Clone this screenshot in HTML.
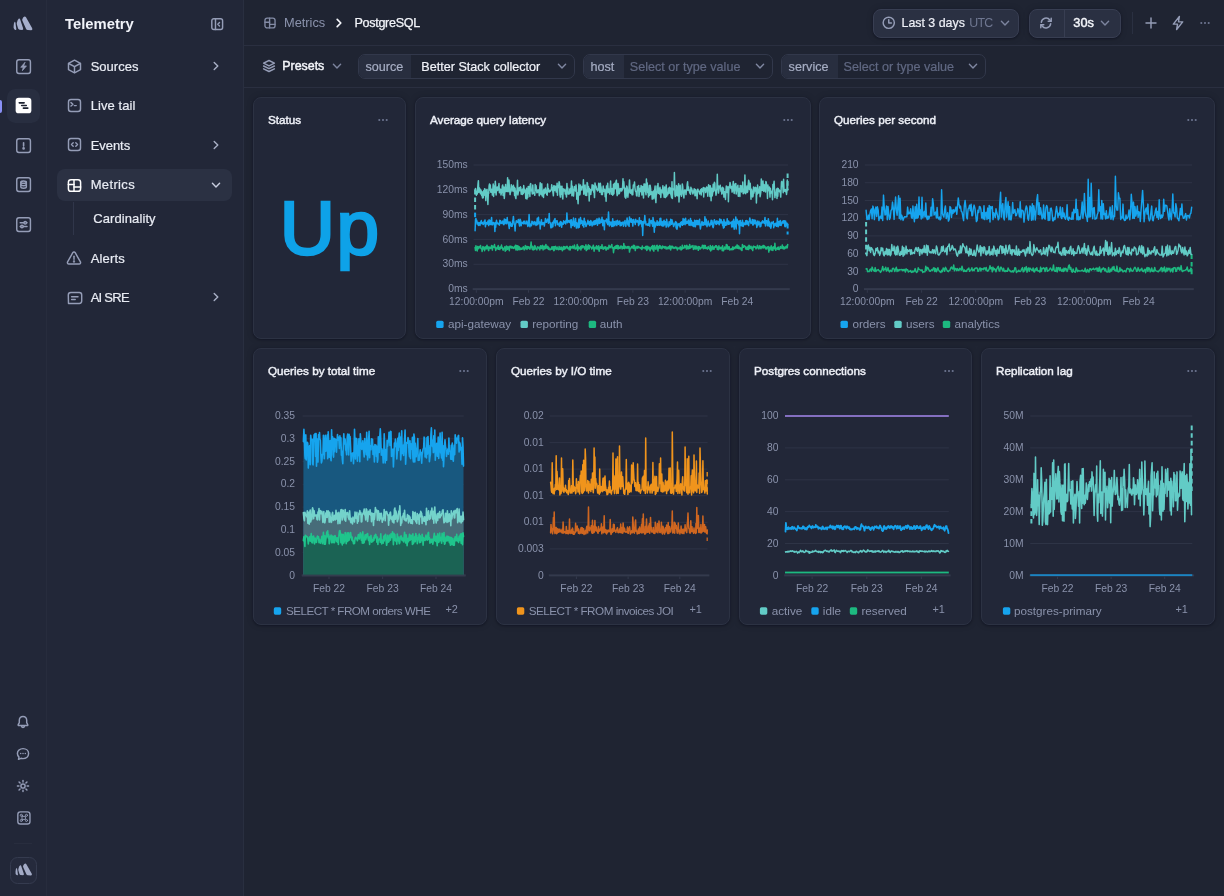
<!DOCTYPE html>
<html><head><meta charset="utf-8"><title>PostgreSQL - Metrics</title>
<style>
*{box-sizing:border-box;margin:0;padding:0}
html,body{width:1224px;height:896px;overflow:hidden;background:#1f2432;}
body{font-family:"Liberation Sans",sans-serif;color:#e6e9f2;position:relative;-webkit-font-smoothing:antialiased}
#app{position:absolute;left:0;top:0;width:1224px;height:896px;will-change:transform;overflow:hidden}
.abs{position:absolute}
.t{position:absolute;white-space:pre;height:20px;line-height:20px}
#rail{position:absolute;left:0;top:0;width:47px;height:896px;background:#222738;border-right:1px solid #272c3d}
#side{position:absolute;left:47px;top:0;width:197px;height:896px;background:#222738;border-right:1px solid #292f40}
#topline{position:absolute;left:244px;top:45px;width:980px;height:1px;background:#2a2f40}
#filtline{position:absolute;left:244px;top:87px;width:980px;height:1px;background:#2a2f40}
.card{position:absolute;background:#222738;border:1px solid #2c3243;border-radius:8px;box-shadow:0 1px 2px rgba(10,14,26,0.45),0 0 6px rgba(12,16,30,0.22)}
.ct{font-size:11.7px;font-weight:400;-webkit-text-stroke:0.45px #eef0f7;color:#eef0f7}
.nav{font-size:13px;color:#e9ecf4;-webkit-text-stroke:0.2px #e9ecf4;margin-top:0.5px}
.pill{position:absolute;top:54px;height:25px;border:1px solid #32384b;border-radius:7px;background:#1f2432;overflow:hidden}
.pill .lab{position:absolute;left:0;top:0;height:23px;background:#282e3f;}
.btn{position:absolute;background:#2a3042;border:1px solid #383e52;border-radius:8px;box-shadow:0 1px 2px rgba(10,14,26,0.45),0 0 6px rgba(12,16,30,0.22)}
svg{position:absolute;overflow:visible}
</style></head>
<body>
<div id="app">
<div id="rail"></div>
<div id="side"></div>
<svg style="left:13.40px;top:15.70px" width="20" height="15.00" viewBox="0 0 20 15"><g fill="#a6afcd" stroke="none"><path d="M0.6 10.0 Q0.8 7.0 1.5 6.0 Q2.1 5.5 2.4 6.6 L3.3 12.8 Q3.5 14.4 2.5 14.0 L1.5 13.4 Q0.7 12.8 0.6 11.6 Z"/><path d="M3.9 6.6 Q4.6 3.5 5.9 2.6 Q6.7 2.2 7.1 3.3 L10.1 12.2 Q10.6 13.9 9.2 13.9 L6.6 13.8 Q5.5 13.7 5.1 12.6 L3.9 8.6 Q3.6 7.6 3.9 6.6 Z"/><path d="M9.3 3.2 Q10.2 0.9 11.6 0.5 Q12.5 0.4 13.0 1.3 L19.2 12.3 Q19.9 14.1 18.2 14.2 L14.8 14.1 Q13.5 14.0 13.0 12.8 L9.4 4.8 Q9.0 4.0 9.3 3.2 Z"/></g></svg>
<svg style="left:15.80px;top:58.70px" width="15.2" height="15.2" viewBox="0 0 16 16" fill="none" stroke="#959db7" stroke-width="1.526" stroke-linecap="round" stroke-linejoin="round" ><rect x="0.8" y="0.8" width="14.4" height="14.4" rx="2.3"/><path d="M9.3 3.7 L5.0 8.7 H7.7 L6.7 12.3 L11.0 7.3 H8.3 Z" fill="#959db7" stroke-width="0.8"/></svg>
<div class="abs" style="left:6.5px;top:89px;width:33.5px;height:33.5px;border-radius:8.5px;background:#282e40"></div>
<div class="abs" style="left:0;top:99.5px;width:2px;height:13px;border-radius:0 2px 2px 0;background:#8a90f6"></div>
<svg style="left:15.00px;top:97.10px" width="17" height="17" viewBox="0 0 16 16" fill="none" stroke="#959db7" stroke-width="1.365" stroke-linecap="round" stroke-linejoin="round" ><rect x="0.6" y="0.6" width="14.8" height="14.8" rx="3" fill="#ffffff" stroke="none"/><g stroke="#1d2231" stroke-width="1.5"><path d="M4.0 5.5 H8.6"/><path d="M6.3 8 H10.6"/><path d="M7.9 10.5 H12.0"/></g></svg>
<svg style="left:15.80px;top:137.50px" width="15.2" height="15.2" viewBox="0 0 16 16" fill="none" stroke="#959db7" stroke-width="1.526" stroke-linecap="round" stroke-linejoin="round" ><rect x="0.8" y="0.8" width="14.4" height="14.4" rx="2.3"/><path d="M8 5.0 V8.5" stroke-width="1.7"/><circle cx="8" cy="11.0" r="0.65" fill="#959db7"/></svg>
<svg style="left:15.80px;top:177.00px" width="15.2" height="15.2" viewBox="0 0 16 16" fill="none" stroke="#959db7" stroke-width="1.526" stroke-linecap="round" stroke-linejoin="round" ><rect x="0.8" y="0.8" width="14.4" height="14.4" rx="2.3"/><ellipse cx="8" cy="5.4" rx="2.9" ry="1.25"/><path d="M5.1 5.4 V10.6 C5.1 11.3 6.4 11.85 8 11.85 C9.6 11.85 10.9 11.3 10.9 10.6 V5.4"/><path d="M5.1 8 C5.1 8.7 6.4 9.25 8 9.25 C9.6 9.25 10.9 8.7 10.9 8"/></svg>
<svg style="left:15.80px;top:216.50px" width="15.2" height="15.2" viewBox="0 0 16 16" fill="none" stroke="#959db7" stroke-width="1.526" stroke-linecap="round" stroke-linejoin="round" ><rect x="0.8" y="0.8" width="14.4" height="14.4" rx="2.3"/><path d="M4.4 6 H8.2"/><circle cx="9.7" cy="6" r="1.3"/><path d="M11.6 10 H7.8"/><circle cx="6.3" cy="10" r="1.3"/><path d="M11 6 H11.6"/><path d="M4.4 10 H5"/></svg>
<svg style="left:16.40px;top:714.70px" width="14" height="14" viewBox="0 0 14 14" fill="none" stroke="#959db7" stroke-width="1.450" stroke-linecap="round" stroke-linejoin="round" ><path d="M7 1.4 C4.7 1.4 3.3 3.1 3.3 5.3 V7.6 L2.2 9.7 C2.0 10.1 2.3 10.5 2.7 10.5 H11.3 C11.7 10.5 12.0 10.1 11.8 9.7 L10.7 7.6 V5.3 C10.7 3.1 9.3 1.4 7 1.4 Z"/><path d="M5.5 11 C5.7 11.9 6.3 12.4 7 12.4 C7.7 12.4 8.3 11.9 8.5 11"/></svg>
<svg style="left:16.40px;top:746.70px" width="14" height="14" viewBox="0 0 14 14" fill="none" stroke="#959db7" stroke-width="1.450" stroke-linecap="round" stroke-linejoin="round" ><path d="M7 1.6 C3.8 1.6 1.4 3.8 1.4 6.6 C1.4 8.0 2.0 9.2 3.0 10.1 L2.5 12.3 L5.0 11.3 C5.6 11.5 6.3 11.6 7 11.6 C10.2 11.6 12.6 9.4 12.6 6.6 C12.6 3.8 10.2 1.6 7 1.6 Z"/><g fill="#959db7" stroke="none"><circle cx="4.7" cy="6.6" r="0.75"/><circle cx="7" cy="6.6" r="0.75"/><circle cx="9.3" cy="6.6" r="0.75"/></g></svg>
<svg style="left:16.40px;top:778.90px" width="14" height="14" viewBox="0 0 14 14" fill="none" stroke="#959db7" stroke-width="1.450" stroke-linecap="round" stroke-linejoin="round" ><circle cx="7" cy="7" r="2.1"/><path d="M11.10 7.00 L12.60 7.00"/><path d="M9.90 9.90 L10.96 10.96"/><path d="M7.00 11.10 L7.00 12.60"/><path d="M4.10 9.90 L3.04 10.96"/><path d="M2.90 7.00 L1.40 7.00"/><path d="M4.10 4.10 L3.04 3.04"/><path d="M7.00 2.90 L7.00 1.40"/><path d="M9.90 4.10 L10.96 3.04"/></svg>
<svg style="left:16.50px;top:811.20px" width="13.8" height="13.8" viewBox="0 0 15 15" fill="none" stroke="#959db7" stroke-width="1.576" stroke-linecap="round" stroke-linejoin="round" ><rect x="0.9" y="0.9" width="13.2" height="13.2" rx="2.8" stroke-width="1.5"/><g stroke-width="1.0"><path d="M5.85 5.85 H9.15 V9.15 H5.85 Z"/><circle cx="4.7" cy="4.7" r="1.15"/><circle cx="10.3" cy="4.7" r="1.15"/><circle cx="4.7" cy="10.3" r="1.15"/><circle cx="10.3" cy="10.3" r="1.15"/></g></svg>
<div class="abs" style="left:14px;top:843px;width:18px;height:1px;background:#282d3e"></div>
<div class="abs" style="left:10px;top:856.5px;width:27px;height:27px;border-radius:7.5px;background:#252a3c;border:1px solid #353b4f"></div>
<svg style="left:14.65px;top:863.44px" width="17.5" height="13.12" viewBox="0 0 20 15"><g fill="#a3abc6" stroke="none"><path d="M0.6 10.0 Q0.8 7.0 1.5 6.0 Q2.1 5.5 2.4 6.6 L3.3 12.8 Q3.5 14.4 2.5 14.0 L1.5 13.4 Q0.7 12.8 0.6 11.6 Z"/><path d="M3.9 6.6 Q4.6 3.5 5.9 2.6 Q6.7 2.2 7.1 3.3 L10.1 12.2 Q10.6 13.9 9.2 13.9 L6.6 13.8 Q5.5 13.7 5.1 12.6 L3.9 8.6 Q3.6 7.6 3.9 6.6 Z"/><path d="M9.3 3.2 Q10.2 0.9 11.6 0.5 Q12.5 0.4 13.0 1.3 L19.2 12.3 Q19.9 14.1 18.2 14.2 L14.8 14.1 Q13.5 14.0 13.0 12.8 L9.4 4.8 Q9.0 4.0 9.3 3.2 Z"/></g></svg>
<div class="t " style="left:65px;top:14.399999999999999px;font-size:14.8px;font-weight:700;color:#f1f3f9">Telemetry</div>
<svg style="left:210.70px;top:18.00px" width="12.4" height="12.4" viewBox="0 0 12.4 12.4" fill="none" stroke="#959db7" stroke-width="1.450" stroke-linecap="round" stroke-linejoin="round" stroke="#6f7792"><rect x="0.8" y="0.8" width="10.8" height="10.8" rx="2"/><path d="M4.5 0.8 V11.6"/><path d="M8.5 4.5 L6.8 6.2 L8.5 7.9"/></svg>
<svg style="left:66.90px;top:58.80px" width="15" height="15" viewBox="0 0 15 15" fill="none" stroke="#959db7" stroke-width="1.450" stroke-linecap="round" stroke-linejoin="round" ><path d="M7.5 1.2 L13.5 4.4 V10.6 L7.5 13.8 L1.5 10.6 V4.4 Z"/><path d="M1.7 4.5 L7.5 7.6 L13.3 4.5"/><path d="M7.5 7.6 V13.6"/></svg>
<svg style="left:67.00px;top:97.90px" width="15" height="15" viewBox="0 0 15 15" fill="none" stroke="#959db7" stroke-width="1.450" stroke-linecap="round" stroke-linejoin="round" ><rect x="1.5" y="1.5" width="12" height="12" rx="2.5"/><path d="M4.0 4.6 L5.9 6.3 L4.0 8.0"/><path d="M7.3 7.6 H9.2"/></svg>
<svg style="left:67.00px;top:137.40px" width="15" height="15" viewBox="0 0 15 15" fill="none" stroke="#959db7" stroke-width="1.450" stroke-linecap="round" stroke-linejoin="round" ><rect x="1.5" y="1.5" width="12" height="12" rx="2.5"/><path d="M6.2 5.8 L4.5 7.5 L6.2 9.2"/><path d="M8.8 5.8 L10.5 7.5 L8.8 9.2"/></svg>
<div class="abs" style="left:57px;top:168.5px;width:175px;height:32px;border-radius:8px;background:#2b3143"></div>
<div class="abs" style="left:73.4px;top:202px;width:1px;height:33px;background:#30364a"></div>
<svg style="left:66.80000000000001px;top:177.5px" width="15" height="15" viewBox="0 0 15 15" fill="none" stroke="#ffffff" stroke-width="1.5" stroke-linecap="round" stroke-linejoin="round"><rect x="1.4" y="1.7" width="12.2" height="11.6" rx="2.6"/><path d="M7.0 1.7 V13.3"/><path d="M1.4 6.6 H7.0"/><path d="M7.0 9.0 H13.6"/></svg>
<svg style="left:66.40px;top:250.20px" width="16" height="16" viewBox="0 0 16 16" fill="none" stroke="#959db7" stroke-width="1.450" stroke-linecap="round" stroke-linejoin="round" ><path d="M8 2.0 C8.5 2.0 8.9 2.2 9.2 2.7 L14.4 11.9 C14.9 12.8 14.3 14.0 13.2 14.0 H2.8 C1.7 14.0 1.1 12.8 1.6 11.9 L6.8 2.7 C7.1 2.2 7.5 2.0 8 2.0 Z"/><path d="M8 6.3 V9.2"/><circle cx="8" cy="11.4" r="0.45" fill="#959db7"/></svg>
<svg style="left:66.60px;top:289.80px" width="16" height="16" viewBox="0 0 16 16" fill="none" stroke="#959db7" stroke-width="1.450" stroke-linecap="round" stroke-linejoin="round" ><path d="M3.9 2.5 H12.3 C13.7 2.5 14.7 3.5 14.7 4.9 V11.1 C14.7 12.5 13.7 13.5 12.3 13.5 H1.5 L1.3 4.9 C1.3 3.5 2.5 2.5 3.9 2.5 Z"/><path d="M4.6 6.7 H11.0"/><path d="M4.6 9.5 H8.2"/></svg>
<svg style="left:211.8px;top:61px" width="8" height="10" viewBox="0 0 8 10" fill="none" stroke="#a9b0c6" stroke-width="1.4" stroke-linecap="round" stroke-linejoin="round"><path d="M2.2 1.4 L5.8 5 L2.2 8.6"/></svg>
<svg style="left:211.8px;top:140px" width="8" height="10" viewBox="0 0 8 10" fill="none" stroke="#a9b0c6" stroke-width="1.4" stroke-linecap="round" stroke-linejoin="round"><path d="M2.2 1.4 L5.8 5 L2.2 8.6"/></svg>
<svg style="left:211.8px;top:292px" width="8" height="10" viewBox="0 0 8 10" fill="none" stroke="#a9b0c6" stroke-width="1.4" stroke-linecap="round" stroke-linejoin="round"><path d="M2.2 1.4 L5.8 5 L2.2 8.6"/></svg>
<svg style="left:210.8px;top:180.8px" width="10" height="8" viewBox="0 0 10 8" fill="none" stroke="#c9cee0" stroke-width="1.4" stroke-linecap="round" stroke-linejoin="round"><path d="M1.4 2.3 L5 5.9 L8.6 2.3"/></svg>
<div class="t nav" style="left:90.7px;top:56px;letter-spacing:0px">Sources</div>
<div class="t nav" style="left:90.7px;top:95.5px;letter-spacing:0.07px">Live tail</div>
<div class="t nav" style="left:90.7px;top:135px;letter-spacing:-0.05px">Events</div>
<div class="t nav" style="left:90.7px;top:174.5px;letter-spacing:0.35px">Metrics</div>
<div class="t nav" style="left:90.7px;top:248px;letter-spacing:0.17px">Alerts</div>
<div class="t nav" style="left:90.7px;top:287px;letter-spacing:-0.75px">AI SRE</div>
<div class="t nav" style="left:93.2px;top:208.5px;letter-spacing:0.1px">Cardinality</div>
<div id="topline"></div><div id="filtline"></div>
<div class="t " style="left:284px;top:13px;font-size:12.8px;color:#8b93ad">Metrics</div>
<div class="t " style="left:354.5px;top:13px;font-size:12.6px;letter-spacing:-0.32px;-webkit-text-stroke:0.25px #f3f5fa;color:#f3f5fa">PostgreSQL</div>
<div class="btn" style="left:873px;top:9px;width:146px;height:29px"></div>
<div class="t " style="left:901.5px;top:13px;font-size:12.4px;-webkit-text-stroke:0.2px #eef0f7;color:#eef0f7">Last 3 days</div>
<div class="t " style="left:969.3px;top:13px;font-size:12.4px;letter-spacing:-0.8px;color:#6f7791">UTC</div>
<div class="btn" style="left:1029px;top:9px;width:92px;height:29px"></div>
<div class="abs" style="left:1064px;top:10px;width:1px;height:27px;background:#383e52"></div>
<div class="t " style="left:1073.3px;top:13px;font-size:12.8px;font-weight:400;-webkit-text-stroke:0.45px #f3f5fa;color:#f3f5fa">30s</div>
<div class="abs" style="left:1132px;top:12px;width:1px;height:22px;background:#2a3041"></div>
<svg style="left:263.8px;top:17.4px" width="12" height="12" viewBox="0 0 15 15" fill="none" stroke="#838ba5" stroke-width="1.7" stroke-linecap="round" stroke-linejoin="round"><rect x="1.2" y="1.4" width="12.6" height="12.2" rx="2.8"/><path d="M7.0 1.4 V13.6"/><path d="M1.2 6.6 H7.0"/><path d="M7.0 9.2 H13.8"/></svg>
<svg style="left:334.5px;top:18.3px" width="8" height="10" viewBox="0 0 8 10" fill="none" stroke="#f3f5fa" stroke-width="1.7" stroke-linecap="round" stroke-linejoin="round"><path d="M2.2 1.4 L5.8 5 L2.2 8.6"/></svg>
<svg style="left:882.35px;top:16.25px" width="13.5" height="13.5" viewBox="0 0 13.5 13.5" fill="none" stroke="#959db7" stroke-width="1.450" stroke-linecap="round" stroke-linejoin="round" stroke="#c3c8da"><circle cx="6.75" cy="6.75" r="5.6"/><path d="M6.75 3.6 V6.9 H9.4"/></svg>
<svg style="left:999.8px;top:19.3px" width="10" height="8" viewBox="0 0 10 8" fill="none" stroke="#7d859f" stroke-width="1.4" stroke-linecap="round" stroke-linejoin="round"><path d="M1.4 2.3 L5 5.9 L8.6 2.3"/></svg>
<svg style="left:1039.40px;top:16.00px" width="14" height="14" viewBox="0 0 14 14" fill="none" stroke="#959db7" stroke-width="1.450" stroke-linecap="round" stroke-linejoin="round" stroke="#c3c8da"><path d="M2.3 6.3 A4.8 4.8 0 0 1 10.9 4.0 L12.0 5.2"/><path d="M12.2 2.3 V5.3 H9.2"/><path d="M11.7 7.7 A4.8 4.8 0 0 1 3.1 10.0 L2.0 8.8"/><path d="M1.8 11.7 V8.7 H4.8"/></svg>
<svg style="left:1100.2px;top:19.3px" width="10" height="8" viewBox="0 0 10 8" fill="none" stroke="#7d859f" stroke-width="1.4" stroke-linecap="round" stroke-linejoin="round"><path d="M1.4 2.3 L5 5.9 L8.6 2.3"/></svg>
<svg style="left:1145.40px;top:17.00px" width="12" height="12" viewBox="0 0 12 12" fill="none" stroke="#959db7" stroke-width="1.450" stroke-linecap="round" stroke-linejoin="round" stroke="#c3c8da"><path d="M6 1 V11 M1 6 H11"/></svg>
<svg style="left:1170.00px;top:15.20px" width="16" height="16" viewBox="0 0 14 14" fill="none" stroke="#959db7" stroke-width="1.269" stroke-linecap="round" stroke-linejoin="round" stroke="#9ea6be"><path d="M8.2 1.3 L2.9 8.0 H6.6 L5.8 12.7 L11.1 6.0 H7.4 Z"/></svg>
<svg style="left:1199px;top:20px" width="12" height="6" viewBox="0 0 12 6"><g fill="#6d7590"><circle cx="2.3" cy="3" r="1.05"/><circle cx="6" cy="3" r="1.05"/><circle cx="9.7" cy="3" r="1.05"/></g></svg>
<div class="t " style="left:282.3px;top:56.400000000000006px;font-size:12.4px;font-weight:400;-webkit-text-stroke:0.45px #f3f5fa;color:#f3f5fa">Presets</div>
<div class="pill" style="left:357.5px;width:217.5px"><div class="lab" style="width:52.5px"></div></div><div class="t " style="left:365.5px;top:56.8px;font-size:12.6px;color:#a6adc3;-webkit-text-stroke:0.2px #a6adc3">source</div><div class="t " style="left:421.3px;top:56.8px;font-size:12.6px;color:#f1f3f9;-webkit-text-stroke:0.2px #f1f3f9">Better Stack collector</div>
<div class="pill" style="left:582.5px;width:190.5px"><div class="lab" style="width:40.5px"></div></div><div class="t " style="left:590.5px;top:56.8px;font-size:12.6px;color:#a6adc3;-webkit-text-stroke:0.2px #a6adc3">host</div><div class="t " style="left:629.8px;top:56.8px;font-size:12.6px;color:#606882;-webkit-text-stroke:0.2px #606882">Select or type value</div>
<div class="pill" style="left:780.5px;width:205.5px"><div class="lab" style="width:56.5px"></div></div><div class="t " style="left:788.6px;top:56.8px;font-size:12.6px;color:#a6adc3;-webkit-text-stroke:0.2px #a6adc3">service</div><div class="t " style="left:843.5px;top:56.8px;font-size:12.6px;color:#606882;-webkit-text-stroke:0.2px #606882">Select or type value</div>
<svg style="left:262.00px;top:59.00px" width="14" height="14" viewBox="0 0 14 14" fill="none" stroke="#959db7" stroke-width="1.450" stroke-linecap="round" stroke-linejoin="round" stroke="#b9c0d5"><path d="M7 1.5 L12.4 4.2 L7 6.9 L1.6 4.2 Z"/><path d="M1.6 7.0 L7 9.7 L12.4 7.0"/><path d="M1.6 9.8 L7 12.5 L12.4 9.8"/></svg>
<svg style="left:331.8px;top:62.3px" width="10" height="8" viewBox="0 0 10 8" fill="none" stroke="#7d859f" stroke-width="1.4" stroke-linecap="round" stroke-linejoin="round"><path d="M1.4 2.3 L5 5.9 L8.6 2.3"/></svg>
<svg style="left:557px;top:62.3px" width="10" height="8" viewBox="0 0 10 8" fill="none" stroke="#8088a2" stroke-width="1.4" stroke-linecap="round" stroke-linejoin="round"><path d="M1.4 2.3 L5 5.9 L8.6 2.3"/></svg>
<svg style="left:754.7px;top:62.3px" width="10" height="8" viewBox="0 0 10 8" fill="none" stroke="#8088a2" stroke-width="1.4" stroke-linecap="round" stroke-linejoin="round"><path d="M1.4 2.3 L5 5.9 L8.6 2.3"/></svg>
<svg style="left:968px;top:62.3px" width="10" height="8" viewBox="0 0 10 8" fill="none" stroke="#8088a2" stroke-width="1.4" stroke-linecap="round" stroke-linejoin="round"><path d="M1.4 2.3 L5 5.9 L8.6 2.3"/></svg>
<div class="card" style="left:253px;top:97px;width:153px;height:242px"></div>
<div class="t ct" style="left:268px;top:110px;">Status</div>
<svg style="left:376.7px;top:117px" width="12" height="6" viewBox="0 0 12 6"><g fill="#6d7590"><circle cx="2.3" cy="3" r="1.05"/><circle cx="6" cy="3" r="1.05"/><circle cx="9.7" cy="3" r="1.05"/></g></svg>
<div class="card" style="left:415px;top:97px;width:396px;height:242px"></div>
<div class="t ct" style="left:430px;top:110px;">Average query latency</div>
<svg style="left:781.7px;top:117px" width="12" height="6" viewBox="0 0 12 6"><g fill="#6d7590"><circle cx="2.3" cy="3" r="1.05"/><circle cx="6" cy="3" r="1.05"/><circle cx="9.7" cy="3" r="1.05"/></g></svg>
<div class="card" style="left:819px;top:97px;width:396px;height:242px"></div>
<div class="t ct" style="left:834px;top:110px;">Queries per second</div>
<svg style="left:1185.7px;top:117px" width="12" height="6" viewBox="0 0 12 6"><g fill="#6d7590"><circle cx="2.3" cy="3" r="1.05"/><circle cx="6" cy="3" r="1.05"/><circle cx="9.7" cy="3" r="1.05"/></g></svg>
<div class="card" style="left:253px;top:348px;width:234px;height:277px"></div>
<div class="t ct" style="left:268px;top:361px;">Queries by total time</div>
<svg style="left:457.7px;top:368px" width="12" height="6" viewBox="0 0 12 6"><g fill="#6d7590"><circle cx="2.3" cy="3" r="1.05"/><circle cx="6" cy="3" r="1.05"/><circle cx="9.7" cy="3" r="1.05"/></g></svg>
<div class="card" style="left:496px;top:348px;width:234px;height:277px"></div>
<div class="t ct" style="left:511px;top:361px;">Queries by I/O time</div>
<svg style="left:700.7px;top:368px" width="12" height="6" viewBox="0 0 12 6"><g fill="#6d7590"><circle cx="2.3" cy="3" r="1.05"/><circle cx="6" cy="3" r="1.05"/><circle cx="9.7" cy="3" r="1.05"/></g></svg>
<div class="card" style="left:739px;top:348px;width:233px;height:277px"></div>
<div class="t ct" style="left:754px;top:361px;">Postgres connections</div>
<svg style="left:942.7px;top:368px" width="12" height="6" viewBox="0 0 12 6"><g fill="#6d7590"><circle cx="2.3" cy="3" r="1.05"/><circle cx="6" cy="3" r="1.05"/><circle cx="9.7" cy="3" r="1.05"/></g></svg>
<div class="card" style="left:981px;top:348px;width:234px;height:277px"></div>
<div class="t ct" style="left:996px;top:361px;">Replication lag</div>
<svg style="left:1185.7px;top:368px" width="12" height="6" viewBox="0 0 12 6"><g fill="#6d7590"><circle cx="2.3" cy="3" r="1.05"/><circle cx="6" cy="3" r="1.05"/><circle cx="9.7" cy="3" r="1.05"/></g></svg>
<div class="abs" style="left:253.6px;top:173.3px;width:153px;height:110px;line-height:110px;text-align:center;font-size:76.5px;font-weight:400;-webkit-text-stroke:2.7px #0ea2e8;paint-order:stroke fill;color:#0ea2e8;letter-spacing:1.5px">Up</div>
<svg style="left:0;top:0" width="1224" height="896" viewBox="0 0 1224 896" font-family="Liberation Sans, sans-serif">
<rect x="473.5" y="164.5" width="314.5" height="1" fill="#2e3446"/><text x="467.7" y="168.1" text-anchor="end" font-size="10.3" fill="#8a92ab" >150ms</text><rect x="473.5" y="189.3" width="314.5" height="1" fill="#2e3446"/><text x="467.7" y="192.9" text-anchor="end" font-size="10.3" fill="#8a92ab" >120ms</text><rect x="473.5" y="214.1" width="314.5" height="1" fill="#2e3446"/><text x="467.7" y="217.7" text-anchor="end" font-size="10.3" fill="#8a92ab" >90ms</text><rect x="473.5" y="238.9" width="314.5" height="1" fill="#2e3446"/><text x="467.7" y="242.5" text-anchor="end" font-size="10.3" fill="#8a92ab" >60ms</text><rect x="473.5" y="263.8" width="314.5" height="1" fill="#2e3446"/><text x="467.7" y="267.4" text-anchor="end" font-size="10.3" fill="#8a92ab" >30ms</text><rect x="472.7" y="288.1" width="317.1" height="2" fill="#343a4d"/><text x="467.7" y="292.2" text-anchor="end" font-size="10.3" fill="#8a92ab" >0ms</text>
<path d="M475.1 189.8 L475.1 212.0" fill="none" stroke="#62cbc6" stroke-width="2.0" stroke-dasharray="4.6 3"/>
<path d="M475.1 212.6 L475.1 218.0" fill="none" stroke="#16a4ee" stroke-width="2.0" stroke-dasharray="4.6 3"/>
<path d="M787.6 173.5 L787.6 190.1" fill="none" stroke="#62cbc6" stroke-width="2.0" stroke-dasharray="4.6 3"/>
<path d="M787.6 224.0 L787.6 234.5" fill="none" stroke="#16a4ee" stroke-width="2.0" stroke-dasharray="4.6 3"/>
<path d="M475.1 189.8 L475.5 188.5 L475.9 191.0 L476.3 195.3 L476.7 191.8 L477.2 194.1 L477.6 189.6 L478.0 184.1 L478.4 180.7 L478.8 192.5 L479.2 187.7 L479.6 188.3 L480.0 189.4 L480.5 193.8 L480.9 189.9 L481.3 191.4 L481.7 195.6 L482.1 191.8 L482.5 198.0 L482.9 195.4 L483.3 197.7 L483.7 190.8 L484.2 195.3 L484.6 188.7 L485.0 189.1 L485.4 191.2 L485.8 200.6 L486.2 192.1 L486.6 190.0 L487.0 189.3 L487.5 196.4 L487.9 204.4 L488.3 194.0 L488.7 193.3 L489.1 186.0 L489.5 184.0 L489.9 190.0 L490.3 184.9 L490.8 192.3 L491.2 190.3 L491.6 189.3 L492.0 189.5 L492.4 195.1 L492.8 189.5 L493.2 184.0 L493.6 196.5 L494.0 186.1 L494.5 189.3 L494.9 192.6 L495.3 181.2 L495.7 186.5 L496.1 195.0 L496.5 189.5 L496.9 187.3 L497.3 190.6 L497.8 186.9 L498.2 190.1 L498.6 186.9 L499.0 183.6 L499.4 192.7 L499.8 188.9 L500.2 191.8 L500.6 189.3 L501.0 194.9 L501.5 192.3 L501.9 190.7 L502.3 186.0 L502.7 184.9 L503.1 195.5 L503.5 193.2 L503.9 187.0 L504.3 198.4 L504.8 191.8 L505.2 190.2 L505.6 184.4 L506.0 191.4 L506.4 191.2 L506.8 191.4 L507.2 190.9 L507.6 177.8 L508.0 191.7 L508.5 191.1 L508.9 180.0 L509.3 185.9 L509.7 190.7 L510.1 194.6 L510.5 189.9 L510.9 191.7 L511.3 184.8 L511.8 187.0 L512.2 189.9 L512.6 186.9 L513.0 191.3 L513.4 185.3 L513.8 189.8 L514.2 187.3 L514.6 195.4 L515.1 188.3 L515.5 197.1 L515.9 198.6 L516.3 191.1 L516.7 193.7 L517.1 189.1 L517.5 180.2 L517.9 194.9 L518.3 192.5 L518.8 188.9 L519.2 187.7 L519.6 190.6 L520.0 190.7 L520.4 186.8 L520.8 187.6 L521.2 194.3 L521.6 190.2 L522.1 189.7 L522.5 194.4 L522.9 188.7 L523.3 193.5 L523.7 185.6 L524.1 189.0 L524.5 189.4 L524.9 192.4 L525.3 190.3 L525.8 198.4 L526.2 194.7 L526.6 188.3 L527.0 199.0 L527.4 190.5 L527.8 197.3 L528.2 186.6 L528.6 193.5 L529.1 186.5 L529.5 189.3 L529.9 196.4 L530.3 184.4 L530.7 183.6 L531.1 190.1 L531.5 191.0 L531.9 190.5 L532.3 194.0 L532.8 185.1 L533.2 192.2 L533.6 193.5 L534.0 193.2 L534.4 192.5 L534.8 195.3 L535.2 184.4 L535.6 190.5 L536.1 185.7 L536.5 189.8 L536.9 192.8 L537.3 191.2 L537.7 192.2 L538.1 189.8 L538.5 191.4 L538.9 191.1 L539.3 195.8 L539.8 187.5 L540.2 182.7 L540.6 192.7 L541.0 194.4 L541.4 189.9 L541.8 183.8 L542.2 196.1 L542.6 190.7 L543.1 192.5 L543.5 197.4 L543.9 189.2 L544.3 193.7 L544.7 189.5 L545.1 193.1 L545.5 187.9 L545.9 192.1 L546.4 190.4 L546.8 194.6 L547.2 195.1 L547.6 184.1 L548.0 192.0 L548.4 188.6 L548.8 190.0 L549.2 191.7 L549.6 192.0 L550.1 190.5 L550.5 191.1 L550.9 190.5 L551.3 189.7 L551.7 184.8 L552.1 186.9 L552.5 188.2 L552.9 192.2 L553.4 195.8 L553.8 185.7 L554.2 185.7 L554.6 190.4 L555.0 187.5 L555.4 186.5 L555.8 186.2 L556.2 191.9 L556.6 191.8 L557.1 183.3 L557.5 195.2 L557.9 186.1 L558.3 187.7 L558.7 186.1 L559.1 181.7 L559.5 183.4 L559.9 194.7 L560.4 197.1 L560.8 186.3 L561.2 194.2 L561.6 189.9 L562.0 186.2 L562.4 196.9 L562.8 198.9 L563.2 188.7 L563.6 189.6 L564.1 190.9 L564.5 189.7 L564.9 189.2 L565.3 194.0 L565.7 190.5 L566.1 194.0 L566.5 196.9 L566.9 183.4 L567.4 190.1 L567.8 188.1 L568.2 194.1 L568.6 192.7 L569.0 194.1 L569.4 193.6 L569.8 189.0 L570.2 193.2 L570.7 188.3 L571.1 188.4 L571.5 181.1 L571.9 195.8 L572.3 186.0 L572.7 190.2 L573.1 189.9 L573.5 196.1 L573.9 191.8 L574.4 186.6 L574.8 190.2 L575.2 189.5 L575.6 191.1 L576.0 184.9 L576.4 189.9 L576.8 199.3 L577.2 192.8 L577.7 198.3 L578.1 203.8 L578.5 192.1 L578.9 184.1 L579.3 189.6 L579.7 194.9 L580.1 193.9 L580.5 185.0 L580.9 189.1 L581.4 189.6 L581.8 190.0 L582.2 186.4 L582.6 186.4 L583.0 187.4 L583.4 179.8 L583.8 194.3 L584.2 187.6 L584.7 192.8 L585.1 185.1 L585.5 195.3 L585.9 190.4 L586.3 189.9 L586.7 195.5 L587.1 182.4 L587.5 183.5 L587.9 191.8 L588.4 186.5 L588.8 188.2 L589.2 201.1 L589.6 188.7 L590.0 190.1 L590.4 189.5 L590.8 194.5 L591.2 191.0 L591.7 190.6 L592.1 184.7 L592.5 188.4 L592.9 189.8 L593.3 185.3 L593.7 192.2 L594.1 191.5 L594.5 197.6 L595.0 183.1 L595.4 185.7 L595.8 185.9 L596.2 186.9 L596.6 189.3 L597.0 188.9 L597.4 190.9 L597.8 190.7 L598.2 189.6 L598.7 183.3 L599.1 187.4 L599.5 190.1 L599.9 192.3 L600.3 183.2 L600.7 185.9 L601.1 187.6 L601.5 194.4 L602.0 191.3 L602.4 194.6 L602.8 190.1 L603.2 186.1 L603.6 191.5 L604.0 190.8 L604.4 190.8 L604.8 189.3 L605.2 196.7 L605.7 190.8 L606.1 201.3 L606.5 186.0 L606.9 193.1 L607.3 187.3 L607.7 183.3 L608.1 190.0 L608.5 192.4 L609.0 189.0 L609.4 189.8 L609.8 194.1 L610.2 187.8 L610.6 181.1 L611.0 190.9 L611.4 190.7 L611.8 194.3 L612.2 188.4 L612.7 195.2 L613.1 194.6 L613.5 184.3 L613.9 193.7 L614.3 185.2 L614.7 183.3 L615.1 188.7 L615.5 187.4 L616.0 181.4 L616.4 180.3 L616.8 192.4 L617.2 195.6 L617.6 189.6 L618.0 183.5 L618.4 185.7 L618.8 193.9 L619.3 193.5 L619.7 192.0 L620.1 188.6 L620.5 190.7 L620.9 188.9 L621.3 188.5 L621.7 191.1 L622.1 190.0 L622.5 188.9 L623.0 178.7 L623.4 187.7 L623.8 181.8 L624.2 187.3 L624.6 189.6 L625.0 197.1 L625.4 188.2 L625.8 198.2 L626.3 195.9 L626.7 186.1 L627.1 186.8 L627.5 190.5 L627.9 197.2 L628.3 191.4 L628.7 192.7 L629.1 187.1 L629.5 180.1 L630.0 188.9 L630.4 193.2 L630.8 192.9 L631.2 190.1 L631.6 190.6 L632.0 194.8 L632.4 189.3 L632.8 194.8 L633.3 185.0 L633.7 185.2 L634.1 185.2 L634.5 182.1 L634.9 187.6 L635.3 190.4 L635.7 191.5 L636.1 191.3 L636.5 195.4 L637.0 196.0 L637.4 186.4 L637.8 190.6 L638.2 188.9 L638.6 185.5 L639.0 196.5 L639.4 193.2 L639.8 189.1 L640.3 188.1 L640.7 191.4 L641.1 185.4 L641.5 188.9 L641.9 195.0 L642.3 193.8 L642.7 186.4 L643.1 187.8 L643.5 198.0 L644.0 184.0 L644.4 187.2 L644.8 184.0 L645.2 191.5 L645.6 191.7 L646.0 194.7 L646.4 178.9 L646.8 190.6 L647.3 183.0 L647.7 192.6 L648.1 189.1 L648.5 197.0 L648.9 191.5 L649.3 185.6 L649.7 195.2 L650.1 185.2 L650.6 188.4 L651.0 194.3 L651.4 192.0 L651.8 191.8 L652.2 199.3 L652.6 192.1 L653.0 193.4 L653.4 191.1 L653.8 198.8 L654.3 195.4 L654.7 190.0 L655.1 186.0 L655.5 196.4 L655.9 202.6 L656.3 192.6 L656.7 194.0 L657.1 186.1 L657.6 192.0 L658.0 183.4 L658.4 193.2 L658.8 188.2 L659.2 190.8 L659.6 194.1 L660.0 187.3 L660.4 190.5 L660.8 197.5 L661.3 190.0 L661.7 192.6 L662.1 190.3 L662.5 189.6 L662.9 185.7 L663.3 193.7 L663.7 190.0 L664.1 197.2 L664.6 187.0 L665.0 194.5 L665.4 197.6 L665.8 190.1 L666.2 185.1 L666.6 196.4 L667.0 194.5 L667.4 193.0 L667.8 194.7 L668.3 188.2 L668.7 193.3 L669.1 192.9 L669.5 187.3 L669.9 193.1 L670.3 188.0 L670.7 194.0 L671.1 195.0 L671.6 197.7 L672.0 181.8 L672.4 198.5 L672.8 188.8 L673.2 190.0 L673.6 189.1 L674.0 189.6 L674.4 172.5 L674.9 194.3 L675.3 196.5 L675.7 194.2 L676.1 195.6 L676.5 185.6 L676.9 186.3 L677.3 194.0 L677.7 195.8 L678.1 191.3 L678.6 183.8 L679.0 202.0 L679.4 193.3 L679.8 194.4 L680.2 185.3 L680.6 194.5 L681.0 191.0 L681.4 196.3 L681.9 194.0 L682.3 183.9 L682.7 186.3 L683.1 191.5 L683.5 193.6 L683.9 198.0 L684.3 191.5 L684.7 190.0 L685.1 190.2 L685.6 190.2 L686.0 194.6 L686.4 190.1 L686.8 190.0 L687.2 184.3 L687.6 181.8 L688.0 190.4 L688.4 186.7 L688.9 190.1 L689.3 190.5 L689.7 193.0 L690.1 190.1 L690.5 194.3 L690.9 187.2 L691.3 190.3 L691.7 188.7 L692.1 190.6 L692.6 192.9 L693.0 193.9 L693.4 190.8 L693.8 192.2 L694.2 188.8 L694.6 189.8 L695.0 195.7 L695.4 189.5 L695.9 195.6 L696.3 192.5 L696.7 191.1 L697.1 198.7 L697.5 189.4 L697.9 189.2 L698.3 190.5 L698.7 191.6 L699.2 191.4 L699.6 194.0 L700.0 191.0 L700.4 192.2 L700.8 189.4 L701.2 195.0 L701.6 188.8 L702.0 189.2 L702.4 190.4 L702.9 191.7 L703.3 187.4 L703.7 197.0 L704.1 187.8 L704.5 188.8 L704.9 188.6 L705.3 188.2 L705.7 192.6 L706.2 190.9 L706.6 187.1 L707.0 188.0 L707.4 188.9 L707.8 196.3 L708.2 187.5 L708.6 184.8 L709.0 185.5 L709.4 188.8 L709.9 196.5 L710.3 185.8 L710.7 190.5 L711.1 200.7 L711.5 188.2 L711.9 196.2 L712.3 195.4 L712.7 192.6 L713.2 184.3 L713.6 191.4 L714.0 188.7 L714.4 182.3 L714.8 183.0 L715.2 190.3 L715.6 190.9 L716.0 195.2 L716.4 192.8 L716.9 188.0 L717.3 174.2 L717.7 189.3 L718.1 185.5 L718.5 193.1 L718.9 190.1 L719.3 186.7 L719.7 187.3 L720.2 185.2 L720.6 188.1 L721.0 191.2 L721.4 188.3 L721.8 194.1 L722.2 193.4 L722.6 187.3 L723.0 190.1 L723.5 188.3 L723.9 197.1 L724.3 191.4 L724.7 192.4 L725.1 193.5 L725.5 199.5 L725.9 191.3 L726.3 186.0 L726.7 188.2 L727.2 192.4 L727.6 189.9 L728.0 186.6 L728.4 201.7 L728.8 190.4 L729.2 187.5 L729.6 186.9 L730.0 182.5 L730.5 184.9 L730.9 188.5 L731.3 188.5 L731.7 186.4 L732.1 192.1 L732.5 190.0 L732.9 185.9 L733.3 181.4 L733.7 190.5 L734.2 193.5 L734.6 189.0 L735.0 184.0 L735.4 190.0 L735.8 183.5 L736.2 194.0 L736.6 190.6 L737.0 190.7 L737.5 186.4 L737.9 185.3 L738.3 196.3 L738.7 193.8 L739.1 188.4 L739.5 192.7 L739.9 196.4 L740.3 185.4 L740.7 187.7 L741.2 187.7 L741.6 191.9 L742.0 185.4 L742.4 190.9 L742.8 182.0 L743.2 193.7 L743.6 193.5 L744.0 188.9 L744.5 192.8 L744.9 175.0 L745.3 188.7 L745.7 193.8 L746.1 189.5 L746.5 191.3 L746.9 185.9 L747.3 192.5 L747.7 191.7 L748.2 184.6 L748.6 180.2 L749.0 181.2 L749.4 189.5 L749.8 187.1 L750.2 183.2 L750.6 190.4 L751.0 199.2 L751.5 189.3 L751.9 191.5 L752.3 193.4 L752.7 196.9 L753.1 196.0 L753.5 187.0 L753.9 193.1 L754.3 190.4 L754.8 188.9 L755.2 187.2 L755.6 191.3 L756.0 187.7 L756.4 203.0 L756.8 191.4 L757.2 194.2 L757.6 185.0 L758.0 189.9 L758.5 193.0 L758.9 190.7 L759.3 190.8 L759.7 186.8 L760.1 196.7 L760.5 194.3 L760.9 191.4 L761.3 178.9 L761.8 185.7 L762.2 190.3 L762.6 186.8 L763.0 181.0 L763.4 190.8 L763.8 191.4 L764.2 184.6 L764.6 186.0 L765.0 186.9 L765.5 192.0 L765.9 181.5 L766.3 182.5 L766.7 187.4 L767.1 186.9 L767.5 198.5 L767.9 184.9 L768.3 190.7 L768.8 188.0 L769.2 186.9 L769.6 191.3 L770.0 197.1 L770.4 188.2 L770.8 193.0 L771.2 191.2 L771.6 192.4 L772.0 191.3 L772.5 199.8 L772.9 184.6 L773.3 188.7 L773.7 185.0 L774.1 181.3 L774.5 189.7 L774.9 197.6 L775.3 193.7 L775.8 195.0 L776.2 192.0 L776.6 188.9 L777.0 198.4 L777.4 188.3 L777.8 196.3 L778.2 188.5 L778.6 190.3 L779.1 191.2 L779.5 190.1 L779.9 192.1 L780.3 192.5 L780.7 197.1 L781.1 189.9 L781.5 181.9 L781.9 181.3 L782.3 184.1 L782.8 186.8 L783.2 192.7 L783.6 179.3 L784.0 190.1 L784.4 190.1 L784.8 191.1 L785.2 189.4 L785.6 191.7 L786.1 190.2 L786.5 194.5 L786.9 191.4 L787.3 180.0 L787.7 190.1" fill="none" stroke="#62cbc6" stroke-width="1.5" stroke-linejoin="round" stroke-linecap="round" />
<path d="M475.1 230.8 L475.5 219.5 L475.9 218.4 L476.3 221.4 L476.7 220.2 L477.2 224.1 L477.6 223.1 L478.0 222.3 L478.4 225.4 L478.8 225.2 L479.2 222.7 L479.6 223.7 L480.0 225.4 L480.5 222.0 L480.9 223.5 L481.3 220.5 L481.7 222.9 L482.1 223.6 L482.5 222.6 L482.9 223.3 L483.3 224.5 L483.7 223.8 L484.2 221.2 L484.6 221.4 L485.0 219.9 L485.4 226.8 L485.8 223.8 L486.2 223.9 L486.6 222.5 L487.0 224.0 L487.5 224.1 L487.9 221.1 L488.3 222.5 L488.7 225.6 L489.1 219.8 L489.5 220.6 L489.9 224.2 L490.3 221.0 L490.8 224.6 L491.2 220.3 L491.6 217.6 L492.0 224.8 L492.4 223.8 L492.8 224.7 L493.2 222.5 L493.6 222.5 L494.0 222.8 L494.5 224.2 L494.9 231.4 L495.3 222.7 L495.7 227.3 L496.1 222.3 L496.5 220.3 L496.9 222.3 L497.3 223.8 L497.8 223.3 L498.2 223.2 L498.6 224.2 L499.0 224.3 L499.4 225.1 L499.8 220.2 L500.2 222.9 L500.6 220.7 L501.0 223.5 L501.5 222.7 L501.9 223.3 L502.3 221.8 L502.7 221.0 L503.1 222.4 L503.5 224.5 L503.9 224.7 L504.3 219.1 L504.8 223.6 L505.2 223.6 L505.6 219.5 L506.0 220.4 L506.4 221.7 L506.8 223.8 L507.2 217.5 L507.6 222.0 L508.0 221.6 L508.5 223.3 L508.9 226.2 L509.3 228.5 L509.7 222.0 L510.1 222.0 L510.5 223.5 L510.9 225.6 L511.3 226.3 L511.8 223.7 L512.2 226.3 L512.6 220.8 L513.0 220.2 L513.4 216.4 L513.8 220.9 L514.2 224.3 L514.6 224.9 L515.1 230.9 L515.5 224.3 L515.9 223.3 L516.3 220.7 L516.7 221.5 L517.1 221.6 L517.5 222.4 L517.9 221.4 L518.3 219.6 L518.8 222.9 L519.2 224.0 L519.6 226.1 L520.0 219.2 L520.4 219.9 L520.8 221.2 L521.2 225.7 L521.6 222.5 L522.1 223.5 L522.5 222.7 L522.9 223.3 L523.3 221.7 L523.7 223.8 L524.1 220.9 L524.5 222.4 L524.9 223.6 L525.3 223.2 L525.8 223.9 L526.2 221.0 L526.6 223.5 L527.0 222.2 L527.4 223.8 L527.8 226.4 L528.2 220.8 L528.6 225.4 L529.1 214.6 L529.5 221.9 L529.9 226.7 L530.3 225.1 L530.7 224.1 L531.1 224.8 L531.5 225.7 L531.9 221.2 L532.3 223.5 L532.8 222.0 L533.2 223.9 L533.6 222.2 L534.0 224.7 L534.4 223.0 L534.8 221.6 L535.2 222.8 L535.6 224.0 L536.1 225.4 L536.5 222.5 L536.9 222.1 L537.3 218.2 L537.7 224.7 L538.1 221.7 L538.5 217.2 L538.9 223.6 L539.3 222.1 L539.8 222.0 L540.2 228.9 L540.6 222.6 L541.0 224.6 L541.4 219.7 L541.8 223.5 L542.2 224.7 L542.6 223.4 L543.1 222.5 L543.5 224.2 L543.9 223.0 L544.3 226.1 L544.7 223.4 L545.1 221.1 L545.5 218.4 L545.9 221.3 L546.4 222.3 L546.8 220.2 L547.2 220.6 L547.6 219.1 L548.0 220.4 L548.4 223.2 L548.8 222.3 L549.2 213.4 L549.6 222.2 L550.1 222.4 L550.5 224.7 L550.9 227.8 L551.3 224.5 L551.7 227.6 L552.1 222.8 L552.5 222.9 L552.9 226.8 L553.4 221.3 L553.8 220.9 L554.2 222.7 L554.6 219.1 L555.0 218.6 L555.4 225.7 L555.8 220.5 L556.2 221.9 L556.6 221.9 L557.1 220.7 L557.5 224.6 L557.9 224.3 L558.3 224.8 L558.7 224.7 L559.1 223.1 L559.5 226.3 L559.9 225.3 L560.4 221.6 L560.8 223.1 L561.2 222.0 L561.6 227.3 L562.0 224.7 L562.4 224.2 L562.8 222.8 L563.2 224.3 L563.6 220.8 L564.1 223.0 L564.5 222.9 L564.9 222.9 L565.3 221.3 L565.7 224.0 L566.1 220.3 L566.5 221.8 L566.9 212.9 L567.4 222.8 L567.8 221.7 L568.2 220.6 L568.6 220.7 L569.0 222.0 L569.4 220.9 L569.8 222.6 L570.2 220.0 L570.7 223.0 L571.1 227.7 L571.5 219.8 L571.9 222.7 L572.3 225.6 L572.7 223.4 L573.1 225.0 L573.5 218.0 L573.9 221.8 L574.4 226.5 L574.8 221.6 L575.2 223.8 L575.6 218.5 L576.0 225.4 L576.4 228.1 L576.8 222.8 L577.2 223.7 L577.7 223.9 L578.1 227.9 L578.5 221.9 L578.9 219.0 L579.3 227.3 L579.7 220.2 L580.1 224.2 L580.5 217.5 L580.9 221.9 L581.4 223.3 L581.8 220.4 L582.2 221.7 L582.6 225.5 L583.0 221.3 L583.4 224.1 L583.8 227.1 L584.2 218.2 L584.7 221.7 L585.1 224.3 L585.5 222.1 L585.9 226.5 L586.3 226.0 L586.7 224.1 L587.1 224.1 L587.5 222.7 L587.9 220.3 L588.4 224.0 L588.8 221.8 L589.2 221.5 L589.6 225.4 L590.0 222.4 L590.4 225.1 L590.8 220.4 L591.2 221.9 L591.7 222.9 L592.1 226.0 L592.5 222.6 L592.9 224.7 L593.3 221.3 L593.7 223.2 L594.1 224.8 L594.5 220.8 L595.0 221.2 L595.4 224.3 L595.8 220.2 L596.2 223.6 L596.6 223.6 L597.0 218.7 L597.4 225.3 L597.8 223.9 L598.2 223.3 L598.7 219.4 L599.1 218.1 L599.5 223.5 L599.9 219.2 L600.3 223.0 L600.7 222.0 L601.1 220.9 L601.5 222.2 L602.0 217.3 L602.4 222.3 L602.8 225.7 L603.2 219.9 L603.6 223.9 L604.0 223.6 L604.4 229.8 L604.8 220.6 L605.2 221.0 L605.7 221.1 L606.1 220.6 L606.5 219.0 L606.9 223.0 L607.3 220.7 L607.7 224.6 L608.1 219.4 L608.5 212.1 L609.0 222.0 L609.4 226.0 L609.8 222.1 L610.2 223.3 L610.6 224.8 L611.0 221.9 L611.4 223.9 L611.8 226.6 L612.2 225.5 L612.7 218.8 L613.1 226.4 L613.5 222.4 L613.9 221.5 L614.3 221.4 L614.7 225.8 L615.1 223.7 L615.5 222.6 L616.0 221.1 L616.4 224.4 L616.8 225.6 L617.2 220.6 L617.6 220.4 L618.0 222.1 L618.4 224.3 L618.8 222.0 L619.3 222.7 L619.7 221.0 L620.1 225.8 L620.5 222.6 L620.9 223.3 L621.3 225.5 L621.7 222.4 L622.1 222.8 L622.5 223.9 L623.0 222.0 L623.4 226.2 L623.8 223.0 L624.2 221.9 L624.6 222.3 L625.0 220.4 L625.4 225.7 L625.8 226.4 L626.3 222.4 L626.7 221.9 L627.1 218.0 L627.5 221.5 L627.9 224.9 L628.3 221.0 L628.7 224.9 L629.1 226.4 L629.5 216.9 L630.0 222.2 L630.4 221.3 L630.8 221.6 L631.2 218.7 L631.6 222.3 L632.0 220.1 L632.4 220.5 L632.8 226.1 L633.3 219.6 L633.7 219.5 L634.1 221.7 L634.5 222.4 L634.9 222.5 L635.3 224.5 L635.7 219.3 L636.1 221.4 L636.5 221.7 L637.0 222.0 L637.4 220.5 L637.8 221.7 L638.2 221.2 L638.6 225.6 L639.0 221.7 L639.4 217.8 L639.8 224.1 L640.3 223.2 L640.7 220.8 L641.1 220.7 L641.5 221.5 L641.9 226.7 L642.3 221.8 L642.7 235.4 L643.1 224.8 L643.5 221.6 L644.0 223.6 L644.4 221.0 L644.8 215.6 L645.2 221.1 L645.6 221.2 L646.0 225.0 L646.4 224.4 L646.8 224.3 L647.3 224.1 L647.7 225.4 L648.1 224.4 L648.5 223.4 L648.9 225.2 L649.3 218.9 L649.7 226.1 L650.1 221.9 L650.6 222.8 L651.0 220.5 L651.4 220.5 L651.8 223.7 L652.2 221.4 L652.6 226.3 L653.0 217.6 L653.4 220.1 L653.8 223.4 L654.3 232.2 L654.7 222.0 L655.1 227.2 L655.5 224.7 L655.9 225.6 L656.3 222.7 L656.7 224.1 L657.1 220.7 L657.6 225.3 L658.0 222.3 L658.4 224.1 L658.8 224.9 L659.2 221.8 L659.6 225.2 L660.0 218.5 L660.4 224.3 L660.8 218.3 L661.3 225.4 L661.7 221.5 L662.1 225.7 L662.5 226.0 L662.9 222.5 L663.3 221.3 L663.7 225.9 L664.1 220.2 L664.6 224.8 L665.0 222.6 L665.4 222.0 L665.8 221.5 L666.2 227.1 L666.6 219.2 L667.0 221.6 L667.4 223.9 L667.8 225.3 L668.3 226.8 L668.7 226.1 L669.1 221.7 L669.5 223.7 L669.9 225.5 L670.3 224.1 L670.7 219.3 L671.1 223.7 L671.6 224.3 L672.0 219.8 L672.4 221.8 L672.8 222.8 L673.2 224.3 L673.6 226.5 L674.0 225.6 L674.4 224.0 L674.9 223.4 L675.3 222.1 L675.7 221.6 L676.1 227.9 L676.5 222.4 L676.9 229.2 L677.3 227.9 L677.7 224.1 L678.1 225.1 L678.6 224.4 L679.0 223.5 L679.4 225.8 L679.8 225.5 L680.2 227.0 L680.6 222.6 L681.0 224.4 L681.4 221.8 L681.9 223.4 L682.3 225.3 L682.7 222.8 L683.1 218.6 L683.5 224.5 L683.9 220.2 L684.3 219.7 L684.7 219.4 L685.1 224.8 L685.6 218.2 L686.0 222.6 L686.4 223.5 L686.8 223.4 L687.2 221.5 L687.6 222.8 L688.0 223.3 L688.4 219.9 L688.9 224.6 L689.3 225.3 L689.7 221.1 L690.1 221.3 L690.5 218.6 L690.9 225.4 L691.3 220.4 L691.7 221.8 L692.1 223.4 L692.6 225.8 L693.0 222.4 L693.4 223.6 L693.8 226.6 L694.2 224.6 L694.6 220.3 L695.0 224.0 L695.4 226.8 L695.9 220.9 L696.3 220.6 L696.7 220.6 L697.1 224.7 L697.5 223.0 L697.9 220.5 L698.3 224.4 L698.7 224.6 L699.2 222.4 L699.6 219.3 L700.0 225.6 L700.4 228.9 L700.8 226.3 L701.2 225.3 L701.6 223.2 L702.0 221.5 L702.4 223.3 L702.9 225.2 L703.3 222.6 L703.7 225.1 L704.1 223.0 L704.5 224.4 L704.9 216.7 L705.3 221.0 L705.7 224.8 L706.2 219.3 L706.6 223.9 L707.0 226.7 L707.4 224.6 L707.8 224.6 L708.2 220.9 L708.6 223.9 L709.0 224.7 L709.4 226.0 L709.9 225.6 L710.3 223.1 L710.7 223.4 L711.1 220.3 L711.5 224.4 L711.9 220.5 L712.3 222.3 L712.7 226.4 L713.2 227.6 L713.6 225.9 L714.0 221.2 L714.4 219.7 L714.8 222.4 L715.2 221.1 L715.6 223.9 L716.0 223.8 L716.4 224.4 L716.9 220.7 L717.3 222.1 L717.7 223.5 L718.1 223.7 L718.5 221.6 L718.9 222.2 L719.3 224.8 L719.7 218.9 L720.2 222.3 L720.6 222.9 L721.0 219.5 L721.4 220.5 L721.8 223.1 L722.2 221.7 L722.6 225.4 L723.0 224.4 L723.5 228.1 L723.9 219.5 L724.3 227.3 L724.7 221.3 L725.1 224.8 L725.5 225.2 L725.9 223.4 L726.3 222.3 L726.7 225.0 L727.2 218.8 L727.6 222.1 L728.0 220.9 L728.4 224.3 L728.8 221.3 L729.2 222.6 L729.6 224.0 L730.0 223.1 L730.5 223.1 L730.9 222.5 L731.3 222.0 L731.7 226.9 L732.1 224.6 L732.5 221.2 L732.9 226.8 L733.3 224.3 L733.7 219.3 L734.2 229.2 L734.6 224.5 L735.0 221.3 L735.4 226.7 L735.8 216.9 L736.2 228.9 L736.6 219.6 L737.0 219.3 L737.5 220.8 L737.9 223.4 L738.3 222.1 L738.7 225.0 L739.1 221.0 L739.5 233.7 L739.9 223.5 L740.3 220.6 L740.7 225.5 L741.2 223.8 L741.6 222.5 L742.0 226.0 L742.4 220.2 L742.8 222.1 L743.2 226.4 L743.6 223.0 L744.0 224.7 L744.5 224.4 L744.9 222.7 L745.3 224.6 L745.7 220.7 L746.1 224.5 L746.5 220.6 L746.9 223.0 L747.3 220.9 L747.7 224.2 L748.2 224.1 L748.6 225.6 L749.0 221.6 L749.4 220.7 L749.8 218.0 L750.2 219.9 L750.6 222.3 L751.0 223.4 L751.5 222.0 L751.9 223.0 L752.3 219.5 L752.7 225.0 L753.1 224.9 L753.5 224.5 L753.9 219.7 L754.3 222.2 L754.8 223.5 L755.2 220.2 L755.6 223.8 L756.0 223.6 L756.4 222.9 L756.8 227.5 L757.2 220.9 L757.6 225.7 L758.0 224.2 L758.5 224.6 L758.9 221.2 L759.3 223.1 L759.7 222.9 L760.1 226.8 L760.5 223.1 L760.9 226.3 L761.3 222.2 L761.8 222.1 L762.2 223.0 L762.6 220.7 L763.0 221.7 L763.4 221.5 L763.8 222.6 L764.2 223.4 L764.6 220.7 L765.0 217.6 L765.5 225.9 L765.9 220.5 L766.3 221.7 L766.7 220.7 L767.1 221.8 L767.5 225.8 L767.9 225.6 L768.3 218.7 L768.8 222.3 L769.2 226.2 L769.6 222.1 L770.0 223.8 L770.4 227.2 L770.8 228.2 L771.2 226.6 L771.6 222.3 L772.0 223.0 L772.5 223.5 L772.9 222.3 L773.3 221.5 L773.7 227.8 L774.1 223.6 L774.5 224.8 L774.9 225.8 L775.3 224.2 L775.8 223.2 L776.2 223.5 L776.6 226.3 L777.0 224.0 L777.4 218.2 L777.8 225.4 L778.2 226.8 L778.6 222.3 L779.1 221.5 L779.5 221.8 L779.9 225.5 L780.3 220.6 L780.7 224.7 L781.1 225.5 L781.5 224.3 L781.9 223.2 L782.3 221.3 L782.8 221.5 L783.2 223.0 L783.6 220.8 L784.0 222.7 L784.4 220.8 L784.8 226.2 L785.2 226.6 L785.6 221.1 L786.1 226.1 L786.5 223.6 L786.9 223.1 L787.3 224.0 L787.7 224.0" fill="none" stroke="#16a4ee" stroke-width="1.5" stroke-linejoin="round" stroke-linecap="round" />
<path d="M475.1 247.6 L475.5 250.4 L475.9 245.7 L476.3 248.3 L476.7 248.0 L477.2 250.9 L477.6 246.5 L478.0 246.4 L478.4 248.7 L478.8 247.7 L479.2 247.3 L479.6 246.5 L480.0 247.7 L480.5 245.4 L480.9 248.2 L481.3 248.7 L481.7 248.5 L482.1 251.4 L482.5 248.9 L482.9 246.4 L483.3 247.4 L483.7 249.0 L484.2 247.3 L484.6 250.7 L485.0 248.2 L485.4 247.1 L485.8 246.8 L486.2 248.9 L486.6 246.5 L487.0 245.2 L487.5 248.4 L487.9 246.8 L488.3 250.0 L488.7 250.6 L489.1 246.9 L489.5 247.7 L489.9 247.5 L490.3 248.6 L490.8 248.2 L491.2 246.7 L491.6 245.4 L492.0 248.1 L492.4 250.1 L492.8 246.0 L493.2 247.0 L493.6 246.8 L494.0 247.5 L494.5 244.5 L494.9 247.7 L495.3 247.1 L495.7 250.4 L496.1 248.6 L496.5 248.8 L496.9 247.8 L497.3 247.3 L497.8 248.9 L498.2 245.4 L498.6 249.3 L499.0 248.4 L499.4 247.5 L499.8 249.6 L500.2 247.0 L500.6 246.9 L501.0 248.2 L501.5 245.1 L501.9 247.7 L502.3 247.4 L502.7 249.2 L503.1 250.2 L503.5 248.7 L503.9 248.3 L504.3 248.4 L504.8 246.7 L505.2 251.2 L505.6 249.4 L506.0 250.4 L506.4 245.9 L506.8 248.6 L507.2 248.5 L507.6 249.4 L508.0 246.5 L508.5 248.4 L508.9 247.5 L509.3 250.7 L509.7 246.2 L510.1 247.2 L510.5 247.0 L510.9 246.1 L511.3 248.1 L511.8 248.0 L512.2 246.8 L512.6 247.2 L513.0 248.1 L513.4 247.7 L513.8 248.5 L514.2 246.8 L514.6 246.5 L515.1 247.8 L515.5 245.2 L515.9 250.0 L516.3 248.1 L516.7 245.4 L517.1 248.4 L517.5 250.1 L517.9 245.8 L518.3 247.0 L518.8 249.5 L519.2 246.7 L519.6 249.2 L520.0 249.7 L520.4 248.0 L520.8 248.5 L521.2 249.3 L521.6 248.3 L522.1 249.2 L522.5 247.7 L522.9 247.8 L523.3 246.7 L523.7 248.4 L524.1 249.7 L524.5 249.7 L524.9 248.1 L525.3 245.6 L525.8 246.6 L526.2 248.7 L526.6 246.5 L527.0 249.4 L527.4 246.4 L527.8 248.3 L528.2 246.7 L528.6 246.9 L529.1 248.2 L529.5 247.3 L529.9 249.3 L530.3 247.9 L530.7 246.3 L531.1 242.0 L531.5 246.8 L531.9 247.7 L532.3 249.2 L532.8 246.3 L533.2 250.1 L533.6 248.9 L534.0 247.3 L534.4 249.5 L534.8 245.6 L535.2 246.3 L535.6 248.6 L536.1 248.6 L536.5 249.7 L536.9 249.8 L537.3 247.2 L537.7 246.9 L538.1 247.3 L538.5 247.4 L538.9 248.6 L539.3 247.3 L539.8 249.9 L540.2 247.8 L540.6 245.7 L541.0 245.9 L541.4 248.5 L541.8 248.3 L542.2 245.9 L542.6 245.3 L543.1 249.9 L543.5 248.4 L543.9 247.5 L544.3 246.1 L544.7 249.0 L545.1 246.9 L545.5 248.2 L545.9 244.4 L546.4 247.2 L546.8 248.0 L547.2 248.3 L547.6 246.3 L548.0 246.8 L548.4 249.3 L548.8 247.5 L549.2 249.7 L549.6 248.9 L550.1 249.6 L550.5 249.7 L550.9 248.8 L551.3 249.2 L551.7 247.1 L552.1 246.7 L552.5 248.1 L552.9 249.4 L553.4 246.7 L553.8 250.7 L554.2 250.5 L554.6 246.8 L555.0 246.9 L555.4 246.4 L555.8 248.1 L556.2 249.6 L556.6 248.5 L557.1 247.0 L557.5 248.9 L557.9 248.8 L558.3 249.8 L558.7 249.4 L559.1 246.6 L559.5 247.2 L559.9 249.4 L560.4 249.3 L560.8 248.6 L561.2 247.0 L561.6 249.4 L562.0 248.0 L562.4 250.8 L562.8 249.6 L563.2 247.2 L563.6 246.5 L564.1 249.4 L564.5 248.9 L564.9 246.7 L565.3 248.3 L565.7 248.6 L566.1 247.1 L566.5 247.5 L566.9 246.2 L567.4 246.7 L567.8 248.6 L568.2 248.0 L568.6 247.9 L569.0 249.7 L569.4 249.2 L569.8 246.4 L570.2 250.0 L570.7 246.4 L571.1 247.4 L571.5 248.0 L571.9 247.0 L572.3 247.1 L572.7 246.1 L573.1 248.4 L573.5 248.1 L573.9 248.1 L574.4 245.1 L574.8 246.5 L575.2 249.1 L575.6 248.3 L576.0 248.8 L576.4 247.8 L576.8 247.5 L577.2 244.6 L577.7 250.4 L578.1 246.3 L578.5 247.2 L578.9 248.8 L579.3 248.0 L579.7 248.5 L580.1 247.7 L580.5 246.4 L580.9 249.9 L581.4 245.9 L581.8 248.3 L582.2 245.7 L582.6 247.2 L583.0 246.0 L583.4 247.0 L583.8 246.3 L584.2 247.7 L584.7 249.0 L585.1 246.8 L585.5 246.8 L585.9 244.8 L586.3 250.6 L586.7 248.1 L587.1 246.3 L587.5 249.5 L587.9 248.1 L588.4 244.8 L588.8 245.8 L589.2 249.0 L589.6 245.8 L590.0 246.1 L590.4 246.7 L590.8 247.2 L591.2 247.4 L591.7 249.0 L592.1 248.5 L592.5 246.7 L592.9 247.6 L593.3 245.2 L593.7 248.2 L594.1 251.2 L594.5 248.2 L595.0 247.4 L595.4 247.2 L595.8 247.7 L596.2 248.9 L596.6 245.7 L597.0 248.7 L597.4 246.8 L597.8 248.2 L598.2 249.5 L598.7 245.8 L599.1 251.3 L599.5 249.0 L599.9 247.2 L600.3 248.3 L600.7 246.7 L601.1 247.9 L601.5 248.4 L602.0 244.7 L602.4 248.1 L602.8 248.0 L603.2 249.3 L603.6 248.8 L604.0 246.9 L604.4 247.0 L604.8 247.8 L605.2 248.7 L605.7 246.8 L606.1 250.2 L606.5 248.2 L606.9 248.1 L607.3 249.0 L607.7 247.5 L608.1 248.7 L608.5 248.9 L609.0 245.2 L609.4 246.7 L609.8 246.1 L610.2 247.7 L610.6 246.4 L611.0 246.7 L611.4 246.0 L611.8 244.4 L612.2 248.1 L612.7 247.4 L613.1 247.8 L613.5 252.7 L613.9 249.7 L614.3 247.7 L614.7 246.9 L615.1 248.6 L615.5 246.1 L616.0 245.9 L616.4 248.3 L616.8 245.7 L617.2 245.3 L617.6 247.1 L618.0 249.1 L618.4 245.7 L618.8 248.0 L619.3 248.3 L619.7 247.6 L620.1 248.5 L620.5 246.2 L620.9 246.6 L621.3 246.0 L621.7 246.9 L622.1 248.9 L622.5 248.0 L623.0 246.5 L623.4 248.3 L623.8 243.6 L624.2 248.1 L624.6 248.6 L625.0 246.1 L625.4 246.7 L625.8 247.8 L626.3 248.1 L626.7 247.1 L627.1 246.6 L627.5 246.7 L627.9 248.2 L628.3 247.1 L628.7 246.5 L629.1 246.7 L629.5 252.1 L630.0 249.0 L630.4 248.8 L630.8 248.1 L631.2 247.5 L631.6 246.4 L632.0 246.9 L632.4 247.9 L632.8 247.7 L633.3 245.3 L633.7 248.6 L634.1 247.3 L634.5 245.5 L634.9 247.2 L635.3 250.6 L635.7 247.2 L636.1 248.3 L636.5 247.9 L637.0 246.3 L637.4 247.1 L637.8 248.1 L638.2 246.5 L638.6 247.1 L639.0 247.6 L639.4 247.3 L639.8 247.4 L640.3 248.2 L640.7 248.4 L641.1 247.7 L641.5 249.1 L641.9 249.5 L642.3 245.9 L642.7 248.1 L643.1 247.8 L643.5 247.9 L644.0 247.7 L644.4 247.7 L644.8 247.6 L645.2 248.9 L645.6 246.4 L646.0 248.7 L646.4 246.3 L646.8 250.4 L647.3 249.2 L647.7 246.3 L648.1 247.9 L648.5 248.7 L648.9 247.2 L649.3 249.2 L649.7 247.6 L650.1 250.8 L650.6 248.4 L651.0 248.6 L651.4 247.0 L651.8 246.5 L652.2 248.9 L652.6 245.5 L653.0 248.6 L653.4 250.6 L653.8 251.1 L654.3 245.6 L654.7 247.9 L655.1 248.6 L655.5 248.8 L655.9 249.3 L656.3 245.8 L656.7 247.9 L657.1 245.2 L657.6 248.0 L658.0 251.0 L658.4 246.5 L658.8 248.3 L659.2 248.1 L659.6 245.5 L660.0 248.1 L660.4 246.1 L660.8 247.7 L661.3 248.8 L661.7 247.0 L662.1 248.6 L662.5 246.0 L662.9 246.4 L663.3 247.6 L663.7 246.9 L664.1 246.9 L664.6 248.1 L665.0 246.5 L665.4 248.1 L665.8 246.9 L666.2 249.1 L666.6 247.6 L667.0 247.1 L667.4 248.8 L667.8 248.3 L668.3 248.5 L668.7 246.7 L669.1 248.7 L669.5 247.1 L669.9 245.6 L670.3 247.2 L670.7 250.0 L671.1 247.5 L671.6 246.3 L672.0 248.1 L672.4 246.2 L672.8 246.9 L673.2 247.1 L673.6 248.1 L674.0 248.4 L674.4 248.1 L674.9 247.6 L675.3 247.0 L675.7 247.1 L676.1 248.1 L676.5 247.6 L676.9 247.2 L677.3 250.0 L677.7 248.8 L678.1 248.8 L678.6 248.0 L679.0 248.1 L679.4 248.1 L679.8 248.9 L680.2 246.8 L680.6 247.3 L681.0 250.0 L681.4 247.7 L681.9 249.3 L682.3 245.3 L682.7 248.4 L683.1 248.3 L683.5 247.6 L683.9 248.0 L684.3 247.8 L684.7 245.5 L685.1 247.4 L685.6 246.5 L686.0 246.1 L686.4 249.1 L686.8 245.3 L687.2 246.7 L687.6 246.4 L688.0 248.9 L688.4 246.6 L688.9 247.1 L689.3 248.5 L689.7 244.5 L690.1 246.9 L690.5 248.0 L690.9 247.4 L691.3 246.4 L691.7 246.1 L692.1 246.9 L692.6 246.0 L693.0 245.6 L693.4 249.4 L693.8 248.4 L694.2 249.0 L694.6 247.6 L695.0 245.7 L695.4 246.8 L695.9 249.2 L696.3 248.1 L696.7 246.3 L697.1 248.5 L697.5 247.8 L697.9 247.3 L698.3 250.3 L698.7 246.6 L699.2 247.2 L699.6 246.9 L700.0 249.1 L700.4 248.8 L700.8 248.5 L701.2 247.4 L701.6 247.6 L702.0 247.5 L702.4 245.2 L702.9 245.9 L703.3 248.7 L703.7 248.6 L704.1 245.3 L704.5 248.2 L704.9 245.8 L705.3 245.5 L705.7 248.5 L706.2 248.1 L706.6 247.6 L707.0 248.9 L707.4 249.1 L707.8 248.3 L708.2 246.5 L708.6 248.3 L709.0 248.0 L709.4 248.4 L709.9 249.6 L710.3 245.6 L710.7 251.0 L711.1 248.6 L711.5 246.9 L711.9 249.7 L712.3 246.9 L712.7 245.9 L713.2 248.9 L713.6 247.4 L714.0 249.3 L714.4 247.0 L714.8 247.6 L715.2 247.4 L715.6 245.8 L716.0 247.0 L716.4 245.8 L716.9 246.8 L717.3 249.4 L717.7 247.3 L718.1 247.0 L718.5 249.7 L718.9 245.8 L719.3 247.6 L719.7 247.2 L720.2 249.0 L720.6 247.6 L721.0 247.3 L721.4 248.2 L721.8 247.6 L722.2 250.7 L722.6 245.8 L723.0 249.3 L723.5 250.8 L723.9 249.1 L724.3 248.9 L724.7 246.9 L725.1 249.0 L725.5 247.3 L725.9 249.1 L726.3 244.6 L726.7 246.9 L727.2 245.0 L727.6 249.1 L728.0 246.8 L728.4 249.1 L728.8 246.9 L729.2 246.8 L729.6 250.0 L730.0 249.3 L730.5 249.3 L730.9 249.8 L731.3 248.7 L731.7 249.1 L732.1 249.7 L732.5 247.6 L732.9 246.9 L733.3 249.6 L733.7 248.5 L734.2 247.7 L734.6 248.0 L735.0 248.7 L735.4 246.6 L735.8 246.5 L736.2 246.8 L736.6 248.0 L737.0 244.9 L737.5 245.3 L737.9 248.3 L738.3 247.9 L738.7 246.0 L739.1 248.8 L739.5 247.2 L739.9 247.7 L740.3 248.7 L740.7 248.0 L741.2 249.9 L741.6 248.5 L742.0 250.5 L742.4 244.5 L742.8 245.6 L743.2 246.0 L743.6 247.3 L744.0 246.3 L744.5 245.9 L744.9 246.3 L745.3 246.4 L745.7 249.0 L746.1 247.1 L746.5 248.5 L746.9 249.4 L747.3 249.3 L747.7 247.1 L748.2 246.2 L748.6 249.6 L749.0 245.3 L749.4 245.7 L749.8 248.3 L750.2 248.4 L750.6 247.8 L751.0 246.3 L751.5 248.3 L751.9 249.3 L752.3 247.2 L752.7 250.6 L753.1 247.5 L753.5 246.1 L753.9 247.3 L754.3 246.6 L754.8 247.0 L755.2 246.7 L755.6 247.5 L756.0 248.9 L756.4 248.0 L756.8 247.8 L757.2 246.0 L757.6 245.4 L758.0 247.1 L758.5 248.8 L758.9 248.8 L759.3 248.0 L759.7 245.8 L760.1 247.3 L760.5 247.8 L760.9 248.8 L761.3 246.5 L761.8 247.3 L762.2 247.8 L762.6 247.6 L763.0 245.4 L763.4 248.0 L763.8 245.4 L764.2 246.0 L764.6 247.7 L765.0 246.5 L765.5 247.9 L765.9 248.9 L766.3 248.1 L766.7 249.0 L767.1 247.0 L767.5 247.7 L767.9 246.9 L768.3 246.6 L768.8 252.1 L769.2 247.3 L769.6 250.3 L770.0 247.5 L770.4 249.0 L770.8 247.6 L771.2 245.8 L771.6 250.1 L772.0 247.5 L772.5 247.8 L772.9 250.4 L773.3 246.8 L773.7 247.7 L774.1 248.4 L774.5 248.7 L774.9 243.2 L775.3 248.3 L775.8 250.3 L776.2 249.0 L776.6 248.2 L777.0 248.3 L777.4 247.8 L777.8 249.2 L778.2 247.0 L778.6 248.4 L779.1 249.6 L779.5 248.9 L779.9 248.3 L780.3 246.5 L780.7 247.1 L781.1 248.2 L781.5 247.7 L781.9 247.4 L782.3 244.9 L782.8 248.6 L783.2 247.1 L783.6 246.7 L784.0 249.1 L784.4 247.5 L784.8 247.5 L785.2 248.4 L785.6 246.9 L786.1 246.3 L786.5 246.1 L786.9 248.0 L787.3 247.5 L787.7 244.4" fill="none" stroke="#1db980" stroke-width="1.5" stroke-linejoin="round" stroke-linecap="round" />
<text x="476.3" y="304.7" text-anchor="middle" font-size="10.3" fill="#8a92ab" >12:00:00pm</text><rect x="475.8" y="290.1" width="1" height="2.6" fill="#343a4d"/><text x="528.5" y="304.7" text-anchor="middle" font-size="10.3" fill="#8a92ab" >Feb 22</text><rect x="528.0" y="290.1" width="1" height="2.6" fill="#343a4d"/><text x="580.7" y="304.7" text-anchor="middle" font-size="10.3" fill="#8a92ab" >12:00:00pm</text><rect x="580.2" y="290.1" width="1" height="2.6" fill="#343a4d"/><text x="632.9" y="304.7" text-anchor="middle" font-size="10.3" fill="#8a92ab" >Feb 23</text><rect x="632.4" y="290.1" width="1" height="2.6" fill="#343a4d"/><text x="685.1" y="304.7" text-anchor="middle" font-size="10.3" fill="#8a92ab" >12:00:00pm</text><rect x="684.6" y="290.1" width="1" height="2.6" fill="#343a4d"/><text x="737.3" y="304.7" text-anchor="middle" font-size="10.3" fill="#8a92ab" >Feb 24</text><rect x="736.8" y="290.1" width="1" height="2.6" fill="#343a4d"/>
<rect x="436.2" y="320.7" width="7.4" height="7.4" rx="1.6" fill="#16a4ee"/><text x="448.0" y="328.0" text-anchor="start" font-size="11.7" fill="#8a92ab" >api-gateway</text><rect x="520.5" y="320.7" width="7.4" height="7.4" rx="1.6" fill="#62cbc6"/><text x="532.2" y="328.0" text-anchor="start" font-size="11.7" fill="#8a92ab" >reporting</text><rect x="588.7" y="320.7" width="7.4" height="7.4" rx="1.6" fill="#1db980"/><text x="599.8" y="328.0" text-anchor="start" font-size="11.7" fill="#8a92ab" >auth</text>
<rect x="864.8" y="164.5" width="327.2" height="1" fill="#2e3446"/><text x="858.6" y="168.1" text-anchor="end" font-size="10.3" fill="#8a92ab" >210</text><rect x="864.8" y="182.2" width="327.2" height="1" fill="#2e3446"/><text x="858.6" y="185.8" text-anchor="end" font-size="10.3" fill="#8a92ab" >180</text><rect x="864.8" y="200.0" width="327.2" height="1" fill="#2e3446"/><text x="858.6" y="203.5" text-anchor="end" font-size="10.3" fill="#8a92ab" >150</text><rect x="864.8" y="217.7" width="327.2" height="1" fill="#2e3446"/><text x="858.6" y="221.3" text-anchor="end" font-size="10.3" fill="#8a92ab" >120</text><rect x="864.8" y="235.4" width="327.2" height="1" fill="#2e3446"/><text x="858.6" y="239.0" text-anchor="end" font-size="10.3" fill="#8a92ab" >90</text><rect x="864.8" y="253.2" width="327.2" height="1" fill="#2e3446"/><text x="858.6" y="256.7" text-anchor="end" font-size="10.3" fill="#8a92ab" >60</text><rect x="864.8" y="270.9" width="327.2" height="1" fill="#2e3446"/><text x="858.6" y="274.5" text-anchor="end" font-size="10.3" fill="#8a92ab" >30</text><rect x="864.0" y="288.1" width="329.8" height="2" fill="#343a4d"/><text x="858.6" y="292.2" text-anchor="end" font-size="10.3" fill="#8a92ab" >0</text>
<path d="M866.1 222.0 L866.1 254.0" fill="none" stroke="#62cbc6" stroke-width="2.0" stroke-dasharray="4.6 3"/>
<path d="M1191.6 254.4 L1191.6 275.0" fill="none" stroke="#1db980" stroke-width="2.0" stroke-dasharray="4.6 3"/>
<path d="M866.1 210.2 L866.9 219.5 L867.6 219.3 L868.4 215.1 L869.1 219.5 L869.9 214.1 L870.6 210.7 L871.4 209.0 L872.1 218.8 L872.9 206.1 L873.7 209.1 L874.4 219.6 L875.2 210.4 L875.9 207.1 L876.7 216.5 L877.4 206.8 L878.2 210.1 L878.9 220.5 L879.7 217.6 L880.5 216.2 L881.2 218.5 L882.0 207.1 L882.7 220.5 L883.5 195.1 L884.2 206.4 L885.0 215.0 L885.7 214.0 L886.5 206.0 L887.3 219.8 L888.0 206.5 L888.8 213.8 L889.5 219.4 L890.3 217.4 L891.0 210.5 L891.8 209.5 L892.5 202.1 L893.3 208.1 L894.1 219.4 L894.8 207.5 L895.6 197.0 L896.3 209.4 L897.1 215.2 L897.8 206.4 L898.6 195.7 L899.3 218.5 L900.1 198.2 L900.9 219.7 L901.6 215.1 L902.4 217.5 L903.1 220.4 L903.9 217.8 L904.6 216.7 L905.4 217.0 L906.1 216.5 L906.9 216.8 L907.6 207.1 L908.4 213.9 L909.2 212.4 L909.9 213.7 L910.7 208.7 L911.4 217.1 L912.2 218.3 L912.9 206.0 L913.7 215.8 L914.4 221.7 L915.2 206.7 L916.0 218.5 L916.7 204.3 L917.5 218.1 L918.2 217.3 L919.0 196.9 L919.7 214.8 L920.5 210.0 L921.2 219.0 L922.0 197.2 L922.8 217.9 L923.5 214.1 L924.3 211.4 L925.0 216.9 L925.8 203.0 L926.5 217.3 L927.3 219.5 L928.0 216.0 L928.8 219.0 L929.6 216.3 L930.3 216.0 L931.1 207.3 L931.8 215.9 L932.6 198.7 L933.3 203.7 L934.1 215.1 L934.8 213.1 L935.6 212.1 L936.4 217.9 L937.1 207.5 L937.9 217.7 L938.6 219.0 L939.4 217.0 L940.1 219.9 L940.9 218.7 L941.6 189.8 L942.4 213.6 L943.2 215.7 L943.9 217.1 L944.7 209.5 L945.4 205.9 L946.2 218.5 L946.9 215.6 L947.7 212.6 L948.4 221.1 L949.2 219.4 L950.0 206.6 L950.7 207.6 L951.5 217.4 L952.2 210.0 L953.0 213.4 L953.7 209.7 L954.5 211.9 L955.2 210.5 L956.0 207.0 L956.8 214.3 L957.5 206.3 L958.3 197.9 L959.0 203.9 L959.8 208.0 L960.5 206.1 L961.3 211.5 L962.0 211.8 L962.8 216.5 L963.6 220.6 L964.3 205.8 L965.1 200.5 L965.8 206.9 L966.6 217.2 L967.3 218.9 L968.1 209.1 L968.8 208.3 L969.6 205.3 L970.4 210.8 L971.1 204.3 L971.9 215.8 L972.6 215.5 L973.4 208.0 L974.1 205.1 L974.9 208.2 L975.6 213.9 L976.4 221.6 L977.2 220.2 L977.9 210.3 L978.7 212.5 L979.4 206.4 L980.2 206.8 L980.9 209.5 L981.7 217.9 L982.4 212.8 L983.2 218.9 L984.0 205.8 L984.7 219.6 L985.5 213.1 L986.2 212.2 L987.0 219.5 L987.7 208.1 L988.5 218.5 L989.2 205.4 L990.0 222.0 L990.7 206.6 L991.5 208.6 L992.3 206.6 L993.0 219.6 L993.8 212.8 L994.5 214.2 L995.3 217.5 L996.0 208.8 L996.8 212.8 L997.5 215.2 L998.3 219.8 L999.1 218.3 L999.8 202.7 L1000.6 192.2 L1001.3 217.1 L1002.1 206.6 L1002.8 203.6 L1003.6 217.7 L1004.3 219.9 L1005.1 204.8 L1005.9 197.4 L1006.6 217.1 L1007.4 209.7 L1008.1 201.7 L1008.9 219.8 L1009.6 206.6 L1010.4 219.5 L1011.1 219.9 L1011.9 213.8 L1012.7 202.5 L1013.4 213.2 L1014.2 211.2 L1014.9 209.5 L1015.7 215.7 L1016.4 215.6 L1017.2 212.4 L1017.9 208.6 L1018.7 212.0 L1019.5 216.8 L1020.2 201.7 L1021.0 217.6 L1021.7 210.3 L1022.5 210.5 L1023.2 211.3 L1024.0 222.1 L1024.7 215.0 L1025.5 209.5 L1026.3 205.9 L1027.0 207.9 L1027.8 218.4 L1028.5 220.2 L1029.3 213.9 L1030.0 205.9 L1030.8 207.6 L1031.5 220.3 L1032.3 203.8 L1033.1 219.9 L1033.8 205.8 L1034.6 211.7 L1035.3 220.0 L1036.1 210.2 L1036.8 200.2 L1037.6 194.6 L1038.3 214.4 L1039.1 202.8 L1039.9 215.0 L1040.6 207.8 L1041.4 213.2 L1042.1 219.0 L1042.9 217.4 L1043.6 205.0 L1044.4 218.2 L1045.1 219.2 L1045.9 207.8 L1046.7 205.5 L1047.4 207.2 L1048.2 220.5 L1048.9 212.5 L1049.7 220.2 L1050.4 208.6 L1051.2 208.1 L1051.9 211.3 L1052.7 220.8 L1053.5 220.7 L1054.2 217.5 L1055.0 219.5 L1055.7 212.2 L1056.5 206.5 L1057.2 211.4 L1058.0 217.5 L1058.7 213.2 L1059.5 215.0 L1060.3 206.9 L1061.0 217.2 L1061.8 218.6 L1062.5 207.8 L1063.3 216.7 L1064.0 212.9 L1064.8 217.9 L1065.5 219.3 L1066.3 216.1 L1067.1 204.7 L1067.8 219.3 L1068.6 220.2 L1069.3 217.2 L1070.1 218.5 L1070.8 219.0 L1071.6 219.3 L1072.3 212.2 L1073.1 219.3 L1073.8 209.2 L1074.6 212.8 L1075.4 212.4 L1076.1 199.3 L1076.9 219.8 L1077.6 209.6 L1078.4 219.8 L1079.1 216.8 L1079.9 219.6 L1080.6 217.6 L1081.4 211.6 L1082.2 201.9 L1082.9 218.2 L1083.7 210.1 L1084.4 193.4 L1085.2 211.5 L1085.9 215.9 L1086.7 217.4 L1087.4 221.4 L1088.2 179.2 L1089.0 217.3 L1089.7 197.4 L1090.5 216.7 L1091.2 183.3 L1092.0 207.8 L1092.7 218.7 L1093.5 208.3 L1094.2 207.6 L1095.0 219.2 L1095.8 218.3 L1096.5 218.5 L1097.3 214.5 L1098.0 212.8 L1098.8 189.8 L1099.5 211.1 L1100.3 206.6 L1101.0 219.0 L1101.8 200.4 L1102.6 219.1 L1103.3 203.7 L1104.1 214.5 L1104.8 213.5 L1105.6 218.9 L1106.3 210.7 L1107.1 218.4 L1107.8 216.5 L1108.6 217.8 L1109.4 212.6 L1110.1 207.1 L1110.9 219.3 L1111.6 216.5 L1112.4 205.8 L1113.1 219.8 L1113.9 216.0 L1114.6 216.6 L1115.4 176.2 L1116.2 206.2 L1116.9 210.0 L1117.7 210.1 L1118.4 192.8 L1119.2 198.4 L1119.9 198.2 L1120.7 219.5 L1121.4 217.1 L1122.2 218.0 L1123.0 204.1 L1123.7 218.7 L1124.5 220.5 L1125.2 220.3 L1126.0 215.0 L1126.7 218.8 L1127.5 217.9 L1128.2 216.3 L1129.0 210.0 L1129.8 219.8 L1130.5 212.3 L1131.3 194.2 L1132.0 203.3 L1132.8 218.4 L1133.5 202.1 L1134.3 218.4 L1135.0 206.6 L1135.8 216.1 L1136.6 212.5 L1137.3 206.0 L1138.1 217.4 L1138.8 211.8 L1139.6 212.4 L1140.3 221.5 L1141.1 209.8 L1141.8 201.1 L1142.6 190.4 L1143.4 204.9 L1144.1 221.8 L1144.9 213.0 L1145.6 209.3 L1146.4 207.9 L1147.1 214.1 L1147.9 204.1 L1148.6 218.1 L1149.4 220.8 L1150.2 218.7 L1150.9 212.4 L1151.7 206.1 L1152.4 219.7 L1153.2 220.7 L1153.9 216.3 L1154.7 215.3 L1155.4 210.7 L1156.2 208.0 L1156.9 217.4 L1157.7 211.4 L1158.5 219.2 L1159.2 199.8 L1160.0 215.6 L1160.7 218.5 L1161.5 214.9 L1162.2 217.4 L1163.0 215.4 L1163.7 199.2 L1164.5 211.3 L1165.3 205.2 L1166.0 205.3 L1166.8 205.9 L1167.5 210.3 L1168.3 216.9 L1169.0 220.0 L1169.8 208.8 L1170.5 215.3 L1171.3 219.7 L1172.1 209.6 L1172.8 194.0 L1173.6 213.0 L1174.3 212.7 L1175.1 216.9 L1175.8 203.7 L1176.6 208.1 L1177.3 217.9 L1178.1 219.0 L1178.9 220.8 L1179.6 215.0 L1180.4 208.4 L1181.1 214.9 L1181.9 203.9 L1182.6 215.1 L1183.4 218.3 L1184.1 218.3 L1184.9 216.0 L1185.7 213.6 L1186.4 220.0 L1187.2 215.8 L1187.9 215.4 L1188.7 215.8 L1189.4 217.9 L1190.2 213.9 L1190.9 213.2 L1191.7 207.2" fill="none" stroke="#16a4ee" stroke-width="1.45" stroke-linejoin="round" stroke-linecap="round" />
<path d="M866.1 254.0 L866.9 255.7 L867.6 246.0 L868.4 245.1 L869.1 250.7 L869.9 247.3 L870.6 252.4 L871.4 247.7 L872.1 249.0 L872.9 250.2 L873.7 254.5 L874.4 255.6 L875.2 253.3 L875.9 248.5 L876.7 250.6 L877.4 247.7 L878.2 252.8 L878.9 251.1 L879.7 255.4 L880.5 252.9 L881.2 247.6 L882.0 250.5 L882.7 248.1 L883.5 254.7 L884.2 255.8 L885.0 251.4 L885.7 254.1 L886.5 248.5 L887.3 255.0 L888.0 249.3 L888.8 254.7 L889.5 249.5 L890.3 255.7 L891.0 254.5 L891.8 244.5 L892.5 250.6 L893.3 250.6 L894.1 246.1 L894.8 253.6 L895.6 255.0 L896.3 247.1 L897.1 254.8 L897.8 246.1 L898.6 250.7 L899.3 255.0 L900.1 255.4 L900.9 251.4 L901.6 254.2 L902.4 246.2 L903.1 256.3 L903.9 247.6 L904.6 254.9 L905.4 252.4 L906.1 246.1 L906.9 253.8 L907.6 249.6 L908.4 251.4 L909.2 250.8 L909.9 249.6 L910.7 254.5 L911.4 249.8 L912.2 253.9 L912.9 253.0 L913.7 252.4 L914.4 253.5 L915.2 249.2 L916.0 247.5 L916.7 250.1 L917.5 251.5 L918.2 247.4 L919.0 249.3 L919.7 255.4 L920.5 249.5 L921.2 249.6 L922.0 253.9 L922.8 249.1 L923.5 252.1 L924.3 245.6 L925.0 252.5 L925.8 252.5 L926.5 245.1 L927.3 255.3 L928.0 245.7 L928.8 250.5 L929.6 252.5 L930.3 251.7 L931.1 253.0 L931.8 252.3 L932.6 249.6 L933.3 253.3 L934.1 249.8 L934.8 252.0 L935.6 253.8 L936.4 246.0 L937.1 248.0 L937.9 254.2 L938.6 255.0 L939.4 254.7 L940.1 252.9 L940.9 252.2 L941.6 246.7 L942.4 251.2 L943.2 246.0 L943.9 250.6 L944.7 251.9 L945.4 251.4 L946.2 247.9 L946.9 254.7 L947.7 246.5 L948.4 246.4 L949.2 243.9 L950.0 251.0 L950.7 249.6 L951.5 248.9 L952.2 245.5 L953.0 247.4 L953.7 250.0 L954.5 249.0 L955.2 248.9 L956.0 251.5 L956.8 255.2 L957.5 256.2 L958.3 252.6 L959.0 250.9 L959.8 253.5 L960.5 245.9 L961.3 252.7 L962.0 248.8 L962.8 243.7 L963.6 246.2 L964.3 246.9 L965.1 248.3 L965.8 252.6 L966.6 246.1 L967.3 253.0 L968.1 251.5 L968.8 255.9 L969.6 248.4 L970.4 254.5 L971.1 249.3 L971.9 254.1 L972.6 255.3 L973.4 255.1 L974.1 250.3 L974.9 255.2 L975.6 255.9 L976.4 250.6 L977.2 245.0 L977.9 249.2 L978.7 252.0 L979.4 251.6 L980.2 245.8 L980.9 255.8 L981.7 247.3 L982.4 247.9 L983.2 253.1 L984.0 246.7 L984.7 247.4 L985.5 253.8 L986.2 255.0 L987.0 250.7 L987.7 253.9 L988.5 252.5 L989.2 246.4 L990.0 255.2 L990.7 252.0 L991.5 254.2 L992.3 249.1 L993.0 254.9 L993.8 246.1 L994.5 249.2 L995.3 254.1 L996.0 250.5 L996.8 256.0 L997.5 248.9 L998.3 253.0 L999.1 253.2 L999.8 246.9 L1000.6 245.8 L1001.3 246.3 L1002.1 253.4 L1002.8 246.4 L1003.6 252.5 L1004.3 249.0 L1005.1 254.7 L1005.9 245.2 L1006.6 251.1 L1007.4 253.4 L1008.1 251.0 L1008.9 245.7 L1009.6 245.1 L1010.4 253.6 L1011.1 249.8 L1011.9 255.1 L1012.7 249.6 L1013.4 251.7 L1014.2 249.8 L1014.9 254.3 L1015.7 254.6 L1016.4 245.9 L1017.2 255.3 L1017.9 254.8 L1018.7 249.1 L1019.5 255.2 L1020.2 251.4 L1021.0 252.3 L1021.7 252.2 L1022.5 250.1 L1023.2 251.5 L1024.0 249.6 L1024.7 252.9 L1025.5 256.0 L1026.3 248.9 L1027.0 252.8 L1027.8 247.3 L1028.5 248.0 L1029.3 253.2 L1030.0 241.6 L1030.8 251.9 L1031.5 254.4 L1032.3 255.5 L1033.1 254.1 L1033.8 244.6 L1034.6 249.2 L1035.3 252.1 L1036.1 249.3 L1036.8 247.7 L1037.6 250.0 L1038.3 250.5 L1039.1 252.6 L1039.9 250.5 L1040.6 249.7 L1041.4 254.7 L1042.1 253.8 L1042.9 253.8 L1043.6 247.6 L1044.4 253.3 L1045.1 254.5 L1045.9 249.7 L1046.7 247.6 L1047.4 255.7 L1048.2 249.4 L1048.9 245.2 L1049.7 246.3 L1050.4 250.4 L1051.2 251.8 L1051.9 246.9 L1052.7 248.9 L1053.5 252.3 L1054.2 252.1 L1055.0 252.7 L1055.7 248.3 L1056.5 246.8 L1057.2 247.3 L1058.0 242.3 L1058.7 251.4 L1059.5 253.6 L1060.3 251.9 L1061.0 254.6 L1061.8 255.3 L1062.5 250.8 L1063.3 248.0 L1064.0 254.9 L1064.8 247.6 L1065.5 255.2 L1066.3 250.5 L1067.1 252.6 L1067.8 253.0 L1068.6 250.4 L1069.3 253.6 L1070.1 247.6 L1070.8 246.2 L1071.6 254.2 L1072.3 253.3 L1073.1 248.8 L1073.8 255.6 L1074.6 251.6 L1075.4 253.6 L1076.1 253.1 L1076.9 253.2 L1077.6 248.8 L1078.4 245.7 L1079.1 247.7 L1079.9 253.4 L1080.6 253.0 L1081.4 250.7 L1082.2 247.9 L1082.9 253.0 L1083.7 248.7 L1084.4 243.4 L1085.2 253.8 L1085.9 248.8 L1086.7 255.2 L1087.4 251.5 L1088.2 245.6 L1089.0 250.7 L1089.7 252.3 L1090.5 254.5 L1091.2 254.5 L1092.0 251.9 L1092.7 255.0 L1093.5 248.2 L1094.2 246.3 L1095.0 253.4 L1095.8 255.0 L1096.5 251.1 L1097.3 255.4 L1098.0 254.0 L1098.8 254.9 L1099.5 255.2 L1100.3 246.5 L1101.0 253.4 L1101.8 250.9 L1102.6 249.6 L1103.3 248.0 L1104.1 255.5 L1104.8 250.0 L1105.6 240.5 L1106.3 251.3 L1107.1 241.9 L1107.8 254.4 L1108.6 254.9 L1109.4 246.9 L1110.1 254.1 L1110.9 250.7 L1111.6 242.6 L1112.4 255.7 L1113.1 253.5 L1113.9 252.8 L1114.6 255.7 L1115.4 248.3 L1116.2 254.6 L1116.9 251.8 L1117.7 250.6 L1118.4 253.3 L1119.2 247.6 L1119.9 250.8 L1120.7 256.4 L1121.4 253.4 L1122.2 250.9 L1123.0 252.8 L1123.7 246.7 L1124.5 245.4 L1125.2 248.5 L1126.0 254.0 L1126.7 254.5 L1127.5 247.5 L1128.2 255.1 L1129.0 247.5 L1129.8 253.2 L1130.5 252.6 L1131.3 254.9 L1132.0 249.1 L1132.8 249.8 L1133.5 251.0 L1134.3 246.9 L1135.0 247.8 L1135.8 248.7 L1136.6 254.8 L1137.3 254.3 L1138.1 253.8 L1138.8 248.2 L1139.6 245.9 L1140.3 251.3 L1141.1 252.7 L1141.8 245.6 L1142.6 254.0 L1143.4 246.9 L1144.1 253.0 L1144.9 256.7 L1145.6 254.4 L1146.4 254.5 L1147.1 256.2 L1147.9 248.0 L1148.6 254.8 L1149.4 250.6 L1150.2 253.4 L1150.9 254.1 L1151.7 251.0 L1152.4 250.9 L1153.2 252.3 L1153.9 249.1 L1154.7 246.8 L1155.4 255.1 L1156.2 254.0 L1156.9 249.4 L1157.7 252.9 L1158.5 253.1 L1159.2 254.5 L1160.0 255.1 L1160.7 254.9 L1161.5 255.1 L1162.2 246.1 L1163.0 257.0 L1163.7 255.7 L1164.5 253.6 L1165.3 253.1 L1166.0 246.7 L1166.8 255.9 L1167.5 245.1 L1168.3 255.0 L1169.0 254.6 L1169.8 246.0 L1170.5 253.1 L1171.3 254.5 L1172.1 250.6 L1172.8 253.3 L1173.6 253.0 L1174.3 250.0 L1175.1 246.9 L1175.8 246.5 L1176.6 254.4 L1177.3 253.0 L1178.1 250.3 L1178.9 244.1 L1179.6 246.4 L1180.4 245.9 L1181.1 251.5 L1181.9 253.0 L1182.6 247.4 L1183.4 251.5 L1184.1 254.9 L1184.9 247.0 L1185.7 254.2 L1186.4 251.0 L1187.2 255.8 L1187.9 254.7 L1188.7 250.3 L1189.4 253.2 L1190.2 247.5 L1190.9 254.5 L1191.7 254.4" fill="none" stroke="#62cbc6" stroke-width="1.45" stroke-linejoin="round" stroke-linecap="round" />
<path d="M866.1 269.0 L866.9 268.6 L867.6 271.7 L868.4 271.3 L869.1 271.7 L869.9 269.6 L870.6 269.0 L871.4 271.2 L872.1 267.1 L872.9 269.5 L873.7 270.5 L874.4 271.3 L875.2 267.6 L875.9 271.6 L876.7 270.4 L877.4 270.0 L878.2 269.5 L878.9 270.6 L879.7 270.9 L880.5 272.4 L881.2 271.3 L882.0 269.2 L882.7 266.5 L883.5 270.6 L884.2 269.0 L885.0 269.6 L885.7 267.2 L886.5 271.0 L887.3 270.2 L888.0 267.8 L888.8 270.9 L889.5 271.9 L890.3 270.2 L891.0 270.9 L891.8 271.5 L892.5 268.4 L893.3 268.3 L894.1 269.3 L894.8 271.5 L895.6 269.1 L896.3 267.3 L897.1 271.5 L897.8 269.6 L898.6 270.9 L899.3 269.6 L900.1 270.0 L900.9 269.5 L901.6 269.5 L902.4 270.7 L903.1 269.4 L903.9 270.5 L904.6 269.4 L905.4 272.1 L906.1 268.8 L906.9 270.1 L907.6 269.7 L908.4 272.0 L909.2 271.3 L909.9 271.4 L910.7 270.4 L911.4 272.4 L912.2 272.2 L912.9 270.9 L913.7 271.9 L914.4 270.8 L915.2 268.6 L916.0 271.8 L916.7 272.4 L917.5 271.6 L918.2 267.8 L919.0 269.4 L919.7 269.6 L920.5 270.2 L921.2 270.5 L922.0 269.8 L922.8 272.5 L923.5 271.8 L924.3 271.9 L925.0 271.7 L925.8 266.2 L926.5 270.2 L927.3 267.4 L928.0 267.9 L928.8 269.7 L929.6 271.1 L930.3 271.3 L931.1 270.2 L931.8 269.6 L932.6 270.6 L933.3 268.1 L934.1 267.8 L934.8 271.6 L935.6 268.5 L936.4 271.8 L937.1 270.1 L937.9 267.8 L938.6 270.1 L939.4 271.1 L940.1 271.9 L940.9 272.5 L941.6 270.3 L942.4 271.7 L943.2 267.9 L943.9 268.7 L944.7 271.2 L945.4 267.3 L946.2 268.6 L946.9 270.1 L947.7 271.4 L948.4 271.7 L949.2 270.4 L950.0 270.2 L950.7 267.9 L951.5 267.1 L952.2 268.7 L953.0 269.0 L953.7 264.9 L954.5 270.8 L955.2 268.4 L956.0 268.7 L956.8 270.7 L957.5 268.6 L958.3 270.1 L959.0 270.5 L959.8 268.3 L960.5 269.1 L961.3 270.2 L962.0 266.2 L962.8 269.5 L963.6 271.5 L964.3 269.8 L965.1 271.4 L965.8 270.9 L966.6 271.4 L967.3 269.3 L968.1 269.3 L968.8 268.0 L969.6 271.3 L970.4 270.1 L971.1 269.9 L971.9 267.8 L972.6 270.7 L973.4 269.4 L974.1 270.7 L974.9 268.3 L975.6 268.3 L976.4 267.8 L977.2 268.2 L977.9 271.4 L978.7 271.0 L979.4 268.6 L980.2 267.9 L980.9 270.9 L981.7 268.6 L982.4 269.0 L983.2 269.8 L984.0 267.9 L984.7 268.0 L985.5 270.0 L986.2 267.4 L987.0 270.8 L987.7 271.2 L988.5 270.3 L989.2 269.2 L990.0 265.7 L990.7 268.8 L991.5 267.6 L992.3 271.8 L993.0 267.1 L993.8 269.9 L994.5 268.6 L995.3 269.7 L996.0 271.8 L996.8 268.8 L997.5 267.5 L998.3 266.3 L999.1 270.8 L999.8 271.0 L1000.6 267.3 L1001.3 267.2 L1002.1 269.4 L1002.8 271.0 L1003.6 268.3 L1004.3 271.2 L1005.1 271.7 L1005.9 270.4 L1006.6 271.2 L1007.4 271.3 L1008.1 268.0 L1008.9 270.0 L1009.6 270.2 L1010.4 271.7 L1011.1 271.2 L1011.9 271.9 L1012.7 270.7 L1013.4 272.0 L1014.2 270.7 L1014.9 267.7 L1015.7 268.0 L1016.4 272.5 L1017.2 271.4 L1017.9 271.6 L1018.7 270.2 L1019.5 271.3 L1020.2 271.6 L1021.0 270.6 L1021.7 268.9 L1022.5 267.6 L1023.2 271.8 L1024.0 271.3 L1024.7 267.8 L1025.5 269.9 L1026.3 266.6 L1027.0 272.2 L1027.8 269.2 L1028.5 267.9 L1029.3 271.3 L1030.0 268.1 L1030.8 268.9 L1031.5 269.9 L1032.3 270.6 L1033.1 267.9 L1033.8 271.7 L1034.6 271.9 L1035.3 268.7 L1036.1 270.3 L1036.8 267.7 L1037.6 270.9 L1038.3 271.0 L1039.1 270.8 L1039.9 272.2 L1040.6 267.1 L1041.4 271.4 L1042.1 268.5 L1042.9 268.6 L1043.6 267.7 L1044.4 268.8 L1045.1 271.6 L1045.9 268.0 L1046.7 267.6 L1047.4 271.3 L1048.2 270.6 L1048.9 270.3 L1049.7 268.9 L1050.4 268.0 L1051.2 269.3 L1051.9 270.7 L1052.7 269.6 L1053.5 264.9 L1054.2 270.4 L1055.0 271.3 L1055.7 271.2 L1056.5 267.4 L1057.2 271.9 L1058.0 267.8 L1058.7 267.6 L1059.5 270.5 L1060.3 267.8 L1061.0 270.5 L1061.8 271.2 L1062.5 269.3 L1063.3 271.5 L1064.0 268.1 L1064.8 270.9 L1065.5 268.3 L1066.3 268.8 L1067.1 271.5 L1067.8 269.8 L1068.6 266.0 L1069.3 264.9 L1070.1 269.4 L1070.8 267.5 L1071.6 271.3 L1072.3 272.2 L1073.1 269.0 L1073.8 271.2 L1074.6 271.9 L1075.4 272.3 L1076.1 267.8 L1076.9 269.4 L1077.6 271.5 L1078.4 270.4 L1079.1 270.8 L1079.9 271.1 L1080.6 270.9 L1081.4 270.8 L1082.2 270.1 L1082.9 270.9 L1083.7 271.4 L1084.4 271.1 L1085.2 268.2 L1085.9 271.8 L1086.7 272.2 L1087.4 269.4 L1088.2 270.8 L1089.0 272.2 L1089.7 268.7 L1090.5 268.7 L1091.2 270.3 L1092.0 269.2 L1092.7 269.3 L1093.5 268.2 L1094.2 269.7 L1095.0 269.6 L1095.8 268.5 L1096.5 268.1 L1097.3 271.0 L1098.0 268.1 L1098.8 271.3 L1099.5 267.0 L1100.3 270.5 L1101.0 272.2 L1101.8 268.9 L1102.6 269.5 L1103.3 267.8 L1104.1 268.5 L1104.8 270.8 L1105.6 268.8 L1106.3 271.7 L1107.1 271.9 L1107.8 272.1 L1108.6 267.4 L1109.4 272.1 L1110.1 271.8 L1110.9 268.9 L1111.6 271.0 L1112.4 267.1 L1113.1 269.5 L1113.9 266.4 L1114.6 270.5 L1115.4 270.1 L1116.2 271.2 L1116.9 266.1 L1117.7 271.5 L1118.4 271.9 L1119.2 271.6 L1119.9 267.7 L1120.7 270.8 L1121.4 269.3 L1122.2 270.1 L1123.0 271.9 L1123.7 271.4 L1124.5 270.6 L1125.2 271.0 L1126.0 271.9 L1126.7 269.1 L1127.5 268.3 L1128.2 268.8 L1129.0 269.1 L1129.8 271.7 L1130.5 268.2 L1131.3 270.2 L1132.0 271.1 L1132.8 271.2 L1133.5 269.9 L1134.3 267.9 L1135.0 267.2 L1135.8 268.8 L1136.6 271.4 L1137.3 271.1 L1138.1 267.6 L1138.8 269.8 L1139.6 271.2 L1140.3 269.4 L1141.1 270.1 L1141.8 268.2 L1142.6 271.1 L1143.4 271.6 L1144.1 270.0 L1144.9 269.2 L1145.6 272.7 L1146.4 269.2 L1147.1 267.4 L1147.9 271.3 L1148.6 267.8 L1149.4 268.2 L1150.2 271.9 L1150.9 270.9 L1151.7 267.9 L1152.4 271.4 L1153.2 270.3 L1153.9 271.7 L1154.7 267.5 L1155.4 270.4 L1156.2 270.8 L1156.9 271.1 L1157.7 271.5 L1158.5 271.8 L1159.2 270.2 L1160.0 270.6 L1160.7 268.3 L1161.5 267.5 L1162.2 271.7 L1163.0 268.3 L1163.7 270.8 L1164.5 267.0 L1165.3 271.9 L1166.0 271.5 L1166.8 268.0 L1167.5 270.9 L1168.3 268.2 L1169.0 269.8 L1169.8 268.2 L1170.5 271.8 L1171.3 270.1 L1172.1 268.5 L1172.8 272.0 L1173.6 268.0 L1174.3 267.6 L1175.1 267.7 L1175.8 271.4 L1176.6 271.2 L1177.3 267.6 L1178.1 268.9 L1178.9 267.3 L1179.6 270.0 L1180.4 269.6 L1181.1 265.6 L1181.9 270.8 L1182.6 271.6 L1183.4 270.5 L1184.1 270.6 L1184.9 270.4 L1185.7 269.8 L1186.4 269.7 L1187.2 266.9 L1187.9 270.3 L1188.7 271.5 L1189.4 270.0 L1190.2 271.2 L1190.9 268.1 L1191.7 269.1" fill="none" stroke="#1db980" stroke-width="1.45" stroke-linejoin="round" stroke-linecap="round" />
<text x="867.3" y="304.7" text-anchor="middle" font-size="10.3" fill="#8a92ab" >12:00:00pm</text><rect x="866.8" y="290.1" width="1" height="2.6" fill="#343a4d"/><text x="921.6" y="304.7" text-anchor="middle" font-size="10.3" fill="#8a92ab" >Feb 22</text><rect x="921.1" y="290.1" width="1" height="2.6" fill="#343a4d"/><text x="975.8" y="304.7" text-anchor="middle" font-size="10.3" fill="#8a92ab" >12:00:00pm</text><rect x="975.3" y="290.1" width="1" height="2.6" fill="#343a4d"/><text x="1030.1" y="304.7" text-anchor="middle" font-size="10.3" fill="#8a92ab" >Feb 23</text><rect x="1029.6" y="290.1" width="1" height="2.6" fill="#343a4d"/><text x="1084.3" y="304.7" text-anchor="middle" font-size="10.3" fill="#8a92ab" >12:00:00pm</text><rect x="1083.8" y="290.1" width="1" height="2.6" fill="#343a4d"/><text x="1138.6" y="304.7" text-anchor="middle" font-size="10.3" fill="#8a92ab" >Feb 24</text><rect x="1138.1" y="290.1" width="1" height="2.6" fill="#343a4d"/>
<rect x="840.5" y="320.7" width="7.4" height="7.4" rx="1.6" fill="#16a4ee"/><text x="852.4" y="328.0" text-anchor="start" font-size="11.7" fill="#8a92ab" >orders</text><rect x="894.3" y="320.7" width="7.4" height="7.4" rx="1.6" fill="#62cbc6"/><text x="906.0" y="328.0" text-anchor="start" font-size="11.7" fill="#8a92ab" >users</text><rect x="942.8" y="320.7" width="7.4" height="7.4" rx="1.6" fill="#1db980"/><text x="954.4" y="328.0" text-anchor="start" font-size="11.7" fill="#8a92ab" >analytics</text>
<rect x="302.6" y="415.5" width="161.2" height="1" fill="#2e3446"/><text x="295.0" y="419.1" text-anchor="end" font-size="10.3" fill="#8a92ab" >0.35</text><rect x="302.6" y="438.3" width="161.2" height="1" fill="#2e3446"/><text x="295.0" y="441.9" text-anchor="end" font-size="10.3" fill="#8a92ab" >0.3</text><rect x="302.6" y="461.0" width="161.2" height="1" fill="#2e3446"/><text x="295.0" y="464.6" text-anchor="end" font-size="10.3" fill="#8a92ab" >0.25</text><rect x="302.6" y="483.8" width="161.2" height="1" fill="#2e3446"/><text x="295.0" y="487.4" text-anchor="end" font-size="10.3" fill="#8a92ab" >0.2</text><rect x="302.6" y="506.6" width="161.2" height="1" fill="#2e3446"/><text x="295.0" y="510.2" text-anchor="end" font-size="10.3" fill="#8a92ab" >0.15</text><rect x="302.6" y="529.4" width="161.2" height="1" fill="#2e3446"/><text x="295.0" y="532.9" text-anchor="end" font-size="10.3" fill="#8a92ab" >0.1</text><rect x="302.6" y="552.1" width="161.2" height="1" fill="#2e3446"/><text x="295.0" y="555.7" text-anchor="end" font-size="10.3" fill="#8a92ab" >0.05</text><rect x="301.8" y="574.4" width="163.8" height="2" fill="#343a4d"/><text x="295.0" y="578.5" text-anchor="end" font-size="10.3" fill="#8a92ab" >0</text>
<path d="M303.4 441.6 L303.9 429.3 L304.4 438.8 L304.9 455.7 L305.3 458.7 L305.8 434.9 L306.3 460.0 L306.8 447.1 L307.3 442.2 L307.8 443.3 L308.3 468.1 L308.8 451.4 L309.2 446.6 L309.7 445.5 L310.2 464.7 L310.7 435.2 L311.2 439.8 L311.7 440.2 L312.2 439.3 L312.6 463.9 L313.1 464.9 L313.6 442.7 L314.1 434.8 L314.6 434.7 L315.1 433.5 L315.6 456.4 L316.1 433.6 L316.5 466.2 L317.0 446.5 L317.5 439.0 L318.0 462.1 L318.5 434.7 L319.0 437.1 L319.5 432.6 L319.9 439.1 L320.4 440.4 L320.9 455.6 L321.4 462.9 L321.9 461.1 L322.4 454.3 L322.9 454.4 L323.4 435.3 L323.8 441.1 L324.3 458.7 L324.8 448.0 L325.3 435.2 L325.8 451.3 L326.3 449.3 L326.8 441.0 L327.2 435.1 L327.7 458.7 L328.2 431.9 L328.7 442.2 L329.2 457.3 L329.7 456.6 L330.2 440.5 L330.7 458.1 L331.1 460.7 L331.6 429.7 L332.1 449.5 L332.6 436.7 L333.1 454.5 L333.6 457.1 L334.1 438.3 L334.5 451.8 L335.0 438.7 L335.5 443.3 L336.0 439.8 L336.5 452.3 L337.0 441.0 L337.5 434.6 L338.0 440.3 L338.4 437.0 L338.9 439.8 L339.4 448.4 L339.9 435.9 L340.4 442.1 L340.9 437.9 L341.4 455.2 L341.8 451.0 L342.3 459.2 L342.8 463.7 L343.3 443.9 L343.8 433.8 L344.3 444.0 L344.8 438.7 L345.2 439.5 L345.7 450.1 L346.2 450.8 L346.7 454.8 L347.2 437.4 L347.7 434.1 L348.2 437.8 L348.7 455.0 L349.1 434.2 L349.6 444.0 L350.1 436.6 L350.6 447.2 L351.1 461.3 L351.6 455.1 L352.1 453.4 L352.5 455.8 L353.0 452.8 L353.5 463.6 L354.0 451.9 L354.5 429.3 L355.0 441.8 L355.5 459.0 L356.0 438.3 L356.4 438.8 L356.9 439.0 L357.4 461.3 L357.9 446.4 L358.4 455.6 L358.9 438.7 L359.4 450.3 L359.8 461.7 L360.3 433.8 L360.8 440.3 L361.3 446.7 L361.8 449.4 L362.3 448.0 L362.8 440.9 L363.3 447.8 L363.7 451.6 L364.2 456.9 L364.7 438.5 L365.2 448.5 L365.7 449.1 L366.2 454.7 L366.7 432.3 L367.1 442.8 L367.6 460.0 L368.1 453.6 L368.6 440.2 L369.1 431.3 L369.6 457.7 L370.1 445.5 L370.6 449.7 L371.0 449.6 L371.5 438.7 L372.0 441.6 L372.5 439.2 L373.0 454.5 L373.5 446.2 L374.0 451.8 L374.4 461.9 L374.9 444.5 L375.4 447.8 L375.9 445.0 L376.4 456.4 L376.9 446.4 L377.4 462.2 L377.9 458.8 L378.3 436.7 L378.8 441.7 L379.3 452.4 L379.8 436.1 L380.3 428.7 L380.8 440.2 L381.3 455.3 L381.7 448.6 L382.2 450.1 L382.7 453.0 L383.2 463.0 L383.7 456.2 L384.2 433.7 L384.7 446.0 L385.2 462.9 L385.6 452.8 L386.1 449.5 L386.6 460.3 L387.1 440.4 L387.6 446.1 L388.1 442.3 L388.6 441.3 L389.0 432.4 L389.5 433.9 L390.0 445.5 L390.5 431.3 L391.0 431.7 L391.5 456.4 L392.0 450.5 L392.5 449.7 L392.9 449.2 L393.4 467.0 L393.9 456.0 L394.4 443.1 L394.9 446.7 L395.4 439.0 L395.9 442.6 L396.3 444.9 L396.8 458.9 L397.3 452.6 L397.8 438.4 L398.3 450.5 L398.8 438.0 L399.3 433.1 L399.8 446.9 L400.2 437.1 L400.7 459.9 L401.2 452.5 L401.7 430.7 L402.2 453.5 L402.7 445.3 L403.2 445.4 L403.6 455.5 L404.1 445.4 L404.6 438.6 L405.1 430.0 L405.6 464.3 L406.1 455.1 L406.6 442.6 L407.1 443.3 L407.5 443.2 L408.0 437.5 L408.5 440.0 L409.0 451.8 L409.5 456.7 L410.0 440.7 L410.5 458.6 L410.9 443.7 L411.4 444.4 L411.9 449.3 L412.4 437.2 L412.9 458.5 L413.4 461.9 L413.9 434.0 L414.4 437.7 L414.8 462.0 L415.3 443.4 L415.8 451.2 L416.3 456.8 L416.8 448.7 L417.3 448.0 L417.8 438.6 L418.2 460.5 L418.7 459.4 L419.2 460.2 L419.7 454.7 L420.2 449.9 L420.7 453.8 L421.2 452.5 L421.7 463.2 L422.1 454.9 L422.6 452.2 L423.1 448.9 L423.6 448.6 L424.1 437.1 L424.6 438.1 L425.1 456.9 L425.5 454.5 L426.0 448.4 L426.5 458.0 L427.0 437.6 L427.5 454.1 L428.0 436.6 L428.5 447.8 L428.9 445.6 L429.4 461.7 L429.9 457.4 L430.4 454.3 L430.9 434.3 L431.4 427.9 L431.9 444.5 L432.4 446.5 L432.8 440.3 L433.3 452.6 L433.8 435.9 L434.3 452.0 L434.8 430.1 L435.3 460.3 L435.8 444.6 L436.2 447.3 L436.7 443.3 L437.2 456.3 L437.7 452.1 L438.2 437.1 L438.7 458.4 L439.2 449.0 L439.7 442.4 L440.1 433.0 L440.6 452.2 L441.1 453.7 L441.6 458.0 L442.1 432.4 L442.6 460.2 L443.1 445.9 L443.5 466.8 L444.0 457.2 L444.5 445.4 L445.0 439.8 L445.5 446.6 L446.0 448.8 L446.5 456.5 L447.0 450.7 L447.4 453.6 L447.9 448.8 L448.4 454.2 L448.9 438.1 L449.4 450.9 L449.9 451.4 L450.4 451.5 L450.8 459.2 L451.3 445.3 L451.8 459.2 L452.3 443.0 L452.8 458.5 L453.3 461.2 L453.8 451.8 L454.3 445.0 L454.7 454.6 L455.2 434.8 L455.7 438.8 L456.2 437.9 L456.7 443.1 L457.2 438.6 L457.7 439.2 L458.1 436.0 L458.6 435.4 L459.1 452.0 L459.6 442.4 L460.1 443.8 L460.6 450.0 L461.1 447.6 L461.6 451.9 L462.0 464.3 L462.5 437.7 L463.0 446.2 L463.5 466.1 L463.5 575.4 L303.4 575.4 Z" fill="#18587f" stroke="none"/>
<path d="M303.4 441.6 L303.9 429.3 L304.4 438.8 L304.9 455.7 L305.3 458.7 L305.8 434.9 L306.3 460.0 L306.8 447.1 L307.3 442.2 L307.8 443.3 L308.3 468.1 L308.8 451.4 L309.2 446.6 L309.7 445.5 L310.2 464.7 L310.7 435.2 L311.2 439.8 L311.7 440.2 L312.2 439.3 L312.6 463.9 L313.1 464.9 L313.6 442.7 L314.1 434.8 L314.6 434.7 L315.1 433.5 L315.6 456.4 L316.1 433.6 L316.5 466.2 L317.0 446.5 L317.5 439.0 L318.0 462.1 L318.5 434.7 L319.0 437.1 L319.5 432.6 L319.9 439.1 L320.4 440.4 L320.9 455.6 L321.4 462.9 L321.9 461.1 L322.4 454.3 L322.9 454.4 L323.4 435.3 L323.8 441.1 L324.3 458.7 L324.8 448.0 L325.3 435.2 L325.8 451.3 L326.3 449.3 L326.8 441.0 L327.2 435.1 L327.7 458.7 L328.2 431.9 L328.7 442.2 L329.2 457.3 L329.7 456.6 L330.2 440.5 L330.7 458.1 L331.1 460.7 L331.6 429.7 L332.1 449.5 L332.6 436.7 L333.1 454.5 L333.6 457.1 L334.1 438.3 L334.5 451.8 L335.0 438.7 L335.5 443.3 L336.0 439.8 L336.5 452.3 L337.0 441.0 L337.5 434.6 L338.0 440.3 L338.4 437.0 L338.9 439.8 L339.4 448.4 L339.9 435.9 L340.4 442.1 L340.9 437.9 L341.4 455.2 L341.8 451.0 L342.3 459.2 L342.8 463.7 L343.3 443.9 L343.8 433.8 L344.3 444.0 L344.8 438.7 L345.2 439.5 L345.7 450.1 L346.2 450.8 L346.7 454.8 L347.2 437.4 L347.7 434.1 L348.2 437.8 L348.7 455.0 L349.1 434.2 L349.6 444.0 L350.1 436.6 L350.6 447.2 L351.1 461.3 L351.6 455.1 L352.1 453.4 L352.5 455.8 L353.0 452.8 L353.5 463.6 L354.0 451.9 L354.5 429.3 L355.0 441.8 L355.5 459.0 L356.0 438.3 L356.4 438.8 L356.9 439.0 L357.4 461.3 L357.9 446.4 L358.4 455.6 L358.9 438.7 L359.4 450.3 L359.8 461.7 L360.3 433.8 L360.8 440.3 L361.3 446.7 L361.8 449.4 L362.3 448.0 L362.8 440.9 L363.3 447.8 L363.7 451.6 L364.2 456.9 L364.7 438.5 L365.2 448.5 L365.7 449.1 L366.2 454.7 L366.7 432.3 L367.1 442.8 L367.6 460.0 L368.1 453.6 L368.6 440.2 L369.1 431.3 L369.6 457.7 L370.1 445.5 L370.6 449.7 L371.0 449.6 L371.5 438.7 L372.0 441.6 L372.5 439.2 L373.0 454.5 L373.5 446.2 L374.0 451.8 L374.4 461.9 L374.9 444.5 L375.4 447.8 L375.9 445.0 L376.4 456.4 L376.9 446.4 L377.4 462.2 L377.9 458.8 L378.3 436.7 L378.8 441.7 L379.3 452.4 L379.8 436.1 L380.3 428.7 L380.8 440.2 L381.3 455.3 L381.7 448.6 L382.2 450.1 L382.7 453.0 L383.2 463.0 L383.7 456.2 L384.2 433.7 L384.7 446.0 L385.2 462.9 L385.6 452.8 L386.1 449.5 L386.6 460.3 L387.1 440.4 L387.6 446.1 L388.1 442.3 L388.6 441.3 L389.0 432.4 L389.5 433.9 L390.0 445.5 L390.5 431.3 L391.0 431.7 L391.5 456.4 L392.0 450.5 L392.5 449.7 L392.9 449.2 L393.4 467.0 L393.9 456.0 L394.4 443.1 L394.9 446.7 L395.4 439.0 L395.9 442.6 L396.3 444.9 L396.8 458.9 L397.3 452.6 L397.8 438.4 L398.3 450.5 L398.8 438.0 L399.3 433.1 L399.8 446.9 L400.2 437.1 L400.7 459.9 L401.2 452.5 L401.7 430.7 L402.2 453.5 L402.7 445.3 L403.2 445.4 L403.6 455.5 L404.1 445.4 L404.6 438.6 L405.1 430.0 L405.6 464.3 L406.1 455.1 L406.6 442.6 L407.1 443.3 L407.5 443.2 L408.0 437.5 L408.5 440.0 L409.0 451.8 L409.5 456.7 L410.0 440.7 L410.5 458.6 L410.9 443.7 L411.4 444.4 L411.9 449.3 L412.4 437.2 L412.9 458.5 L413.4 461.9 L413.9 434.0 L414.4 437.7 L414.8 462.0 L415.3 443.4 L415.8 451.2 L416.3 456.8 L416.8 448.7 L417.3 448.0 L417.8 438.6 L418.2 460.5 L418.7 459.4 L419.2 460.2 L419.7 454.7 L420.2 449.9 L420.7 453.8 L421.2 452.5 L421.7 463.2 L422.1 454.9 L422.6 452.2 L423.1 448.9 L423.6 448.6 L424.1 437.1 L424.6 438.1 L425.1 456.9 L425.5 454.5 L426.0 448.4 L426.5 458.0 L427.0 437.6 L427.5 454.1 L428.0 436.6 L428.5 447.8 L428.9 445.6 L429.4 461.7 L429.9 457.4 L430.4 454.3 L430.9 434.3 L431.4 427.9 L431.9 444.5 L432.4 446.5 L432.8 440.3 L433.3 452.6 L433.8 435.9 L434.3 452.0 L434.8 430.1 L435.3 460.3 L435.8 444.6 L436.2 447.3 L436.7 443.3 L437.2 456.3 L437.7 452.1 L438.2 437.1 L438.7 458.4 L439.2 449.0 L439.7 442.4 L440.1 433.0 L440.6 452.2 L441.1 453.7 L441.6 458.0 L442.1 432.4 L442.6 460.2 L443.1 445.9 L443.5 466.8 L444.0 457.2 L444.5 445.4 L445.0 439.8 L445.5 446.6 L446.0 448.8 L446.5 456.5 L447.0 450.7 L447.4 453.6 L447.9 448.8 L448.4 454.2 L448.9 438.1 L449.4 450.9 L449.9 451.4 L450.4 451.5 L450.8 459.2 L451.3 445.3 L451.8 459.2 L452.3 443.0 L452.8 458.5 L453.3 461.2 L453.8 451.8 L454.3 445.0 L454.7 454.6 L455.2 434.8 L455.7 438.8 L456.2 437.9 L456.7 443.1 L457.2 438.6 L457.7 439.2 L458.1 436.0 L458.6 435.4 L459.1 452.0 L459.6 442.4 L460.1 443.8 L460.6 450.0 L461.1 447.6 L461.6 451.9 L462.0 464.3 L462.5 437.7 L463.0 446.2 L463.5 466.1" fill="none" stroke="#16a4ee" stroke-width="1.6" stroke-linejoin="round" stroke-linecap="round" />
<path d="M303.4 512.6 L303.9 518.3 L304.4 520.7 L304.9 512.3 L305.3 513.7 L305.8 515.4 L306.3 515.1 L306.8 516.9 L307.3 510.9 L307.8 523.3 L308.3 512.2 L308.8 512.6 L309.2 524.1 L309.7 512.4 L310.2 510.1 L310.7 521.9 L311.2 518.8 L311.7 519.6 L312.2 510.4 L312.6 507.9 L313.1 509.9 L313.6 518.6 L314.1 510.7 L314.6 515.9 L315.1 515.1 L315.6 515.9 L316.1 514.8 L316.5 515.5 L317.0 519.4 L317.5 519.8 L318.0 512.1 L318.5 514.9 L319.0 508.6 L319.5 520.0 L319.9 511.3 L320.4 510.7 L320.9 513.8 L321.4 512.0 L321.9 511.3 L322.4 516.4 L322.9 522.4 L323.4 515.0 L323.8 511.6 L324.3 521.6 L324.8 522.8 L325.3 520.0 L325.8 513.0 L326.3 517.3 L326.8 510.9 L327.2 517.5 L327.7 511.6 L328.2 510.9 L328.7 511.8 L329.2 522.1 L329.7 512.5 L330.2 516.7 L330.7 520.9 L331.1 522.4 L331.6 522.0 L332.1 514.2 L332.6 512.4 L333.1 519.9 L333.6 520.3 L334.1 519.6 L334.5 515.2 L335.0 519.0 L335.5 519.8 L336.0 510.4 L336.5 516.4 L337.0 519.0 L337.5 513.1 L338.0 523.7 L338.4 516.0 L338.9 512.3 L339.4 515.4 L339.9 523.5 L340.4 520.8 L340.9 509.7 L341.4 511.2 L341.8 509.6 L342.3 520.0 L342.8 514.7 L343.3 510.2 L343.8 515.8 L344.3 517.5 L344.8 520.0 L345.2 509.6 L345.7 521.3 L346.2 513.5 L346.7 514.3 L347.2 512.6 L347.7 512.8 L348.2 517.2 L348.7 518.1 L349.1 519.6 L349.6 510.8 L350.1 517.0 L350.6 522.0 L351.1 522.7 L351.6 518.4 L352.1 520.3 L352.5 524.0 L353.0 517.1 L353.5 520.1 L354.0 519.7 L354.5 522.0 L355.0 512.0 L355.5 514.9 L356.0 517.9 L356.4 518.5 L356.9 512.3 L357.4 523.2 L357.9 518.3 L358.4 521.1 L358.9 513.0 L359.4 514.5 L359.8 510.6 L360.3 514.0 L360.8 512.6 L361.3 521.9 L361.8 521.8 L362.3 514.1 L362.8 514.3 L363.3 512.9 L363.7 511.9 L364.2 509.1 L364.7 514.9 L365.2 514.4 L365.7 520.0 L366.2 508.9 L366.7 509.7 L367.1 512.8 L367.6 521.5 L368.1 517.2 L368.6 511.2 L369.1 513.3 L369.6 514.3 L370.1 509.9 L370.6 515.2 L371.0 513.0 L371.5 521.7 L372.0 513.1 L372.5 516.3 L373.0 513.9 L373.5 525.4 L374.0 513.5 L374.4 519.4 L374.9 515.1 L375.4 507.6 L375.9 512.0 L376.4 510.1 L376.9 510.3 L377.4 520.1 L377.9 512.4 L378.3 510.8 L378.8 513.1 L379.3 520.5 L379.8 518.0 L380.3 513.6 L380.8 518.7 L381.3 513.2 L381.7 516.2 L382.2 522.3 L382.7 519.3 L383.2 520.0 L383.7 516.4 L384.2 509.6 L384.7 513.1 L385.2 520.8 L385.6 512.0 L386.1 512.4 L386.6 511.5 L387.1 513.2 L387.6 514.9 L388.1 514.8 L388.6 525.2 L389.0 515.2 L389.5 520.1 L390.0 513.0 L390.5 512.2 L391.0 518.1 L391.5 519.3 L392.0 517.1 L392.5 522.0 L392.9 517.2 L393.4 515.6 L393.9 522.9 L394.4 509.6 L394.9 508.1 L395.4 519.3 L395.9 511.0 L396.3 512.8 L396.8 514.2 L397.3 521.7 L397.8 519.8 L398.3 518.7 L398.8 511.1 L399.3 513.6 L399.8 505.7 L400.2 513.7 L400.7 525.4 L401.2 520.9 L401.7 522.9 L402.2 516.8 L402.7 516.7 L403.2 514.9 L403.6 513.2 L404.1 519.5 L404.6 510.2 L405.1 520.4 L405.6 519.9 L406.1 521.0 L406.6 518.6 L407.1 518.2 L407.5 514.6 L408.0 515.8 L408.5 523.0 L409.0 515.8 L409.5 520.9 L410.0 517.0 L410.5 521.8 L410.9 523.2 L411.4 519.8 L411.9 523.2 L412.4 523.6 L412.9 511.5 L413.4 519.2 L413.9 512.7 L414.4 518.4 L414.8 519.9 L415.3 512.4 L415.8 521.5 L416.3 522.1 L416.8 523.3 L417.3 513.6 L417.8 518.1 L418.2 519.2 L418.7 515.1 L419.2 524.2 L419.7 514.0 L420.2 517.0 L420.7 511.3 L421.2 512.7 L421.7 513.6 L422.1 523.4 L422.6 516.4 L423.1 520.0 L423.6 520.5 L424.1 521.3 L424.6 516.9 L425.1 521.5 L425.5 517.6 L426.0 524.8 L426.5 508.3 L427.0 517.9 L427.5 520.2 L428.0 514.5 L428.5 510.9 L428.9 514.6 L429.4 519.5 L429.9 516.7 L430.4 518.6 L430.9 511.1 L431.4 514.4 L431.9 508.1 L432.4 516.7 L432.8 519.1 L433.3 511.6 L433.8 523.3 L434.3 511.1 L434.8 507.0 L435.3 516.9 L435.8 520.0 L436.2 522.9 L436.7 516.7 L437.2 514.0 L437.7 520.5 L438.2 513.4 L438.7 516.9 L439.2 517.7 L439.7 511.6 L440.1 517.6 L440.6 514.7 L441.1 515.9 L441.6 514.1 L442.1 512.4 L442.6 510.1 L443.1 509.9 L443.5 517.6 L444.0 522.8 L444.5 522.3 L445.0 521.6 L445.5 513.2 L446.0 521.0 L446.5 513.5 L447.0 522.5 L447.4 510.7 L447.9 518.6 L448.4 521.8 L448.9 514.4 L449.4 513.8 L449.9 521.3 L450.4 516.4 L450.8 525.7 L451.3 510.8 L451.8 519.0 L452.3 515.4 L452.8 513.4 L453.3 513.6 L453.8 511.1 L454.3 517.8 L454.7 518.0 L455.2 510.3 L455.7 511.3 L456.2 512.8 L456.7 510.2 L457.2 508.6 L457.7 522.8 L458.1 516.0 L458.6 520.8 L459.1 509.0 L459.6 521.8 L460.1 516.1 L460.6 517.2 L461.1 522.9 L461.6 518.3 L462.0 516.0 L462.5 521.4 L463.0 512.1 L463.5 519.7 L463.5 575.4 L303.4 575.4 Z" fill="#476c79" stroke="none"/>
<path d="M303.4 512.6 L303.9 518.3 L304.4 520.7 L304.9 512.3 L305.3 513.7 L305.8 515.4 L306.3 515.1 L306.8 516.9 L307.3 510.9 L307.8 523.3 L308.3 512.2 L308.8 512.6 L309.2 524.1 L309.7 512.4 L310.2 510.1 L310.7 521.9 L311.2 518.8 L311.7 519.6 L312.2 510.4 L312.6 507.9 L313.1 509.9 L313.6 518.6 L314.1 510.7 L314.6 515.9 L315.1 515.1 L315.6 515.9 L316.1 514.8 L316.5 515.5 L317.0 519.4 L317.5 519.8 L318.0 512.1 L318.5 514.9 L319.0 508.6 L319.5 520.0 L319.9 511.3 L320.4 510.7 L320.9 513.8 L321.4 512.0 L321.9 511.3 L322.4 516.4 L322.9 522.4 L323.4 515.0 L323.8 511.6 L324.3 521.6 L324.8 522.8 L325.3 520.0 L325.8 513.0 L326.3 517.3 L326.8 510.9 L327.2 517.5 L327.7 511.6 L328.2 510.9 L328.7 511.8 L329.2 522.1 L329.7 512.5 L330.2 516.7 L330.7 520.9 L331.1 522.4 L331.6 522.0 L332.1 514.2 L332.6 512.4 L333.1 519.9 L333.6 520.3 L334.1 519.6 L334.5 515.2 L335.0 519.0 L335.5 519.8 L336.0 510.4 L336.5 516.4 L337.0 519.0 L337.5 513.1 L338.0 523.7 L338.4 516.0 L338.9 512.3 L339.4 515.4 L339.9 523.5 L340.4 520.8 L340.9 509.7 L341.4 511.2 L341.8 509.6 L342.3 520.0 L342.8 514.7 L343.3 510.2 L343.8 515.8 L344.3 517.5 L344.8 520.0 L345.2 509.6 L345.7 521.3 L346.2 513.5 L346.7 514.3 L347.2 512.6 L347.7 512.8 L348.2 517.2 L348.7 518.1 L349.1 519.6 L349.6 510.8 L350.1 517.0 L350.6 522.0 L351.1 522.7 L351.6 518.4 L352.1 520.3 L352.5 524.0 L353.0 517.1 L353.5 520.1 L354.0 519.7 L354.5 522.0 L355.0 512.0 L355.5 514.9 L356.0 517.9 L356.4 518.5 L356.9 512.3 L357.4 523.2 L357.9 518.3 L358.4 521.1 L358.9 513.0 L359.4 514.5 L359.8 510.6 L360.3 514.0 L360.8 512.6 L361.3 521.9 L361.8 521.8 L362.3 514.1 L362.8 514.3 L363.3 512.9 L363.7 511.9 L364.2 509.1 L364.7 514.9 L365.2 514.4 L365.7 520.0 L366.2 508.9 L366.7 509.7 L367.1 512.8 L367.6 521.5 L368.1 517.2 L368.6 511.2 L369.1 513.3 L369.6 514.3 L370.1 509.9 L370.6 515.2 L371.0 513.0 L371.5 521.7 L372.0 513.1 L372.5 516.3 L373.0 513.9 L373.5 525.4 L374.0 513.5 L374.4 519.4 L374.9 515.1 L375.4 507.6 L375.9 512.0 L376.4 510.1 L376.9 510.3 L377.4 520.1 L377.9 512.4 L378.3 510.8 L378.8 513.1 L379.3 520.5 L379.8 518.0 L380.3 513.6 L380.8 518.7 L381.3 513.2 L381.7 516.2 L382.2 522.3 L382.7 519.3 L383.2 520.0 L383.7 516.4 L384.2 509.6 L384.7 513.1 L385.2 520.8 L385.6 512.0 L386.1 512.4 L386.6 511.5 L387.1 513.2 L387.6 514.9 L388.1 514.8 L388.6 525.2 L389.0 515.2 L389.5 520.1 L390.0 513.0 L390.5 512.2 L391.0 518.1 L391.5 519.3 L392.0 517.1 L392.5 522.0 L392.9 517.2 L393.4 515.6 L393.9 522.9 L394.4 509.6 L394.9 508.1 L395.4 519.3 L395.9 511.0 L396.3 512.8 L396.8 514.2 L397.3 521.7 L397.8 519.8 L398.3 518.7 L398.8 511.1 L399.3 513.6 L399.8 505.7 L400.2 513.7 L400.7 525.4 L401.2 520.9 L401.7 522.9 L402.2 516.8 L402.7 516.7 L403.2 514.9 L403.6 513.2 L404.1 519.5 L404.6 510.2 L405.1 520.4 L405.6 519.9 L406.1 521.0 L406.6 518.6 L407.1 518.2 L407.5 514.6 L408.0 515.8 L408.5 523.0 L409.0 515.8 L409.5 520.9 L410.0 517.0 L410.5 521.8 L410.9 523.2 L411.4 519.8 L411.9 523.2 L412.4 523.6 L412.9 511.5 L413.4 519.2 L413.9 512.7 L414.4 518.4 L414.8 519.9 L415.3 512.4 L415.8 521.5 L416.3 522.1 L416.8 523.3 L417.3 513.6 L417.8 518.1 L418.2 519.2 L418.7 515.1 L419.2 524.2 L419.7 514.0 L420.2 517.0 L420.7 511.3 L421.2 512.7 L421.7 513.6 L422.1 523.4 L422.6 516.4 L423.1 520.0 L423.6 520.5 L424.1 521.3 L424.6 516.9 L425.1 521.5 L425.5 517.6 L426.0 524.8 L426.5 508.3 L427.0 517.9 L427.5 520.2 L428.0 514.5 L428.5 510.9 L428.9 514.6 L429.4 519.5 L429.9 516.7 L430.4 518.6 L430.9 511.1 L431.4 514.4 L431.9 508.1 L432.4 516.7 L432.8 519.1 L433.3 511.6 L433.8 523.3 L434.3 511.1 L434.8 507.0 L435.3 516.9 L435.8 520.0 L436.2 522.9 L436.7 516.7 L437.2 514.0 L437.7 520.5 L438.2 513.4 L438.7 516.9 L439.2 517.7 L439.7 511.6 L440.1 517.6 L440.6 514.7 L441.1 515.9 L441.6 514.1 L442.1 512.4 L442.6 510.1 L443.1 509.9 L443.5 517.6 L444.0 522.8 L444.5 522.3 L445.0 521.6 L445.5 513.2 L446.0 521.0 L446.5 513.5 L447.0 522.5 L447.4 510.7 L447.9 518.6 L448.4 521.8 L448.9 514.4 L449.4 513.8 L449.9 521.3 L450.4 516.4 L450.8 525.7 L451.3 510.8 L451.8 519.0 L452.3 515.4 L452.8 513.4 L453.3 513.6 L453.8 511.1 L454.3 517.8 L454.7 518.0 L455.2 510.3 L455.7 511.3 L456.2 512.8 L456.7 510.2 L457.2 508.6 L457.7 522.8 L458.1 516.0 L458.6 520.8 L459.1 509.0 L459.6 521.8 L460.1 516.1 L460.6 517.2 L461.1 522.9 L461.6 518.3 L462.0 516.0 L462.5 521.4 L463.0 512.1 L463.5 519.7" fill="none" stroke="#74d3cb" stroke-width="1.6" stroke-linejoin="round" stroke-linecap="round" />
<path d="M303.4 540.7 L303.9 536.7 L304.4 540.2 L304.9 546.5 L305.3 535.4 L305.8 535.5 L306.3 536.7 L306.8 536.6 L307.3 536.7 L307.8 539.2 L308.3 543.9 L308.8 538.0 L309.2 540.3 L309.7 536.7 L310.2 541.2 L310.7 538.4 L311.2 533.5 L311.7 541.9 L312.2 542.9 L312.6 536.5 L313.1 538.3 L313.6 536.0 L314.1 542.8 L314.6 543.8 L315.1 538.0 L315.6 540.8 L316.1 542.0 L316.5 542.3 L317.0 537.6 L317.5 536.1 L318.0 538.4 L318.5 536.7 L319.0 542.6 L319.5 539.3 L319.9 540.4 L320.4 543.2 L320.9 540.5 L321.4 539.4 L321.9 536.4 L322.4 543.6 L322.9 541.7 L323.4 532.2 L323.8 539.8 L324.3 544.3 L324.8 535.8 L325.3 544.2 L325.8 539.5 L326.3 536.4 L326.8 532.1 L327.2 536.4 L327.7 530.9 L328.2 537.9 L328.7 534.7 L329.2 543.8 L329.7 539.8 L330.2 536.3 L330.7 537.5 L331.1 535.1 L331.6 542.8 L332.1 540.7 L332.6 536.0 L333.1 542.7 L333.6 538.8 L334.1 536.3 L334.5 542.6 L335.0 535.5 L335.5 537.4 L336.0 538.1 L336.5 541.4 L337.0 537.8 L337.5 542.3 L338.0 537.7 L338.4 544.4 L338.9 535.9 L339.4 531.0 L339.9 530.5 L340.4 533.3 L340.9 542.8 L341.4 534.2 L341.8 541.8 L342.3 544.9 L342.8 534.2 L343.3 534.4 L343.8 543.1 L344.3 541.3 L344.8 539.9 L345.2 532.6 L345.7 539.1 L346.2 543.6 L346.7 536.6 L347.2 532.8 L347.7 541.5 L348.2 535.7 L348.7 532.9 L349.1 540.2 L349.6 536.3 L350.1 537.6 L350.6 532.6 L351.1 536.1 L351.6 539.9 L352.1 537.1 L352.5 541.0 L353.0 540.3 L353.5 543.7 L354.0 543.6 L354.5 543.4 L355.0 538.6 L355.5 537.2 L356.0 538.7 L356.4 538.2 L356.9 539.1 L357.4 540.7 L357.9 537.0 L358.4 534.5 L358.9 536.6 L359.4 539.0 L359.8 535.3 L360.3 532.8 L360.8 533.3 L361.3 540.1 L361.8 535.3 L362.3 543.1 L362.8 531.8 L363.3 539.1 L363.7 543.2 L364.2 542.4 L364.7 537.2 L365.2 534.7 L365.7 539.7 L366.2 537.8 L366.7 534.2 L367.1 535.7 L367.6 533.6 L368.1 538.8 L368.6 540.4 L369.1 537.1 L369.6 544.5 L370.1 536.9 L370.6 536.8 L371.0 535.4 L371.5 542.1 L372.0 539.9 L372.5 541.7 L373.0 541.2 L373.5 537.7 L374.0 540.3 L374.4 535.9 L374.9 538.0 L375.4 534.3 L375.9 534.7 L376.4 537.6 L376.9 542.1 L377.4 537.1 L377.9 544.5 L378.3 539.5 L378.8 539.8 L379.3 539.7 L379.8 538.5 L380.3 542.3 L380.8 533.7 L381.3 541.2 L381.7 543.9 L382.2 540.8 L382.7 540.0 L383.2 543.1 L383.7 536.2 L384.2 541.0 L384.7 535.3 L385.2 537.3 L385.6 534.2 L386.1 541.5 L386.6 545.3 L387.1 542.8 L387.6 535.3 L388.1 542.3 L388.6 537.5 L389.0 541.7 L389.5 535.0 L390.0 539.7 L390.5 540.1 L391.0 533.7 L391.5 536.0 L392.0 537.5 L392.5 531.9 L392.9 535.3 L393.4 544.8 L393.9 533.4 L394.4 540.3 L394.9 534.5 L395.4 540.9 L395.9 540.1 L396.3 539.0 L396.8 544.2 L397.3 534.0 L397.8 540.7 L398.3 537.0 L398.8 540.8 L399.3 543.7 L399.8 542.6 L400.2 536.5 L400.7 537.2 L401.2 535.9 L401.7 539.7 L402.2 540.5 L402.7 538.0 L403.2 540.0 L403.6 541.9 L404.1 536.7 L404.6 532.2 L405.1 538.1 L405.6 542.9 L406.1 534.7 L406.6 537.8 L407.1 545.7 L407.5 541.5 L408.0 538.6 L408.5 541.7 L409.0 538.1 L409.5 534.2 L410.0 540.3 L410.5 539.6 L410.9 535.4 L411.4 538.6 L411.9 535.5 L412.4 544.5 L412.9 533.8 L413.4 543.6 L413.9 542.2 L414.4 537.4 L414.8 536.6 L415.3 541.6 L415.8 533.6 L416.3 539.3 L416.8 535.6 L417.3 543.7 L417.8 540.7 L418.2 537.6 L418.7 538.2 L419.2 534.1 L419.7 542.7 L420.2 535.8 L420.7 542.1 L421.2 537.6 L421.7 540.4 L422.1 534.2 L422.6 537.3 L423.1 545.1 L423.6 537.7 L424.1 539.0 L424.6 540.3 L425.1 540.5 L425.5 537.1 L426.0 535.1 L426.5 539.7 L427.0 538.6 L427.5 540.1 L428.0 533.2 L428.5 532.4 L428.9 539.1 L429.4 537.7 L429.9 543.1 L430.4 542.7 L430.9 539.2 L431.4 539.5 L431.9 542.4 L432.4 539.3 L432.8 544.1 L433.3 541.3 L433.8 536.5 L434.3 533.3 L434.8 540.8 L435.3 536.3 L435.8 541.5 L436.2 536.4 L436.7 540.2 L437.2 545.6 L437.7 533.7 L438.2 537.6 L438.7 542.4 L439.2 541.0 L439.7 533.0 L440.1 540.6 L440.6 539.4 L441.1 537.2 L441.6 543.3 L442.1 533.2 L442.6 536.4 L443.1 536.4 L443.5 541.4 L444.0 532.6 L444.5 544.3 L445.0 543.6 L445.5 538.4 L446.0 537.2 L446.5 541.0 L447.0 536.1 L447.4 540.8 L447.9 539.9 L448.4 536.6 L448.9 540.3 L449.4 542.7 L449.9 537.1 L450.4 545.2 L450.8 541.2 L451.3 537.6 L451.8 544.6 L452.3 539.5 L452.8 538.4 L453.3 545.1 L453.8 540.8 L454.3 545.2 L454.7 538.7 L455.2 536.8 L455.7 540.8 L456.2 540.0 L456.7 534.3 L457.2 541.0 L457.7 538.4 L458.1 539.5 L458.6 542.5 L459.1 536.2 L459.6 540.4 L460.1 535.8 L460.6 534.1 L461.1 543.3 L461.6 533.7 L462.0 536.8 L462.5 544.6 L463.0 532.9 L463.5 536.6 L463.5 575.4 L303.4 575.4 Z" fill="#1b6354" stroke="none"/>
<path d="M303.4 540.7 L303.9 536.7 L304.4 540.2 L304.9 546.5 L305.3 535.4 L305.8 535.5 L306.3 536.7 L306.8 536.6 L307.3 536.7 L307.8 539.2 L308.3 543.9 L308.8 538.0 L309.2 540.3 L309.7 536.7 L310.2 541.2 L310.7 538.4 L311.2 533.5 L311.7 541.9 L312.2 542.9 L312.6 536.5 L313.1 538.3 L313.6 536.0 L314.1 542.8 L314.6 543.8 L315.1 538.0 L315.6 540.8 L316.1 542.0 L316.5 542.3 L317.0 537.6 L317.5 536.1 L318.0 538.4 L318.5 536.7 L319.0 542.6 L319.5 539.3 L319.9 540.4 L320.4 543.2 L320.9 540.5 L321.4 539.4 L321.9 536.4 L322.4 543.6 L322.9 541.7 L323.4 532.2 L323.8 539.8 L324.3 544.3 L324.8 535.8 L325.3 544.2 L325.8 539.5 L326.3 536.4 L326.8 532.1 L327.2 536.4 L327.7 530.9 L328.2 537.9 L328.7 534.7 L329.2 543.8 L329.7 539.8 L330.2 536.3 L330.7 537.5 L331.1 535.1 L331.6 542.8 L332.1 540.7 L332.6 536.0 L333.1 542.7 L333.6 538.8 L334.1 536.3 L334.5 542.6 L335.0 535.5 L335.5 537.4 L336.0 538.1 L336.5 541.4 L337.0 537.8 L337.5 542.3 L338.0 537.7 L338.4 544.4 L338.9 535.9 L339.4 531.0 L339.9 530.5 L340.4 533.3 L340.9 542.8 L341.4 534.2 L341.8 541.8 L342.3 544.9 L342.8 534.2 L343.3 534.4 L343.8 543.1 L344.3 541.3 L344.8 539.9 L345.2 532.6 L345.7 539.1 L346.2 543.6 L346.7 536.6 L347.2 532.8 L347.7 541.5 L348.2 535.7 L348.7 532.9 L349.1 540.2 L349.6 536.3 L350.1 537.6 L350.6 532.6 L351.1 536.1 L351.6 539.9 L352.1 537.1 L352.5 541.0 L353.0 540.3 L353.5 543.7 L354.0 543.6 L354.5 543.4 L355.0 538.6 L355.5 537.2 L356.0 538.7 L356.4 538.2 L356.9 539.1 L357.4 540.7 L357.9 537.0 L358.4 534.5 L358.9 536.6 L359.4 539.0 L359.8 535.3 L360.3 532.8 L360.8 533.3 L361.3 540.1 L361.8 535.3 L362.3 543.1 L362.8 531.8 L363.3 539.1 L363.7 543.2 L364.2 542.4 L364.7 537.2 L365.2 534.7 L365.7 539.7 L366.2 537.8 L366.7 534.2 L367.1 535.7 L367.6 533.6 L368.1 538.8 L368.6 540.4 L369.1 537.1 L369.6 544.5 L370.1 536.9 L370.6 536.8 L371.0 535.4 L371.5 542.1 L372.0 539.9 L372.5 541.7 L373.0 541.2 L373.5 537.7 L374.0 540.3 L374.4 535.9 L374.9 538.0 L375.4 534.3 L375.9 534.7 L376.4 537.6 L376.9 542.1 L377.4 537.1 L377.9 544.5 L378.3 539.5 L378.8 539.8 L379.3 539.7 L379.8 538.5 L380.3 542.3 L380.8 533.7 L381.3 541.2 L381.7 543.9 L382.2 540.8 L382.7 540.0 L383.2 543.1 L383.7 536.2 L384.2 541.0 L384.7 535.3 L385.2 537.3 L385.6 534.2 L386.1 541.5 L386.6 545.3 L387.1 542.8 L387.6 535.3 L388.1 542.3 L388.6 537.5 L389.0 541.7 L389.5 535.0 L390.0 539.7 L390.5 540.1 L391.0 533.7 L391.5 536.0 L392.0 537.5 L392.5 531.9 L392.9 535.3 L393.4 544.8 L393.9 533.4 L394.4 540.3 L394.9 534.5 L395.4 540.9 L395.9 540.1 L396.3 539.0 L396.8 544.2 L397.3 534.0 L397.8 540.7 L398.3 537.0 L398.8 540.8 L399.3 543.7 L399.8 542.6 L400.2 536.5 L400.7 537.2 L401.2 535.9 L401.7 539.7 L402.2 540.5 L402.7 538.0 L403.2 540.0 L403.6 541.9 L404.1 536.7 L404.6 532.2 L405.1 538.1 L405.6 542.9 L406.1 534.7 L406.6 537.8 L407.1 545.7 L407.5 541.5 L408.0 538.6 L408.5 541.7 L409.0 538.1 L409.5 534.2 L410.0 540.3 L410.5 539.6 L410.9 535.4 L411.4 538.6 L411.9 535.5 L412.4 544.5 L412.9 533.8 L413.4 543.6 L413.9 542.2 L414.4 537.4 L414.8 536.6 L415.3 541.6 L415.8 533.6 L416.3 539.3 L416.8 535.6 L417.3 543.7 L417.8 540.7 L418.2 537.6 L418.7 538.2 L419.2 534.1 L419.7 542.7 L420.2 535.8 L420.7 542.1 L421.2 537.6 L421.7 540.4 L422.1 534.2 L422.6 537.3 L423.1 545.1 L423.6 537.7 L424.1 539.0 L424.6 540.3 L425.1 540.5 L425.5 537.1 L426.0 535.1 L426.5 539.7 L427.0 538.6 L427.5 540.1 L428.0 533.2 L428.5 532.4 L428.9 539.1 L429.4 537.7 L429.9 543.1 L430.4 542.7 L430.9 539.2 L431.4 539.5 L431.9 542.4 L432.4 539.3 L432.8 544.1 L433.3 541.3 L433.8 536.5 L434.3 533.3 L434.8 540.8 L435.3 536.3 L435.8 541.5 L436.2 536.4 L436.7 540.2 L437.2 545.6 L437.7 533.7 L438.2 537.6 L438.7 542.4 L439.2 541.0 L439.7 533.0 L440.1 540.6 L440.6 539.4 L441.1 537.2 L441.6 543.3 L442.1 533.2 L442.6 536.4 L443.1 536.4 L443.5 541.4 L444.0 532.6 L444.5 544.3 L445.0 543.6 L445.5 538.4 L446.0 537.2 L446.5 541.0 L447.0 536.1 L447.4 540.8 L447.9 539.9 L448.4 536.6 L448.9 540.3 L449.4 542.7 L449.9 537.1 L450.4 545.2 L450.8 541.2 L451.3 537.6 L451.8 544.6 L452.3 539.5 L452.8 538.4 L453.3 545.1 L453.8 540.8 L454.3 545.2 L454.7 538.7 L455.2 536.8 L455.7 540.8 L456.2 540.0 L456.7 534.3 L457.2 541.0 L457.7 538.4 L458.1 539.5 L458.6 542.5 L459.1 536.2 L459.6 540.4 L460.1 535.8 L460.6 534.1 L461.1 543.3 L461.6 533.7 L462.0 536.8 L462.5 544.6 L463.0 532.9 L463.5 536.6" fill="none" stroke="#1fc58c" stroke-width="1.6" stroke-linejoin="round" stroke-linecap="round" />
<rect x="301.8" y="574.6" width="163.8" height="1.8" fill="#343a4d" opacity="0.9"/>
<text x="329.0" y="591.9" text-anchor="middle" font-size="10.3" fill="#8a92ab" >Feb 22</text><rect x="328.5" y="576.4" width="1" height="2.6" fill="#343a4d"/><text x="382.6" y="591.9" text-anchor="middle" font-size="10.3" fill="#8a92ab" >Feb 23</text><rect x="382.1" y="576.4" width="1" height="2.6" fill="#343a4d"/><text x="436.0" y="591.9" text-anchor="middle" font-size="10.3" fill="#8a92ab" >Feb 24</text><rect x="435.5" y="576.4" width="1" height="2.6" fill="#343a4d"/>
<clipPath id="c3"><rect x="270" y="600" width="160.5" height="22"/></clipPath>
<g clip-path="url(#c3)"><rect x="273.8" y="607.3" width="7.4" height="7.4" rx="1.6" fill="#16a4ee"/><text x="286.0" y="614.6" text-anchor="start" font-size="11.7" fill="#8a92ab" letter-spacing="-0.55">SELECT * FROM orders WHE</text></g>
<text x="445.4" y="612.8" text-anchor="start" font-size="10.9" fill="#8a92ab" >+2</text>
<rect x="549.6" y="415.5" width="158.0" height="1" fill="#2e3446"/><text x="543.7" y="419.1" text-anchor="end" font-size="10.3" fill="#8a92ab" >0.02</text><rect x="549.6" y="442.1" width="158.0" height="1" fill="#2e3446"/><text x="543.7" y="445.7" text-anchor="end" font-size="10.3" fill="#8a92ab" >0.01</text><rect x="549.6" y="468.6" width="158.0" height="1" fill="#2e3446"/><text x="543.7" y="472.2" text-anchor="end" font-size="10.3" fill="#8a92ab" >0.01</text><rect x="549.6" y="495.2" width="158.0" height="1" fill="#2e3446"/><text x="543.7" y="498.8" text-anchor="end" font-size="10.3" fill="#8a92ab" >0.01</text><rect x="549.6" y="521.8" width="158.0" height="1" fill="#2e3446"/><text x="543.7" y="525.4" text-anchor="end" font-size="10.3" fill="#8a92ab" >0.01</text><rect x="549.6" y="548.4" width="158.0" height="1" fill="#2e3446"/><text x="543.7" y="551.9" text-anchor="end" font-size="10.3" fill="#8a92ab" >0.003</text><rect x="548.8" y="574.4" width="160.6" height="2" fill="#343a4d"/><text x="543.7" y="578.5" text-anchor="end" font-size="10.3" fill="#8a92ab" >0</text>
<path d="M550.6 482.3 L551.0 485.2 L551.4 490.7 L551.8 492.2 L552.2 462.7 L552.6 484.6 L553.0 493.6 L553.4 493.6 L553.8 489.1 L554.2 494.0 L554.6 488.0 L555.0 490.6 L555.4 484.4 L555.8 486.4 L556.2 455.7 L556.6 489.5 L557.0 471.2 L557.4 478.4 L557.9 489.3 L558.3 488.3 L558.7 489.8 L559.1 488.7 L559.5 477.9 L559.9 494.9 L560.3 487.0 L560.7 485.7 L561.1 493.4 L561.5 458.0 L561.9 491.5 L562.3 484.0 L562.7 468.8 L563.1 486.1 L563.5 490.1 L563.9 492.5 L564.3 488.4 L564.7 488.3 L565.1 490.7 L565.5 485.3 L565.9 491.2 L566.3 489.5 L566.7 492.7 L567.1 490.8 L567.5 491.5 L567.9 493.1 L568.3 494.6 L568.7 480.5 L569.1 484.5 L569.5 478.5 L569.9 491.2 L570.3 493.1 L570.7 492.6 L571.1 492.4 L571.5 485.8 L571.9 493.1 L572.4 489.3 L572.8 460.0 L573.2 481.9 L573.6 491.5 L574.0 486.3 L574.4 490.2 L574.8 487.4 L575.2 487.9 L575.6 493.7 L576.0 492.6 L576.4 478.8 L576.8 488.1 L577.2 484.6 L577.6 485.7 L578.0 492.0 L578.4 481.6 L578.8 486.4 L579.2 489.5 L579.6 493.9 L580.0 480.7 L580.4 475.2 L580.8 482.6 L581.2 471.0 L581.6 491.5 L582.0 493.1 L582.4 493.4 L582.8 464.7 L583.2 492.6 L583.6 460.2 L584.0 483.5 L584.4 490.8 L584.8 483.7 L585.2 449.0 L585.6 458.4 L586.0 485.4 L586.5 490.9 L586.9 484.6 L587.3 490.4 L587.7 480.6 L588.1 490.8 L588.5 492.9 L588.9 481.6 L589.3 489.2 L589.7 483.9 L590.1 490.5 L590.5 488.3 L590.9 491.6 L591.3 479.2 L591.7 487.1 L592.1 489.2 L592.5 473.0 L592.9 488.8 L593.3 492.7 L593.7 485.7 L594.1 448.0 L594.5 472.5 L594.9 457.1 L595.3 488.3 L595.7 478.4 L596.1 484.1 L596.5 483.1 L596.9 484.2 L597.3 489.3 L597.7 492.9 L598.1 493.0 L598.5 485.7 L598.9 486.9 L599.3 494.3 L599.7 468.9 L600.1 492.8 L600.6 489.2 L601.0 486.4 L601.4 487.4 L601.8 491.1 L602.2 491.6 L602.6 483.9 L603.0 478.3 L603.4 490.3 L603.8 490.6 L604.2 477.7 L604.6 490.2 L605.0 475.9 L605.4 485.5 L605.8 487.5 L606.2 491.4 L606.6 489.7 L607.0 494.8 L607.4 489.9 L607.8 494.2 L608.2 492.3 L608.6 487.3 L609.0 488.9 L609.4 481.1 L609.8 492.6 L610.2 486.5 L610.6 492.2 L611.0 492.5 L611.4 494.1 L611.8 490.4 L612.2 490.5 L612.6 488.8 L613.0 453.0 L613.4 489.0 L613.8 476.8 L614.2 491.2 L614.6 493.5 L615.1 475.4 L615.5 489.1 L615.9 459.1 L616.3 488.2 L616.7 493.6 L617.1 462.5 L617.5 456.7 L617.9 492.9 L618.3 493.3 L618.7 484.0 L619.1 486.2 L619.5 446.0 L619.9 477.0 L620.3 487.4 L620.7 489.1 L621.1 482.4 L621.5 472.0 L621.9 486.5 L622.3 479.5 L622.7 476.7 L623.1 483.8 L623.5 488.9 L623.9 493.6 L624.3 490.9 L624.7 494.3 L625.1 490.4 L625.5 489.0 L625.9 487.4 L626.3 459.6 L626.7 487.1 L627.1 489.4 L627.5 483.3 L627.9 494.5 L628.3 489.9 L628.7 482.3 L629.2 483.9 L629.6 492.2 L630.0 489.2 L630.4 485.3 L630.8 488.0 L631.2 491.7 L631.6 465.1 L632.0 483.5 L632.4 482.7 L632.8 478.2 L633.2 462.7 L633.6 472.1 L634.0 479.9 L634.4 479.9 L634.8 486.4 L635.2 486.7 L635.6 482.8 L636.0 490.4 L636.4 485.4 L636.8 489.3 L637.2 490.7 L637.6 463.9 L638.0 490.2 L638.4 482.2 L638.8 491.6 L639.2 488.1 L639.6 484.7 L640.0 491.2 L640.4 493.2 L640.8 490.9 L641.2 490.2 L641.6 489.6 L642.0 489.6 L642.4 478.1 L642.8 478.0 L643.3 476.2 L643.7 490.7 L644.1 485.8 L644.5 470.4 L644.9 485.8 L645.3 493.5 L645.7 438.0 L646.1 488.7 L646.5 486.7 L646.9 488.5 L647.3 492.9 L647.7 490.3 L648.1 481.8 L648.5 486.4 L648.9 489.7 L649.3 489.4 L649.7 487.1 L650.1 493.0 L650.5 485.2 L650.9 488.5 L651.3 484.3 L651.7 488.5 L652.1 493.1 L652.5 490.3 L652.9 462.6 L653.3 490.5 L653.7 490.4 L654.1 489.2 L654.5 481.2 L654.9 476.2 L655.3 494.4 L655.7 491.3 L656.1 493.5 L656.5 476.6 L656.9 491.1 L657.3 487.0 L657.8 491.5 L658.2 489.5 L658.6 488.7 L659.0 487.0 L659.4 463.8 L659.8 480.5 L660.2 483.6 L660.6 458.1 L661.0 491.2 L661.4 483.6 L661.8 474.0 L662.2 492.1 L662.6 486.9 L663.0 482.2 L663.4 486.3 L663.8 491.7 L664.2 486.3 L664.6 490.5 L665.0 485.8 L665.4 480.2 L665.8 490.7 L666.2 486.0 L666.6 493.6 L667.0 481.7 L667.4 481.1 L667.8 490.8 L668.2 489.8 L668.6 489.5 L669.0 468.3 L669.4 482.7 L669.8 488.0 L670.2 468.1 L670.6 493.1 L671.0 489.7 L671.4 493.3 L671.9 492.3 L672.3 432.0 L672.7 468.3 L673.1 491.0 L673.5 494.1 L673.9 489.2 L674.3 487.8 L674.7 488.0 L675.1 485.1 L675.5 485.5 L675.9 488.2 L676.3 491.5 L676.7 483.0 L677.1 479.2 L677.5 462.1 L677.9 493.4 L678.3 489.8 L678.7 470.2 L679.1 487.8 L679.5 489.5 L679.9 493.3 L680.3 486.5 L680.7 483.8 L681.1 484.2 L681.5 487.4 L681.9 495.0 L682.3 481.6 L682.7 476.8 L683.1 486.2 L683.5 489.0 L683.9 490.3 L684.3 490.9 L684.7 491.0 L685.1 447.0 L685.5 483.6 L686.0 485.7 L686.4 484.5 L686.8 492.8 L687.2 458.8 L687.6 471.3 L688.0 494.3 L688.4 490.1 L688.8 456.3 L689.2 492.4 L689.6 492.7 L690.0 487.4 L690.4 488.7 L690.8 487.3 L691.2 475.8 L691.6 494.9 L692.0 476.7 L692.4 469.9 L692.8 490.8 L693.2 490.8 L693.6 492.8 L694.0 455.0 L694.4 475.2 L694.8 484.6 L695.2 490.9 L695.6 486.3 L696.0 489.8 L696.4 461.0 L696.8 492.5 L697.2 484.7 L697.6 486.0 L698.0 485.8 L698.4 488.1 L698.8 486.2 L699.2 473.0 L699.6 493.2 L700.0 448.0 L700.5 467.1 L700.9 480.5 L701.3 486.2 L701.7 492.4 L702.1 491.5 L702.5 484.7 L702.9 460.7 L703.3 482.5 L703.7 489.6 L704.1 489.2 L704.5 490.8 L704.9 493.0 L705.3 480.7 L705.7 491.0 L706.1 481.3 L706.5 480.1 L706.9 488.2 L707.3 494.0" fill="none" stroke="#f0941c" stroke-width="1.5" stroke-linejoin="round" stroke-linecap="round" />
<path d="M550.6 532.9 L551.0 524.4 L551.4 529.4 L551.8 528.6 L552.2 531.6 L552.6 533.8 L553.0 528.8 L553.4 517.5 L553.8 529.8 L554.2 512.0 L554.6 531.6 L555.0 533.5 L555.4 527.4 L555.8 529.3 L556.2 527.5 L556.6 533.7 L557.0 528.5 L557.4 533.0 L557.9 529.1 L558.3 531.8 L558.7 532.1 L559.1 529.3 L559.5 531.8 L559.9 529.2 L560.3 531.5 L560.7 531.8 L561.1 531.1 L561.5 530.4 L561.9 532.8 L562.3 528.9 L562.7 533.1 L563.1 522.1 L563.5 528.6 L563.9 533.0 L564.3 531.7 L564.7 531.8 L565.1 532.1 L565.5 531.5 L565.9 533.5 L566.3 526.4 L566.7 531.6 L567.1 533.4 L567.5 533.2 L567.9 530.5 L568.3 533.8 L568.7 532.0 L569.1 532.4 L569.5 519.0 L569.9 533.1 L570.3 533.4 L570.7 532.9 L571.1 532.4 L571.5 529.8 L571.9 533.3 L572.4 528.1 L572.8 529.2 L573.2 534.3 L573.6 531.7 L574.0 533.1 L574.4 534.1 L574.8 532.1 L575.2 532.5 L575.6 523.3 L576.0 531.6 L576.4 527.2 L576.8 529.4 L577.2 526.0 L577.6 530.8 L578.0 528.6 L578.4 533.2 L578.8 529.3 L579.2 533.1 L579.6 533.6 L580.0 532.2 L580.4 533.1 L580.8 529.0 L581.2 527.4 L581.6 528.8 L582.0 533.5 L582.4 527.7 L582.8 532.6 L583.2 533.3 L583.6 528.8 L584.0 534.4 L584.4 531.2 L584.8 531.6 L585.2 533.7 L585.6 530.2 L586.0 533.7 L586.5 527.8 L586.9 526.2 L587.3 530.9 L587.7 532.9 L588.1 526.2 L588.5 507.0 L588.9 530.0 L589.3 527.0 L589.7 530.7 L590.1 528.1 L590.5 528.6 L590.9 528.7 L591.3 525.7 L591.7 532.2 L592.1 533.1 L592.5 520.2 L592.9 533.3 L593.3 526.0 L593.7 532.6 L594.1 532.3 L594.5 531.7 L594.9 520.4 L595.3 530.6 L595.7 526.8 L596.1 526.9 L596.5 527.8 L596.9 531.3 L597.3 530.4 L597.7 532.5 L598.1 533.3 L598.5 526.5 L598.9 531.0 L599.3 531.2 L599.7 531.0 L600.1 530.2 L600.6 528.0 L601.0 530.1 L601.4 523.8 L601.8 533.8 L602.2 531.0 L602.6 529.6 L603.0 526.9 L603.4 532.8 L603.8 529.5 L604.2 515.7 L604.6 531.4 L605.0 532.2 L605.4 532.6 L605.8 529.5 L606.2 532.0 L606.6 533.9 L607.0 530.6 L607.4 532.7 L607.8 531.9 L608.2 530.0 L608.6 531.5 L609.0 531.1 L609.4 531.4 L609.8 531.7 L610.2 519.5 L610.6 531.3 L611.0 534.4 L611.4 533.6 L611.8 532.2 L612.2 528.8 L612.6 532.3 L613.0 531.3 L613.4 524.2 L613.8 531.3 L614.2 524.6 L614.6 530.8 L615.1 530.8 L615.5 531.6 L615.9 532.4 L616.3 529.8 L616.7 530.5 L617.1 528.4 L617.5 527.6 L617.9 532.3 L618.3 532.6 L618.7 532.7 L619.1 531.8 L619.5 529.1 L619.9 531.0 L620.3 532.6 L620.7 524.0 L621.1 531.5 L621.5 532.8 L621.9 532.8 L622.3 527.3 L622.7 533.2 L623.1 523.1 L623.5 527.6 L623.9 531.8 L624.3 528.1 L624.7 528.8 L625.1 531.0 L625.5 531.9 L625.9 532.3 L626.3 532.1 L626.7 532.1 L627.1 530.2 L627.5 527.1 L627.9 533.1 L628.3 533.2 L628.7 528.9 L629.2 528.4 L629.6 526.8 L630.0 530.2 L630.4 534.1 L630.8 531.7 L631.2 532.7 L631.6 530.8 L632.0 532.7 L632.4 532.7 L632.8 517.1 L633.2 523.3 L633.6 531.4 L634.0 532.6 L634.4 533.2 L634.8 529.8 L635.2 522.3 L635.6 519.9 L636.0 531.2 L636.4 530.3 L636.8 531.1 L637.2 534.0 L637.6 531.6 L638.0 533.5 L638.4 528.9 L638.8 532.1 L639.2 533.4 L639.6 526.9 L640.0 531.2 L640.4 531.1 L640.8 532.6 L641.2 529.2 L641.6 524.2 L642.0 533.1 L642.4 518.7 L642.8 532.5 L643.3 514.0 L643.7 529.4 L644.1 532.7 L644.5 533.3 L644.9 534.1 L645.3 526.5 L645.7 533.4 L646.1 528.4 L646.5 518.9 L646.9 529.8 L647.3 532.3 L647.7 531.5 L648.1 529.9 L648.5 526.1 L648.9 532.2 L649.3 523.8 L649.7 533.2 L650.1 530.0 L650.5 517.4 L650.9 526.6 L651.3 527.3 L651.7 532.0 L652.1 531.9 L652.5 532.0 L652.9 531.8 L653.3 527.4 L653.7 533.3 L654.1 530.9 L654.5 532.9 L654.9 533.5 L655.3 522.2 L655.7 531.7 L656.1 529.1 L656.5 532.0 L656.9 529.3 L657.3 523.6 L657.8 532.8 L658.2 530.3 L658.6 528.6 L659.0 521.0 L659.4 526.9 L659.8 532.5 L660.2 532.5 L660.6 530.6 L661.0 530.7 L661.4 522.3 L661.8 532.0 L662.2 533.5 L662.6 533.9 L663.0 526.3 L663.4 528.2 L663.8 532.1 L664.2 532.6 L664.6 534.0 L665.0 529.9 L665.4 527.8 L665.8 532.1 L666.2 529.7 L666.6 525.0 L667.0 529.1 L667.4 527.9 L667.8 533.6 L668.2 522.5 L668.6 532.7 L669.0 533.4 L669.4 526.4 L669.8 531.3 L670.2 530.4 L670.6 532.0 L671.0 529.3 L671.4 527.5 L671.9 525.2 L672.3 511.0 L672.7 533.1 L673.1 531.7 L673.5 532.5 L673.9 530.6 L674.3 522.2 L674.7 533.2 L675.1 523.1 L675.5 525.8 L675.9 528.2 L676.3 525.4 L676.7 528.7 L677.1 533.0 L677.5 529.7 L677.9 533.2 L678.3 522.9 L678.7 531.5 L679.1 530.7 L679.5 530.1 L679.9 533.9 L680.3 530.0 L680.7 532.1 L681.1 526.1 L681.5 532.7 L681.9 529.4 L682.3 533.4 L682.7 532.6 L683.1 529.0 L683.5 532.3 L683.9 533.6 L684.3 529.8 L684.7 531.0 L685.1 524.7 L685.5 530.4 L686.0 528.5 L686.4 532.0 L686.8 532.7 L687.2 524.1 L687.6 521.1 L688.0 513.0 L688.4 524.0 L688.8 528.5 L689.2 528.9 L689.6 532.8 L690.0 531.4 L690.4 533.1 L690.8 520.7 L691.2 531.6 L691.6 527.7 L692.0 526.8 L692.4 531.4 L692.8 530.8 L693.2 531.8 L693.6 533.3 L694.0 527.9 L694.4 532.4 L694.8 531.3 L695.2 532.8 L695.6 533.5 L696.0 523.4 L696.4 532.8 L696.8 507.5 L697.2 528.4 L697.6 522.6 L698.0 526.2 L698.4 515.6 L698.8 532.6 L699.2 529.5 L699.6 528.1 L700.0 532.0 L700.5 532.7 L700.9 524.5 L701.3 532.9 L701.7 531.6 L702.1 530.4 L702.5 531.8 L702.9 515.9 L703.3 531.0 L703.7 531.2 L704.1 529.5 L704.5 524.6 L704.9 532.1 L705.3 530.7 L705.7 526.7 L706.1 531.5 L706.5 533.3 L706.9 532.7 L707.3 529.9" fill="none" stroke="#cf6620" stroke-width="1.5" stroke-linejoin="round" stroke-linecap="round" />
<path d="M707.2 472.0 L707.2 492.0" fill="none" stroke="#f0941c" stroke-width="1.3" stroke-dasharray="4.6 3"/>
<path d="M707.2 530.0 L707.2 541.0" fill="none" stroke="#cf6620" stroke-width="1.3" stroke-dasharray="4.6 3"/>
<text x="576.4" y="591.9" text-anchor="middle" font-size="10.3" fill="#8a92ab" >Feb 22</text><rect x="575.9" y="576.4" width="1" height="2.6" fill="#343a4d"/><text x="628.1" y="591.9" text-anchor="middle" font-size="10.3" fill="#8a92ab" >Feb 23</text><rect x="627.6" y="576.4" width="1" height="2.6" fill="#343a4d"/><text x="679.8" y="591.9" text-anchor="middle" font-size="10.3" fill="#8a92ab" >Feb 24</text><rect x="679.3" y="576.4" width="1" height="2.6" fill="#343a4d"/>
<clipPath id="c4"><rect x="514" y="600" width="161.5" height="22"/></clipPath>
<g clip-path="url(#c4)"><rect x="516.9" y="607.3" width="7.4" height="7.4" rx="1.6" fill="#f0941c"/><text x="528.7" y="614.6" text-anchor="start" font-size="11.7" fill="#8a92ab" letter-spacing="-0.5">SELECT * FROM invoices JOI</text></g>
<text x="689.4" y="612.8" text-anchor="start" font-size="10.9" fill="#8a92ab" >+1</text>
<rect x="785.0" y="415.5" width="163.8" height="1" fill="#2e3446"/><text x="778.4" y="419.1" text-anchor="end" font-size="10.3" fill="#8a92ab" >100</text><rect x="785.0" y="447.4" width="163.8" height="1" fill="#2e3446"/><text x="778.4" y="451.0" text-anchor="end" font-size="10.3" fill="#8a92ab" >80</text><rect x="785.0" y="479.3" width="163.8" height="1" fill="#2e3446"/><text x="778.4" y="482.8" text-anchor="end" font-size="10.3" fill="#8a92ab" >60</text><rect x="785.0" y="511.1" width="163.8" height="1" fill="#2e3446"/><text x="778.4" y="514.7" text-anchor="end" font-size="10.3" fill="#8a92ab" >40</text><rect x="785.0" y="543.0" width="163.8" height="1" fill="#2e3446"/><text x="778.4" y="546.6" text-anchor="end" font-size="10.3" fill="#8a92ab" >20</text><rect x="784.2" y="574.4" width="166.4" height="2" fill="#343a4d"/><text x="778.4" y="578.5" text-anchor="end" font-size="10.3" fill="#8a92ab" >0</text>
<rect x="785.0" y="415.2" width="163.8" height="1.6" fill="#9c80e2"/>
<path d="M785.5 531.6 L785.9 522.8 L786.3 526.9 L786.6 527.9 L787.0 529.2 L787.4 529.2 L787.8 529.3 L788.1 527.5 L788.5 527.3 L788.9 528.8 L789.3 528.0 L789.7 528.7 L790.0 528.2 L790.4 528.0 L790.8 528.0 L791.2 529.1 L791.6 528.4 L791.9 527.0 L792.3 526.7 L792.7 527.8 L793.1 529.0 L793.4 528.9 L793.8 527.6 L794.2 527.1 L794.6 528.0 L795.0 528.1 L795.3 528.7 L795.7 529.3 L796.1 529.2 L796.5 529.7 L796.8 530.5 L797.2 528.5 L797.6 527.6 L798.0 525.9 L798.4 527.2 L798.7 527.4 L799.1 528.2 L799.5 527.8 L799.9 528.2 L800.2 528.4 L800.6 528.5 L801.0 528.0 L801.4 528.7 L801.8 528.1 L802.1 528.6 L802.5 528.7 L802.9 526.3 L803.3 528.0 L803.7 526.5 L804.0 527.6 L804.4 528.0 L804.8 528.9 L805.2 529.4 L805.5 528.3 L805.9 528.0 L806.3 529.0 L806.7 529.6 L807.1 528.6 L807.4 527.2 L807.8 526.7 L808.2 527.4 L808.6 526.4 L808.9 526.5 L809.3 525.4 L809.7 526.5 L810.1 526.5 L810.5 526.7 L810.8 527.5 L811.2 527.3 L811.6 528.3 L812.0 526.3 L812.4 526.9 L812.7 526.0 L813.1 527.1 L813.5 527.5 L813.9 527.5 L814.2 527.1 L814.6 527.1 L815.0 526.8 L815.4 527.3 L815.8 524.9 L816.1 526.8 L816.5 526.9 L816.9 527.0 L817.3 526.3 L817.6 526.6 L818.0 526.8 L818.4 528.9 L818.8 528.6 L819.2 527.6 L819.5 527.7 L819.9 527.7 L820.3 528.1 L820.7 528.1 L821.0 528.5 L821.4 529.4 L821.8 529.3 L822.2 527.1 L822.6 526.5 L822.9 526.8 L823.3 528.3 L823.7 528.8 L824.1 529.2 L824.5 528.7 L824.8 528.3 L825.2 528.9 L825.6 528.3 L826.0 527.4 L826.3 528.4 L826.7 528.1 L827.1 529.4 L827.5 527.4 L827.9 527.4 L828.2 527.4 L828.6 527.3 L829.0 527.6 L829.4 527.6 L829.7 527.0 L830.1 525.8 L830.5 525.5 L830.9 527.1 L831.3 527.8 L831.6 527.5 L832.0 527.1 L832.4 526.3 L832.8 528.8 L833.2 526.6 L833.5 527.0 L833.9 526.5 L834.3 528.1 L834.7 529.2 L835.0 529.3 L835.4 528.7 L835.8 526.7 L836.2 526.8 L836.6 526.3 L836.9 525.5 L837.3 526.4 L837.7 527.3 L838.1 527.1 L838.4 525.6 L838.8 526.1 L839.2 526.6 L839.6 528.7 L840.0 527.5 L840.3 526.1 L840.7 525.6 L841.1 525.8 L841.5 528.3 L841.9 528.0 L842.2 529.4 L842.6 527.8 L843.0 528.4 L843.4 529.2 L843.7 527.0 L844.1 526.7 L844.5 526.2 L844.9 526.7 L845.3 527.2 L845.6 526.4 L846.0 526.4 L846.4 528.6 L846.8 527.2 L847.1 526.4 L847.5 526.3 L847.9 527.3 L848.3 527.9 L848.7 528.2 L849.0 527.2 L849.4 527.4 L849.8 529.4 L850.2 529.4 L850.5 529.6 L850.9 528.9 L851.3 529.6 L851.7 529.4 L852.1 529.2 L852.4 529.4 L852.8 528.8 L853.2 528.9 L853.6 528.3 L854.0 528.3 L854.3 529.3 L854.7 527.8 L855.1 526.9 L855.5 527.7 L855.8 526.9 L856.2 527.5 L856.6 528.1 L857.0 529.2 L857.4 527.8 L857.7 528.5 L858.1 528.3 L858.5 528.5 L858.9 528.3 L859.2 528.9 L859.6 529.8 L860.0 529.9 L860.4 529.6 L860.8 527.0 L861.1 525.3 L861.5 524.2 L861.9 525.9 L862.3 525.8 L862.7 526.3 L863.0 526.1 L863.4 526.4 L863.8 527.8 L864.2 529.3 L864.5 530.7 L864.9 528.7 L865.3 527.1 L865.7 526.4 L866.1 527.2 L866.4 527.9 L866.8 527.4 L867.2 528.2 L867.6 527.6 L867.9 527.6 L868.3 526.7 L868.7 527.9 L869.1 527.1 L869.5 528.8 L869.8 529.3 L870.2 528.2 L870.6 530.0 L871.0 529.2 L871.3 528.8 L871.7 527.4 L872.1 527.8 L872.5 527.0 L872.9 528.2 L873.2 527.6 L873.6 529.8 L874.0 527.8 L874.4 528.0 L874.8 526.4 L875.1 527.3 L875.5 526.9 L875.9 527.0 L876.3 526.5 L876.6 526.3 L877.0 528.1 L877.4 527.6 L877.8 527.4 L878.2 527.3 L878.5 528.2 L878.9 528.6 L879.3 527.8 L879.7 526.3 L880.0 525.5 L880.4 526.1 L880.8 527.1 L881.2 528.0 L881.6 528.6 L881.9 530.3 L882.3 529.9 L882.7 531.1 L883.1 530.7 L883.5 529.2 L883.8 526.2 L884.2 526.0 L884.6 528.2 L885.0 528.9 L885.3 528.8 L885.7 527.5 L886.1 528.4 L886.5 529.0 L886.9 528.1 L887.2 526.9 L887.6 527.6 L888.0 526.2 L888.4 526.7 L888.7 526.0 L889.1 527.2 L889.5 528.0 L889.9 528.2 L890.3 526.6 L890.6 526.9 L891.0 525.9 L891.4 527.3 L891.8 527.5 L892.1 527.7 L892.5 526.6 L892.9 527.2 L893.3 528.7 L893.7 529.2 L894.0 527.2 L894.4 527.1 L894.8 526.0 L895.2 526.4 L895.6 525.8 L895.9 526.1 L896.3 527.0 L896.7 528.7 L897.1 528.3 L897.4 527.2 L897.8 525.9 L898.2 527.4 L898.6 528.0 L899.0 528.3 L899.3 527.5 L899.7 527.1 L900.1 526.0 L900.5 526.8 L900.8 529.8 L901.2 530.2 L901.6 529.5 L902.0 528.8 L902.4 529.0 L902.7 527.9 L903.1 527.1 L903.5 528.3 L903.9 527.9 L904.3 529.1 L904.6 527.1 L905.0 527.2 L905.4 527.3 L905.8 525.8 L906.1 525.8 L906.5 526.8 L906.9 528.4 L907.3 528.1 L907.7 525.3 L908.0 526.3 L908.4 525.8 L908.8 526.5 L909.2 527.0 L909.5 527.2 L909.9 529.0 L910.3 527.5 L910.7 528.7 L911.1 526.8 L911.4 527.4 L911.8 527.9 L912.2 529.2 L912.6 528.3 L913.0 528.8 L913.3 527.6 L913.7 527.5 L914.1 525.8 L914.5 527.1 L914.8 527.4 L915.2 529.2 L915.6 527.8 L916.0 527.4 L916.4 526.0 L916.7 528.1 L917.1 525.8 L917.5 527.3 L917.9 526.9 L918.2 527.8 L918.6 528.3 L919.0 527.7 L919.4 528.1 L919.8 527.0 L920.1 526.1 L920.5 526.1 L920.9 528.5 L921.3 529.0 L921.6 530.3 L922.0 529.3 L922.4 528.2 L922.8 527.5 L923.2 528.0 L923.5 528.7 L923.9 526.9 L924.3 527.5 L924.7 527.3 L925.1 529.2 L925.4 528.5 L925.8 527.8 L926.2 525.4 L926.6 526.3 L926.9 525.1 L927.3 527.0 L927.7 526.6 L928.1 528.3 L928.5 529.1 L928.8 527.7 L929.2 526.0 L929.6 526.8 L930.0 527.6 L930.3 528.2 L930.7 529.0 L931.1 529.4 L931.5 530.3 L931.9 530.1 L932.2 528.9 L932.6 528.8 L933.0 528.8 L933.4 527.9 L933.8 526.9 L934.1 525.8 L934.5 524.8 L934.9 526.1 L935.3 525.9 L935.6 525.6 L936.0 526.2 L936.4 526.9 L936.8 527.5 L937.2 527.4 L937.5 527.0 L937.9 526.6 L938.3 527.2 L938.7 526.4 L939.0 526.8 L939.4 528.8 L939.8 527.5 L940.2 527.0 L940.6 526.4 L940.9 527.9 L941.3 528.1 L941.7 528.2 L942.1 528.5 L942.4 528.2 L942.8 528.6 L943.2 527.9 L943.6 527.3 L944.0 529.9 L944.3 529.9 L944.7 530.7 L945.1 528.5 L945.5 528.8 L945.9 526.1 L946.2 527.0 L946.6 526.1 L947.0 528.4 L947.4 528.7 L947.7 529.6 L948.1 530.8 L948.5 533.2" fill="none" stroke="#16a4ee" stroke-width="1.8" stroke-linejoin="round" stroke-linecap="round" />
<path d="M785.5 551.8 L785.9 552.2 L786.3 551.9 L786.6 551.7 L787.0 551.7 L787.4 552.0 L787.8 551.4 L788.1 552.0 L788.5 551.3 L788.9 551.6 L789.3 551.7 L789.7 551.3 L790.0 551.5 L790.4 551.2 L790.8 550.9 L791.2 551.4 L791.6 551.3 L791.9 551.1 L792.3 550.8 L792.7 550.9 L793.1 551.5 L793.4 551.7 L793.8 551.6 L794.2 551.4 L794.6 552.2 L795.0 552.1 L795.3 552.1 L795.7 551.6 L796.1 551.6 L796.5 551.4 L796.8 551.9 L797.2 552.4 L797.6 553.1 L798.0 551.9 L798.4 552.3 L798.7 552.0 L799.1 552.6 L799.5 551.9 L799.9 551.4 L800.2 550.8 L800.6 550.4 L801.0 551.5 L801.4 551.3 L801.8 551.8 L802.1 551.6 L802.5 551.0 L802.9 550.8 L803.3 551.6 L803.7 551.8 L804.0 552.5 L804.4 552.1 L804.8 552.3 L805.2 551.8 L805.5 551.4 L805.9 550.4 L806.3 550.9 L806.7 550.9 L807.1 551.7 L807.4 551.4 L807.8 551.5 L808.2 551.3 L808.6 552.3 L808.9 551.7 L809.3 553.3 L809.7 551.8 L810.1 552.8 L810.5 552.3 L810.8 552.3 L811.2 552.3 L811.6 552.1 L812.0 552.2 L812.4 550.9 L812.7 551.7 L813.1 551.4 L813.5 551.7 L813.9 551.3 L814.2 551.1 L814.6 551.4 L815.0 551.2 L815.4 550.7 L815.8 550.4 L816.1 551.3 L816.5 551.4 L816.9 551.7 L817.3 551.7 L817.6 551.6 L818.0 551.5 L818.4 552.4 L818.8 551.2 L819.2 551.6 L819.5 551.5 L819.9 551.9 L820.3 552.6 L820.7 551.5 L821.0 552.4 L821.4 551.8 L821.8 552.4 L822.2 551.9 L822.6 552.8 L822.9 552.4 L823.3 552.3 L823.7 551.1 L824.1 551.2 L824.5 550.6 L824.8 550.5 L825.2 550.2 L825.6 550.5 L826.0 550.7 L826.3 551.2 L826.7 551.0 L827.1 551.6 L827.5 551.5 L827.9 551.1 L828.2 551.3 L828.6 551.5 L829.0 552.1 L829.4 551.2 L829.7 551.5 L830.1 550.7 L830.5 550.3 L830.9 550.2 L831.3 549.9 L831.6 550.7 L832.0 551.2 L832.4 551.2 L832.8 550.6 L833.2 550.6 L833.5 550.3 L833.9 551.0 L834.3 550.0 L834.7 552.0 L835.0 551.9 L835.4 552.7 L835.8 550.9 L836.2 550.8 L836.6 550.3 L836.9 551.0 L837.3 551.2 L837.7 551.2 L838.1 551.1 L838.4 551.1 L838.8 551.5 L839.2 551.1 L839.6 551.3 L840.0 551.7 L840.3 552.5 L840.7 552.7 L841.1 550.8 L841.5 550.5 L841.9 551.3 L842.2 551.1 L842.6 551.3 L843.0 550.6 L843.4 550.6 L843.7 551.5 L844.1 551.1 L844.5 551.1 L844.9 550.7 L845.3 550.5 L845.6 550.9 L846.0 550.9 L846.4 551.6 L846.8 551.6 L847.1 552.5 L847.5 551.9 L847.9 551.3 L848.3 551.3 L848.7 551.2 L849.0 551.7 L849.4 551.8 L849.8 551.4 L850.2 551.0 L850.5 550.5 L850.9 550.5 L851.3 550.5 L851.7 550.9 L852.1 552.0 L852.4 551.5 L852.8 552.0 L853.2 552.1 L853.6 552.4 L854.0 552.0 L854.3 551.9 L854.7 552.0 L855.1 552.7 L855.5 552.5 L855.8 551.6 L856.2 551.2 L856.6 551.3 L857.0 551.8 L857.4 551.9 L857.7 552.1 L858.1 552.6 L858.5 552.8 L858.9 552.7 L859.2 551.4 L859.6 551.3 L860.0 551.5 L860.4 551.0 L860.8 550.5 L861.1 551.0 L861.5 551.9 L861.9 552.0 L862.3 551.8 L862.7 550.9 L863.0 550.9 L863.4 550.1 L863.8 550.5 L864.2 550.4 L864.5 551.2 L864.9 551.7 L865.3 552.0 L865.7 551.8 L866.1 551.3 L866.4 552.1 L866.8 551.9 L867.2 551.7 L867.6 550.0 L867.9 549.8 L868.3 550.7 L868.7 551.0 L869.1 551.0 L869.5 551.4 L869.8 551.0 L870.2 551.2 L870.6 551.2 L871.0 550.7 L871.3 551.3 L871.7 551.1 L872.1 551.9 L872.5 551.8 L872.9 550.9 L873.2 552.1 L873.6 551.8 L874.0 552.2 L874.4 551.5 L874.8 551.4 L875.1 550.9 L875.5 552.1 L875.9 551.4 L876.3 551.6 L876.6 551.3 L877.0 551.2 L877.4 550.9 L877.8 551.0 L878.2 551.6 L878.5 551.0 L878.9 550.7 L879.3 551.1 L879.7 551.9 L880.0 552.0 L880.4 551.9 L880.8 552.2 L881.2 551.5 L881.6 551.5 L881.9 551.0 L882.3 551.0 L882.7 550.4 L883.1 551.0 L883.5 551.3 L883.8 552.4 L884.2 551.8 L884.6 551.3 L885.0 551.2 L885.3 551.4 L885.7 552.0 L886.1 552.4 L886.5 551.7 L886.9 551.4 L887.2 551.4 L887.6 551.6 L888.0 551.7 L888.4 550.4 L888.7 550.3 L889.1 550.6 L889.5 551.9 L889.9 551.7 L890.3 552.5 L890.6 551.9 L891.0 551.2 L891.4 551.0 L891.8 550.9 L892.1 551.4 L892.5 551.5 L892.9 551.7 L893.3 551.4 L893.7 551.6 L894.0 552.0 L894.4 551.8 L894.8 552.2 L895.2 552.2 L895.6 551.9 L895.9 551.2 L896.3 551.6 L896.7 551.9 L897.1 552.3 L897.4 551.7 L897.8 551.5 L898.2 552.0 L898.6 551.5 L899.0 552.6 L899.3 552.5 L899.7 552.3 L900.1 552.3 L900.5 551.2 L900.8 551.7 L901.2 551.2 L901.6 551.3 L902.0 550.7 L902.4 550.8 L902.7 551.7 L903.1 552.3 L903.5 551.4 L903.9 551.5 L904.3 551.2 L904.6 551.7 L905.0 550.8 L905.4 551.5 L905.8 551.0 L906.1 551.1 L906.5 550.7 L906.9 551.2 L907.3 550.7 L907.7 551.6 L908.0 551.4 L908.4 551.3 L908.8 551.1 L909.2 551.0 L909.5 551.7 L909.9 551.6 L910.3 551.7 L910.7 551.3 L911.1 551.4 L911.4 551.7 L911.8 551.8 L912.2 551.8 L912.6 551.0 L913.0 551.5 L913.3 551.3 L913.7 551.8 L914.1 551.9 L914.5 551.7 L914.8 551.3 L915.2 551.7 L915.6 551.4 L916.0 551.4 L916.4 550.8 L916.7 551.4 L917.1 551.3 L917.5 551.9 L917.9 551.1 L918.2 551.8 L918.6 552.3 L919.0 552.4 L919.4 551.2 L919.8 550.7 L920.1 551.2 L920.5 551.1 L920.9 551.0 L921.3 551.4 L921.6 551.3 L922.0 550.9 L922.4 551.1 L922.8 551.4 L923.2 551.4 L923.5 551.5 L923.9 551.3 L924.3 551.1 L924.7 551.9 L925.1 551.4 L925.4 551.9 L925.8 551.2 L926.2 551.4 L926.6 551.3 L926.9 551.8 L927.3 551.7 L927.7 552.0 L928.1 551.5 L928.5 551.0 L928.8 551.4 L929.2 551.0 L929.6 551.6 L930.0 551.2 L930.3 551.7 L930.7 551.3 L931.1 551.0 L931.5 550.5 L931.9 551.3 L932.2 551.5 L932.6 551.6 L933.0 550.9 L933.4 551.1 L933.8 551.1 L934.1 551.7 L934.5 551.3 L934.9 551.1 L935.3 551.2 L935.6 551.6 L936.0 551.7 L936.4 551.0 L936.8 550.8 L937.2 550.9 L937.5 551.1 L937.9 551.2 L938.3 550.9 L938.7 551.5 L939.0 551.3 L939.4 552.5 L939.8 553.0 L940.2 552.7 L940.6 552.0 L940.9 550.6 L941.3 551.0 L941.7 551.2 L942.1 551.0 L942.4 551.4 L942.8 551.1 L943.2 551.5 L943.6 551.2 L944.0 551.5 L944.3 552.2 L944.7 552.1 L945.1 552.5 L945.5 552.2 L945.9 551.7 L946.2 550.6 L946.6 551.4 L947.0 551.4 L947.4 550.4 L947.7 551.0 L948.1 551.2 L948.5 551.4" fill="none" stroke="#62cbc6" stroke-width="1.5" stroke-linejoin="round" stroke-linecap="round" />
<rect x="785.0" y="571.6" width="163.8" height="1.8" fill="#1db980"/>
<text x="812.1" y="591.9" text-anchor="middle" font-size="10.3" fill="#8a92ab" >Feb 22</text><rect x="811.6" y="576.4" width="1" height="2.6" fill="#343a4d"/><text x="866.8" y="591.9" text-anchor="middle" font-size="10.3" fill="#8a92ab" >Feb 23</text><rect x="866.3" y="576.4" width="1" height="2.6" fill="#343a4d"/><text x="921.4" y="591.9" text-anchor="middle" font-size="10.3" fill="#8a92ab" >Feb 24</text><rect x="920.9" y="576.4" width="1" height="2.6" fill="#343a4d"/>
<rect x="759.9" y="607.3" width="7.4" height="7.4" rx="1.6" fill="#62cbc6"/><text x="771.7" y="614.6" text-anchor="start" font-size="11.7" fill="#8a92ab" >active</text><rect x="811.3" y="607.3" width="7.4" height="7.4" rx="1.6" fill="#16a4ee"/><text x="822.8" y="614.6" text-anchor="start" font-size="11.7" fill="#8a92ab" >idle</text><rect x="849.8" y="607.3" width="7.4" height="7.4" rx="1.6" fill="#1db980"/><text x="861.4" y="614.6" text-anchor="start" font-size="11.7" fill="#8a92ab" >reserved</text>
<text x="932.4" y="612.8" text-anchor="start" font-size="10.9" fill="#8a92ab" >+1</text>
<rect x="1030.2" y="415.5" width="162.1" height="1" fill="#2e3446"/><text x="1023.5" y="419.1" text-anchor="end" font-size="10.3" fill="#8a92ab" >50M</text><rect x="1030.2" y="447.4" width="162.1" height="1" fill="#2e3446"/><text x="1023.5" y="451.0" text-anchor="end" font-size="10.3" fill="#8a92ab" >40M</text><rect x="1030.2" y="479.3" width="162.1" height="1" fill="#2e3446"/><text x="1023.5" y="482.8" text-anchor="end" font-size="10.3" fill="#8a92ab" >30M</text><rect x="1030.2" y="511.1" width="162.1" height="1" fill="#2e3446"/><text x="1023.5" y="514.7" text-anchor="end" font-size="10.3" fill="#8a92ab" >20M</text><rect x="1030.2" y="543.0" width="162.1" height="1" fill="#2e3446"/><text x="1023.5" y="546.6" text-anchor="end" font-size="10.3" fill="#8a92ab" >10M</text><rect x="1029.4" y="574.4" width="164.7" height="2" fill="#343a4d"/><text x="1023.5" y="578.5" text-anchor="end" font-size="10.3" fill="#8a92ab" >0M</text>
<path d="M1031.4 503.7 L1031.4 526.0" fill="none" stroke="#62cbc6" stroke-width="2.0" stroke-dasharray="4.6 3"/>
<path d="M1191.7 425.6 L1191.7 492.5" fill="none" stroke="#62cbc6" stroke-width="2.0" stroke-dasharray="4.6 3"/>
<path d="M1031.4 503.3 L1031.9 488.6 L1032.4 494.1 L1033.0 514.8 L1033.5 517.9 L1034.0 473.4 L1034.5 514.6 L1035.0 512.2 L1035.5 457.1 L1036.1 507.1 L1036.6 515.4 L1037.1 509.5 L1037.6 479.8 L1038.1 505.6 L1038.7 495.3 L1039.2 524.6 L1039.7 503.5 L1040.2 492.3 L1040.7 492.1 L1041.2 467.8 L1041.8 484.3 L1042.3 525.3 L1042.8 520.8 L1043.3 508.2 L1043.8 498.0 L1044.4 492.1 L1044.9 482.2 L1045.4 521.9 L1045.9 524.4 L1046.4 479.4 L1046.9 510.2 L1047.5 524.6 L1048.0 509.4 L1048.5 500.7 L1049.0 513.9 L1049.5 513.2 L1050.1 475.7 L1050.6 512.0 L1051.1 487.8 L1051.6 489.3 L1052.1 499.2 L1052.6 462.7 L1053.2 516.2 L1053.7 460.0 L1054.2 509.4 L1054.7 497.6 L1055.2 487.7 L1055.8 473.8 L1056.3 480.9 L1056.8 498.9 L1057.3 498.8 L1057.8 472.6 L1058.3 466.4 L1058.9 501.9 L1059.4 471.6 L1059.9 482.9 L1060.4 488.3 L1060.9 511.6 L1061.5 514.3 L1062.0 485.1 L1062.5 520.8 L1063.0 501.1 L1063.5 485.2 L1064.0 521.2 L1064.6 464.4 L1065.1 463.8 L1065.6 510.7 L1066.1 494.3 L1066.6 494.5 L1067.2 501.7 L1067.7 500.7 L1068.2 484.0 L1068.7 463.6 L1069.2 490.8 L1069.7 490.4 L1070.3 489.9 L1070.8 504.0 L1071.3 481.4 L1071.8 500.6 L1072.3 509.0 L1072.8 480.8 L1073.4 522.9 L1073.9 500.7 L1074.4 498.8 L1074.9 494.3 L1075.4 518.4 L1076.0 508.2 L1076.5 494.4 L1077.0 481.5 L1077.5 493.8 L1078.0 495.4 L1078.5 506.2 L1079.1 491.5 L1079.6 523.0 L1080.1 480.7 L1080.6 475.2 L1081.1 492.1 L1081.7 508.4 L1082.2 468.8 L1082.7 503.3 L1083.2 468.6 L1083.7 496.3 L1084.2 504.7 L1084.8 495.3 L1085.3 503.3 L1085.8 494.5 L1086.3 483.0 L1086.8 496.0 L1087.4 499.4 L1087.9 491.9 L1088.4 484.8 L1088.9 491.4 L1089.4 482.2 L1089.9 481.5 L1090.5 486.5 L1091.0 479.1 L1091.5 491.1 L1092.0 471.9 L1092.5 484.4 L1093.1 477.0 L1093.6 494.6 L1094.1 515.5 L1094.6 498.9 L1095.1 490.6 L1095.6 484.9 L1096.2 491.8 L1096.7 466.1 L1097.2 513.3 L1097.7 521.3 L1098.2 494.2 L1098.8 502.7 L1099.3 490.6 L1099.8 479.9 L1100.3 460.8 L1100.8 513.4 L1101.3 509.3 L1101.9 492.0 L1102.4 516.1 L1102.9 503.9 L1103.4 469.2 L1103.9 492.0 L1104.5 491.4 L1105.0 472.2 L1105.5 519.9 L1106.0 488.8 L1106.5 491.7 L1107.0 486.3 L1107.6 507.7 L1108.1 498.1 L1108.6 492.6 L1109.1 478.4 L1109.6 503.1 L1110.2 480.4 L1110.7 522.7 L1111.2 483.6 L1111.7 477.6 L1112.2 506.1 L1112.7 495.7 L1113.3 490.7 L1113.8 485.8 L1114.3 470.4 L1114.8 487.4 L1115.3 494.4 L1115.9 493.9 L1116.4 486.0 L1116.9 477.5 L1117.4 486.3 L1117.9 499.8 L1118.4 496.2 L1119.0 503.8 L1119.5 505.1 L1120.0 498.7 L1120.5 500.1 L1121.0 477.6 L1121.6 510.5 L1122.1 489.2 L1122.6 510.1 L1123.1 477.1 L1123.6 485.3 L1124.1 469.2 L1124.7 481.2 L1125.2 507.5 L1125.7 489.7 L1126.2 500.8 L1126.7 499.0 L1127.3 507.4 L1127.8 495.4 L1128.3 488.7 L1128.8 486.7 L1129.3 464.6 L1129.8 492.9 L1130.4 488.7 L1130.9 491.7 L1131.4 494.4 L1131.9 495.2 L1132.4 489.2 L1133.0 493.4 L1133.5 477.8 L1134.0 482.9 L1134.5 504.7 L1135.0 490.0 L1135.5 484.9 L1136.1 494.5 L1136.6 493.8 L1137.1 491.5 L1137.6 479.8 L1138.1 487.0 L1138.7 498.9 L1139.2 490.7 L1139.7 469.4 L1140.2 505.7 L1140.7 479.0 L1141.2 493.9 L1141.8 462.1 L1142.3 479.4 L1142.8 488.9 L1143.3 491.6 L1143.8 514.9 L1144.4 498.2 L1144.9 461.0 L1145.4 483.7 L1145.9 494.4 L1146.4 489.8 L1146.9 488.9 L1147.5 505.3 L1148.0 487.8 L1148.5 481.2 L1149.0 513.9 L1149.5 493.5 L1150.1 526.6 L1150.6 517.3 L1151.1 475.7 L1151.6 469.2 L1152.1 462.8 L1152.6 510.7 L1153.2 490.8 L1153.7 494.9 L1154.2 471.9 L1154.7 484.1 L1155.2 488.0 L1155.7 479.4 L1156.3 496.8 L1156.8 473.3 L1157.3 494.9 L1157.8 471.2 L1158.3 486.2 L1158.9 485.4 L1159.4 507.9 L1159.9 514.5 L1160.4 515.0 L1160.9 481.1 L1161.4 519.9 L1162.0 466.7 L1162.5 494.5 L1163.0 511.2 L1163.5 483.4 L1164.0 509.4 L1164.6 488.4 L1165.1 493.4 L1165.6 469.4 L1166.1 474.3 L1166.6 473.6 L1167.1 496.6 L1167.7 468.5 L1168.2 490.1 L1168.7 487.0 L1169.2 481.7 L1169.7 484.5 L1170.3 510.8 L1170.8 478.3 L1171.3 514.9 L1171.8 481.2 L1172.3 490.0 L1172.8 487.6 L1173.4 506.7 L1173.9 472.5 L1174.4 491.3 L1174.9 474.9 L1175.4 500.8 L1176.0 500.5 L1176.5 487.6 L1177.0 471.9 L1177.5 510.3 L1178.0 498.2 L1178.5 496.9 L1179.1 493.1 L1179.6 496.1 L1180.1 471.0 L1180.6 477.0 L1181.1 488.2 L1181.7 474.8 L1182.2 471.7 L1182.7 498.7 L1183.2 500.4 L1183.7 477.2 L1184.2 463.6 L1184.8 521.7 L1185.3 498.7 L1185.8 475.7 L1186.3 501.6 L1186.8 474.2 L1187.4 484.7 L1187.9 508.9 L1188.4 496.0 L1188.9 482.3 L1189.4 503.0 L1189.9 463.8 L1190.5 505.3 L1191.0 449.5 L1191.5 514.8" fill="none" stroke="#62cbc6" stroke-width="1.55" stroke-linejoin="round" stroke-linecap="round" />
<rect x="1030.2" y="574.2" width="162.1" height="1.9" fill="#1b84c2"/>
<text x="1057.5" y="591.9" text-anchor="middle" font-size="10.3" fill="#8a92ab" >Feb 22</text><rect x="1057.0" y="576.4" width="1" height="2.6" fill="#343a4d"/><text x="1111.1" y="591.9" text-anchor="middle" font-size="10.3" fill="#8a92ab" >Feb 23</text><rect x="1110.6" y="576.4" width="1" height="2.6" fill="#343a4d"/><text x="1164.7" y="591.9" text-anchor="middle" font-size="10.3" fill="#8a92ab" >Feb 24</text><rect x="1164.2" y="576.4" width="1" height="2.6" fill="#343a4d"/>
<rect x="1002.9" y="607.3" width="7.4" height="7.4" rx="1.6" fill="#16a4ee"/><text x="1014.0" y="614.6" text-anchor="start" font-size="11.7" fill="#8a92ab" >postgres-primary</text>
<text x="1175.4" y="612.8" text-anchor="start" font-size="10.9" fill="#8a92ab" >+1</text>
</svg>
</div>
</body></html>
